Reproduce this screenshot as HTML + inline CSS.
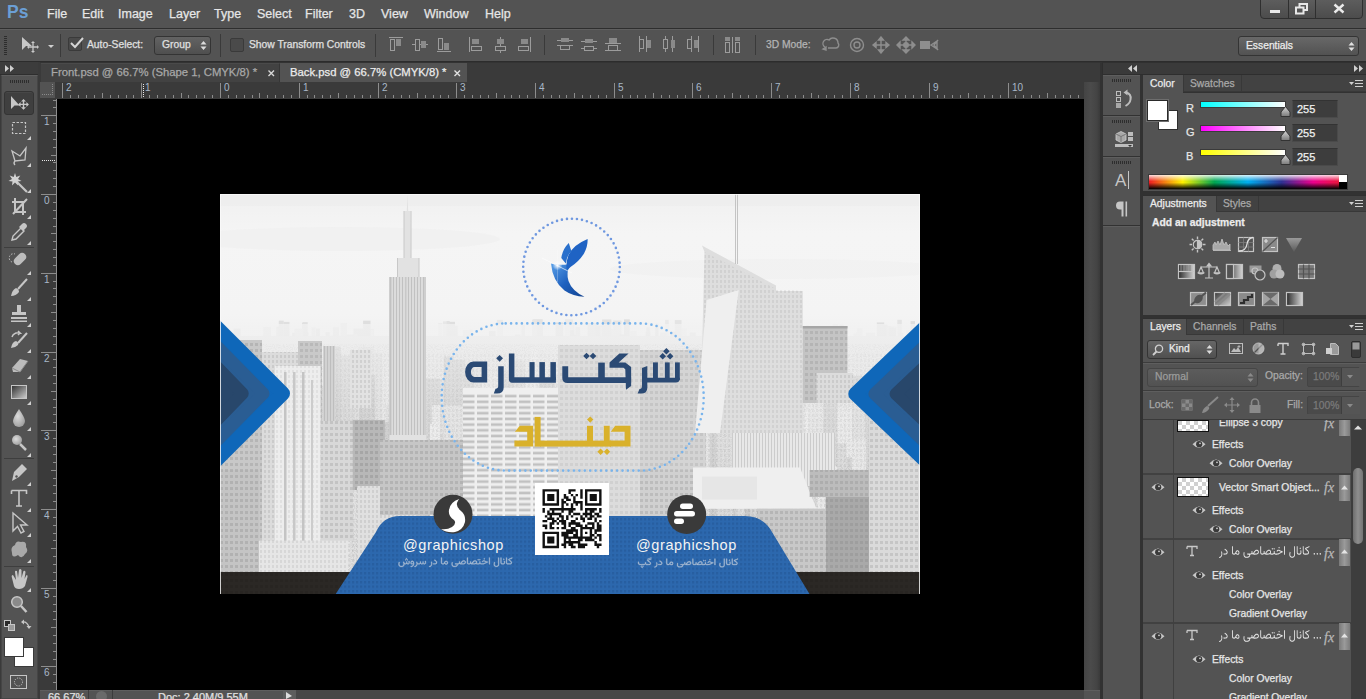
<!DOCTYPE html>
<html><head><meta charset="utf-8">
<style>
*{margin:0;padding:0;box-sizing:border-box}
html,body{width:1366px;height:699px;overflow:hidden;background:#535353;font-family:"Liberation Sans",sans-serif;color:#dcdcdc}
.a{position:absolute}
.t{position:absolute;white-space:nowrap;line-height:1;-webkit-text-stroke:0.25px currentColor}
.menu{font-size:12.5px;color:#e6e6e6;top:8px}
.opt{font-size:10.3px;color:#e0e0e0}
.ic{position:absolute}
</style></head><body>
<!-- ===== MENU BAR ===== -->
<div class="a" style="left:0;top:0;width:1366px;height:28px;background:#535353"></div>
<div class="a" style="left:0;top:28px;width:1366px;height:1px;background:#2e2e2e"></div>
<div class="t" style="left:7px;top:4px;font-size:17.5px;font-weight:bold;color:#6b9fd5;letter-spacing:0.2px;-webkit-text-stroke:0">Ps</div>
<div class="t menu" style="left:47px">File</div>
<div class="t menu" style="left:82px">Edit</div>
<div class="t menu" style="left:118px">Image</div>
<div class="t menu" style="left:169px">Layer</div>
<div class="t menu" style="left:214px">Type</div>
<div class="t menu" style="left:257px">Select</div>
<div class="t menu" style="left:305px">Filter</div>
<div class="t menu" style="left:349px">3D</div>
<div class="t menu" style="left:381px">View</div>
<div class="t menu" style="left:424px">Window</div>
<div class="t menu" style="left:485px">Help</div>
<!-- window buttons -->
<div class="a" style="left:1260px;top:-2px;width:103px;height:21px;border:1px solid #2f2f2f;border-radius:0 0 4px 4px;background:linear-gradient(#5e5e5e,#4c4c4c)"></div>
<div class="a" style="left:1288px;top:0;width:1px;height:18px;background:#2f2f2f"></div>
<div class="a" style="left:1315px;top:0;width:1px;height:18px;background:#2f2f2f"></div>
<div class="a" style="left:1270px;top:10px;width:10px;height:3px;background:#e8e8e8"></div>
<svg class="a" style="left:1295px;top:3px" width="14" height="12"><rect x="4.5" y="1" width="7.5" height="6" fill="none" stroke="#e8e8e8" stroke-width="2"/><rect x="1" y="4.5" width="7.5" height="6" fill="#555" stroke="#e8e8e8" stroke-width="2"/></svg>
<svg class="a" style="left:1333px;top:3px" width="12" height="11"><path d="M1.5 1.5 L10.5 9.5 M10.5 1.5 L1.5 9.5" stroke="#eaeaea" stroke-width="2.4"/></svg>

<!-- ===== OPTIONS BAR ===== -->
<div class="a" style="left:0;top:29px;width:1366px;height:33px;background:#535353;border-top:1px solid #5f5f5f"></div>
<div class="a" style="left:4px;top:36px;width:3px;height:20px;background:repeating-linear-gradient(#2d2d2d 0 1px,transparent 1px 2px)"></div>
<svg class="a" style="left:21px;top:36px" width="34" height="18"><path d="M1 1 L1 14 L5 10 L11 10 Z" fill="#c8c8c8"/><path d="M12 6 V16 M7 11 H17" stroke="#c8c8c8" stroke-width="1.3"/><path d="M12 5 l-2 2 h4z M12 17 l-2 -2 h4z M6 11 l2 -2 v4z M18 11 l-2 -2 v4z" fill="#c8c8c8"/><path d="M27 9 h6 l-3 3z" fill="#d0d0d0"/></svg>
<div class="a" style="left:60px;top:34px;width:1px;height:23px;background:#3a3a3a"></div>
<div class="a" style="left:68px;top:37px;width:14px;height:14px;border:1px solid #3a3a3a;border-radius:2px;background:#4a4a4a"></div>
<svg class="a" style="left:69px;top:36px" width="16" height="14"><path d="M2 7 L6 11 L14 2" stroke="#d6d6d6" stroke-width="2" fill="none"/></svg>
<div class="t opt" style="left:87px;top:40px">Auto-Select:</div>
<div class="a" style="left:154px;top:36px;width:57px;height:19px;border:1px solid #343434;border-radius:3px;background:linear-gradient(#636363,#4f4f4f)"></div>
<div class="t opt" style="left:162px;top:40px">Group</div>
<svg class="a" style="left:200px;top:40px" width="7" height="11"><path d="M0.5 4.5 L3.5 1 L6.5 4.5Z M0.5 6.5 L3.5 10 L6.5 6.5Z" fill="#dcdcdc"/></svg>
<div class="a" style="left:220px;top:34px;width:1px;height:23px;background:#3a3a3a"></div>
<div class="a" style="left:230px;top:38px;width:14px;height:14px;border:1px solid #3a3a3a;border-radius:2px;background:#4a4a4a"></div>
<div class="t opt" style="left:249px;top:40px">Show Transform Controls</div>
<div class="a" style="left:375px;top:34px;width:1px;height:23px;background:#3a3a3a"></div>
<!-- align icons -->
<svg class="a" style="left:385px;top:35px" width="380" height="20" fill="none" stroke="#9c9c9c" stroke-width="1">
 <g transform="translate(4,2)"><path d="M0 0.5 H14"/><rect x="1.5" y="2.5" width="4" height="11"/><rect x="7" y="2" width="5" height="7" fill="#8a8a8a" stroke="none"/></g>
 <g transform="translate(27,2)"><path d="M0 7.5 H16"/><rect x="3.5" y="2.5" width="4" height="11" fill="#535353"/><rect x="9" y="4" width="5" height="7" fill="#8a8a8a" stroke="none"/></g>
 <g transform="translate(52,2)"><path d="M0 14.5 H14"/><rect x="1.5" y="1.5" width="4" height="11"/><rect x="7" y="6" width="5" height="7" fill="#8a8a8a" stroke="none"/></g>
 <g transform="translate(84,2)"><path d="M0.5 0 V15"/><rect x="2.5" y="9.5" width="10" height="4"/><rect x="3" y="2" width="7" height="5" fill="#8a8a8a" stroke="none"/></g>
 <g transform="translate(109,2)"><path d="M6.5 0 V16"/><rect x="1.5" y="9.5" width="10" height="4" fill="#535353"/><rect x="3" y="2" width="7" height="5" fill="#8a8a8a" stroke="none"/></g>
 <g transform="translate(132,2)"><path d="M13.5 0 V15"/><rect x="1.5" y="9.5" width="10" height="4"/><rect x="4" y="2" width="7" height="5" fill="#8a8a8a" stroke="none"/></g>
 <path d="M159.5 0 V20" stroke="#3a3a3a"/>
 <g transform="translate(172,2)"><path d="M0 3.5 H16 M0 8.5 H16"/><rect x="3.5" y="8.5" width="9" height="4"/><rect x="4" y="1" width="8" height="4" fill="#8a8a8a" stroke="none"/></g>
 <g transform="translate(196,2)"><path d="M0 4.5 H16 M0 11.5 H16"/><rect x="3.5" y="9.5" width="9" height="4" fill="#535353"/><rect x="4" y="2" width="8" height="4" fill="#8a8a8a" stroke="none"/></g>
 <g transform="translate(220,2)"><path d="M0 6.5 H16 M0 13.5 H16"/><rect x="3.5" y="8.5" width="9" height="5"/><rect x="4" y="1" width="8" height="5" fill="#8a8a8a" stroke="none"/></g>
 <g transform="translate(254,1)"><path d="M0.5 0 V16 M7.5 0 V16"/><rect x="0.5" y="3.5" width="4" height="9"/><rect x="8" y="4" width="4" height="8" fill="#8a8a8a" stroke="none"/></g>
 <g transform="translate(278,1)"><path d="M2.5 0 V16 M9.5 0 V16"/><rect x="0.5" y="3.5" width="4" height="9" fill="#535353"/><rect x="8" y="4" width="4" height="8" fill="#8a8a8a" stroke="none"/></g>
 <g transform="translate(302,1)"><path d="M4.5 0 V16 M11.5 0 V16"/><rect x="0.5" y="3.5" width="4" height="9"/><rect x="7" y="4" width="4" height="8" fill="#8a8a8a" stroke="none"/></g>
 <path d="M328.5 0 V20" stroke="#3a3a3a"/>
 <g transform="translate(340,2)"><path d="M7.5 0 V16"/><rect x="0.5" y="5.5" width="4" height="10"/><rect x="10.5" y="5.5" width="4" height="10"/><rect x="0" y="0" width="5" height="4" fill="#8a8a8a" stroke="none"/><rect x="10" y="0" width="5" height="4" fill="#8a8a8a" stroke="none"/></g>
 <path d="M370.5 0 V22" stroke="#3a3a3a"/>
</svg>
<div class="t opt" style="left:766px;top:40px;color:#b4b4b4">3D Mode:</div>
<svg class="a" style="left:820px;top:36px" width="125" height="18" fill="none" stroke="#8e8e8e" stroke-width="1.4">
 <path d="M5 11 a4 4 0 0 1 4 -7 a5 5 0 0 1 9 3 a3 3 0 0 1 -2 5 h-8"/><path d="M3 13 l3 -2 l0 3z" fill="#8e8e8e"/>
 <circle cx="37" cy="9" r="6.5"/><circle cx="37" cy="9" r="3"/>
 <path d="M61 2 V16 M54 9 H68"/><path d="M61 1 l-2.5 3 h5z M61 17 l-2.5 -3 h5z M53 9 l3 -2.5 v5z M69 9 l-3 -2.5 v5z" fill="#8e8e8e"/>
 <path d="M79 9 H93 M86 3 V15"/><path d="M86 1 l-3 3 h6z M86 17 l-3 -3 h6z M77 9 l3 -3 v6z M95 9 l-3 -3 v6z" fill="#8e8e8e"/><circle cx="86" cy="9" r="3" fill="#8e8e8e" stroke="none"/>
 <rect x="100" y="5" width="10" height="8" fill="#8e8e8e" stroke="none"/><path d="M111 9 l6 -4 v8z M118 4 l-4 5 l4 5" />
</svg>
<div class="a" style="left:1238px;top:36px;width:121px;height:20px;border:1px solid #343434;border-radius:3px;background:linear-gradient(#686868,#525252)"></div>
<div class="t opt" style="left:1246px;top:41px;color:#ececec">Essentials</div>
<svg class="a" style="left:1348px;top:41px" width="7" height="11"><path d="M0.5 4.5 L3.5 1 L6.5 4.5Z M0.5 6.5 L3.5 10 L6.5 6.5Z" fill="#e0e0e0"/></svg>
<div class="a" style="left:0;top:61px;width:1366px;height:1px;background:#2c2c2c"></div>

<!-- ===== LEFT TOOLBAR ===== -->
<div class="a" style="left:0;top:62px;width:40px;height:637px;background:#3a3a3a"></div>
<div class="a" style="left:0;top:62px;width:38px;height:13px;background:#3c3c3c;border-bottom:1px solid #2e2e2e"></div>
<svg class="a" style="left:5px;top:65px" width="12" height="8"><path d="M0 0 L4 3.5 L0 7Z M5 0 L9 3.5 L5 7Z" fill="#cfcfcf"/></svg>
<div class="a" style="left:1px;top:75px;width:37px;height:624px;background:#535353;border:1px solid #454545;border-top-color:#5f5f5f"></div>
<div class="a" style="left:10px;top:80px;width:20px;height:3px;background:repeating-linear-gradient(90deg,#2d2d2d 0 1px,transparent 1px 2px)"></div>
<div class="a" style="left:4px;top:91px;width:30px;height:24px;background:#3f3f3f;border:1px solid #343434;border-radius:3px;box-shadow:inset 0 1px 0 #474747"></div>
<svg class="a" style="left:0;top:0" width="38" height="699">
<g fill="#c6c6c6" stroke="none">
 <!-- move -->
 <path d="M11 96 L11 109 L14.5 105.5 L19.5 105.5 Z"/>
 <path d="M23.5 99 l-2.5 2.5 h1.8 v2.2 h-2.2 v-1.8 l-2.5 2.5 l2.5 2.5 v-1.8 h2.2 v2.2 h-1.8 l2.5 2.5 l2.5 -2.5 h-1.8 v-2.2 h2.2 v1.8 l2.5 -2.5 l-2.5 -2.5 v1.8 h-2.2 v-2.2 h1.8 z"/>
</g>
<!-- marquee -->
<rect x="12.5" y="122.5" width="13" height="11" fill="none" stroke="#c6c6c6" stroke-width="1.2" stroke-dasharray="2.5 1.5"/>
<!-- lasso -->
<path d="M12 151 L20 156 L26 148 L25 160 L15 161 Z M15 161 q-2 2 0 4" fill="none" stroke="#c6c6c6" stroke-width="1.3"/>
<!-- magic wand -->
<path d="M16 181 L27 192" stroke="#c6c6c6" stroke-width="2.2"/>
<path d="M15 173 l1.3 4 l4 -1.5 l-2.3 3.5 l3.5 2 l-4 .5 l.5 4 l-3 -3 l-3 3 l.5 -4 l-4 -.5 l3.5 -2 l-2.3 -3.5 l4 1.5z" fill="#d2d2d2"/>
<!-- crop -->
<path d="M15 198 V212 H26 M12 202 H23 V215 M13 214 L27 199" fill="none" stroke="#c6c6c6" stroke-width="2"/>
<!-- eyedropper -->
<path d="M12 240 L13 236 L21 228 L24 231 L16 239 Z" fill="none" stroke="#c6c6c6" stroke-width="1.4"/>
<path d="M19 227 L22 224 Q24 222 26 224 Q28 226 26 228 L23 231 Z" fill="#c6c6c6"/>
<line x1="4" y1="247.5" x2="34" y2="247.5" stroke="#3e3e3e"/>
<!-- healing -->
<rect x="13" y="255" width="14" height="8" rx="4" transform="rotate(-45 20 259)" fill="#bdbdbd"/>
<path d="M12 262 a4 4 0 0 1 3 -8" fill="none" stroke="#c6c6c6" stroke-dasharray="1.5 1.5"/>
<!-- brush -->
<path d="M18 289 L27 279" stroke="#c6c6c6" stroke-width="2"/>
<path d="M11 296 Q12 290 16 288 Q19 289 19 292 Q16 296 11 296Z" fill="#c6c6c6"/>
<!-- stamp -->
<path d="M17 305 h4 v7 h5 v3 h-14 v-3 h5z" fill="#c6c6c6"/><rect x="11" y="317" width="16" height="2" fill="#c6c6c6"/><rect x="11" y="320.5" width="16" height="1.5" fill="#c6c6c6"/>
<!-- history brush -->
<path d="M12 337 q2 -5 8 -4 l-2 -2 m2 2 l-2 2" fill="none" stroke="#c6c6c6" stroke-width="1.5"/>
<path d="M18 343 L27 333" stroke="#c6c6c6" stroke-width="2"/><path d="M11 348 Q12 342 16 341 Q19 342 18 345 Q15 348 11 348Z" fill="#c6c6c6"/>
<!-- eraser -->
<path d="M12 368 L20 359 L28 361 L20 372 L13 372 Z" fill="#bcbcbc"/><path d="M12 368 L20 372 L28 361" fill="none" stroke="#8a8a8a"/>
<!-- gradient -->
<defs><linearGradient id="gtool" x1="0" y1="0" x2="1" y2="1"><stop offset="0" stop-color="#2e2e2e"/><stop offset="1" stop-color="#d0d0d0"/></linearGradient>
<radialGradient id="dropg" cx=".4" cy=".4" r=".7"><stop offset="0" stop-color="#dcdcdc"/><stop offset="1" stop-color="#9a9a9a"/></radialGradient></defs>
<rect x="11.5" y="385.5" width="15" height="13" fill="url(#gtool)" stroke="#c6c6c6"/>
<!-- blur drop -->
<path d="M19 409 Q13 418 13 421 A6 6 0 0 0 25 421 Q25 418 19 409Z" fill="url(#dropg)"/>
<!-- dodge -->
<circle cx="17" cy="440" r="5" fill="url(#dropg)"/><path d="M20 444 L26 450" stroke="#c6c6c6" stroke-width="2.5"/>
<line x1="4" y1="458.5" x2="34" y2="458.5" stroke="#3e3e3e"/>
<!-- pen -->
<path d="M12 481 L14 472 L22 464 L27 469 L19 477 Z" fill="#c6c6c6"/><circle cx="16.5" cy="476.5" r="1.2" fill="#535353"/>
<!-- type -->
<path d="M11.5 490.5 H26.5 V494 M11.5 490.5 V494 M19 490.5 V506 M16 506 H22" fill="none" stroke="#c6c6c6" stroke-width="1.6"/>
<!-- path select -->
<path d="M13 513 L13 531 L17.5 526.5 L21 533 L24 531.5 L20.5 525 L27 525 Z" fill="none" stroke="#c6c6c6" stroke-width="1.4"/>
<!-- shape -->
<path d="M12 553 Q10 547 15 545 Q16 540 21 542 Q27 541 26 547 Q29 551 25 554 Q22 560 18 555 Q12 559 12 553Z" fill="#a9a9a9"/>
<line x1="4" y1="566.5" x2="34" y2="566.5" stroke="#3e3e3e"/>
<!-- hand -->
<path d="M12 578 Q11 575 13 575 L16 580 L15 572 Q15 570 17 571 L18 578 L19 570 Q20 568 21.5 570 L21.5 578 L23.5 571 Q25 570 25.5 572 L24.5 579 L26.5 575 Q28 575 27.5 577 L25 586 Q23 589 19 589 Q15 589 14 586 Z" fill="#c6c6c6"/>
<!-- zoom -->
<circle cx="17" cy="602" r="5.3" fill="#8a8a8a" stroke="#c6c6c6" stroke-width="1.5"/><path d="M21 606 L26.5 612" stroke="#c6c6c6" stroke-width="2.5"/>
<!-- default colors + swap -->
<rect x="4.5" y="620.5" width="6" height="6" fill="#2a2a2a" stroke="#c6c6c6"/><rect x="8.5" y="624.5" width="6" height="6" fill="#9a9a9a" stroke="#c6c6c6"/>
<path d="M22 622 q5 -1 7 5" fill="none" stroke="#c6c6c6" stroke-width="1.2"/><path d="M21 622 l3 -2.5 v5z M29 629 l-2.5 -3 h5z" fill="#c6c6c6"/>
<!-- swatches -->
<rect x="14.5" y="647.5" width="19" height="19" fill="#fff" stroke="#3a3a3a"/>
<rect x="4.5" y="637.5" width="19" height="19" fill="#fff" stroke="#3a3a3a"/>
<!-- quick mask -->
<rect x="10.5" y="675.5" width="16" height="13" fill="none" stroke="#c6c6c6"/><circle cx="18.5" cy="682" r="4" fill="none" stroke="#c6c6c6" stroke-dasharray="1.2 1.2"/>
<!-- corner triangles -->
<g fill="#d0d0d0">
 <path d="M31 136 v4 h-4z"/><path d="M31 163 v4 h-4z"/><path d="M31 189 v4 h-4z"/><path d="M31 215 v4 h-4z"/><path d="M31 241 v4 h-4z"/>
 <path d="M31 271 v4 h-4z"/><path d="M31 297 v4 h-4z"/><path d="M31 323 v4 h-4z"/><path d="M31 349 v4 h-4z"/><path d="M31 375 v4 h-4z"/><path d="M31 401 v4 h-4z"/><path d="M31 427 v4 h-4z"/><path d="M31 453 v4 h-4z"/>
 <path d="M31 482 v4 h-4z"/><path d="M31 508 v4 h-4z"/><path d="M31 533 v4 h-4z"/><path d="M31 559 v4 h-4z"/>
 <path d="M31 588 v4 h-4z"/>
</g>
</svg>


<!-- ===== DOCUMENT AREA ===== -->
<div class="a" style="left:40px;top:62px;width:1060px;height:20px;background:#3a3a3a;border-top:1px solid #333"></div>
<div class="a" style="left:41px;top:63px;width:239px;height:19px;background:#424242;border-top:1px solid #4a4a4a;border-right:1px solid #363636"></div>
<div class="t" style="left:51px;top:67px;font-size:11.3px;color:#a8a8a8">Front.psd @ 66.7% (Shape 1, CMYK/8) *</div>
<svg class="a" style="left:267px;top:69px" width="9" height="9"><path d="M1.5 1.5 L7 7 M7 1.5 L1.5 7" stroke="#d8d8d8" stroke-width="1.4"/></svg>
<div class="a" style="left:280px;top:63px;width:187px;height:19px;background:#535353"></div>
<div class="t" style="left:290px;top:67px;font-size:11.3px;color:#ececec">Back.psd @ 66.7% (CMYK/8) *</div>
<svg class="a" style="left:453px;top:69px" width="9" height="9"><path d="M1.5 1.5 L7 7 M7 1.5 L1.5 7" stroke="#e0e0e0" stroke-width="1.4"/></svg>
<!-- rulers -->
<div class="a" style="left:40px;top:82px;width:1044px;height:17px;background:#3a3a3a"></div>
<div class="a" style="left:40px;top:99px;width:17px;height:591px;background:#3a3a3a"></div>
<div class="a" style="left:40px;top:82px;width:16px;height:16px;background:#535353;border-right:1px solid #3a3a3a"></div>
<div class="a" style="left:42px;top:94px;width:12px;height:1px;background:repeating-linear-gradient(90deg,#8a8a8a 0 1px,transparent 1px 2px)"></div>
<div class="a" style="left:52px;top:84px;width:1px;height:12px;background:repeating-linear-gradient(#8a8a8a 0 1px,transparent 1px 2px)"></div>
<svg class="a" style="left:57px;top:82px" width="1027" height="16"><g stroke="#8d8d8d" stroke-width="1"><line x1="5.5" y1="1" x2="5.5" y2="16" /><line x1="13.5" y1="13" x2="13.5" y2="16" /><line x1="21.5" y1="13" x2="21.5" y2="16" /><line x1="29.5" y1="13" x2="29.5" y2="16" /><line x1="37.5" y1="13" x2="37.5" y2="16" /><line x1="45.5" y1="11" x2="45.5" y2="16" /><line x1="53.5" y1="13" x2="53.5" y2="16" /><line x1="61.5" y1="13" x2="61.5" y2="16" /><line x1="69.5" y1="13" x2="69.5" y2="16" /><line x1="76.5" y1="13" x2="76.5" y2="16" /><line x1="84.5" y1="1" x2="84.5" y2="16" /><line x1="92.5" y1="13" x2="92.5" y2="16" /><line x1="100.5" y1="13" x2="100.5" y2="16" /><line x1="108.5" y1="13" x2="108.5" y2="16" /><line x1="116.5" y1="13" x2="116.5" y2="16" /><line x1="124.5" y1="11" x2="124.5" y2="16" /><line x1="131.5" y1="13" x2="131.5" y2="16" /><line x1="139.5" y1="13" x2="139.5" y2="16" /><line x1="147.5" y1="13" x2="147.5" y2="16" /><line x1="155.5" y1="13" x2="155.5" y2="16" /><line x1="163.5" y1="1" x2="163.5" y2="16" /><line x1="171.5" y1="13" x2="171.5" y2="16" /><line x1="179.5" y1="13" x2="179.5" y2="16" /><line x1="187.5" y1="13" x2="187.5" y2="16" /><line x1="195.5" y1="13" x2="195.5" y2="16" /><line x1="202.5" y1="11" x2="202.5" y2="16" /><line x1="210.5" y1="13" x2="210.5" y2="16" /><line x1="218.5" y1="13" x2="218.5" y2="16" /><line x1="226.5" y1="13" x2="226.5" y2="16" /><line x1="234.5" y1="13" x2="234.5" y2="16" /><line x1="242.5" y1="1" x2="242.5" y2="16" /><line x1="250.5" y1="13" x2="250.5" y2="16" /><line x1="257.5" y1="13" x2="257.5" y2="16" /><line x1="265.5" y1="13" x2="265.5" y2="16" /><line x1="273.5" y1="13" x2="273.5" y2="16" /><line x1="281.5" y1="11" x2="281.5" y2="16" /><line x1="289.5" y1="13" x2="289.5" y2="16" /><line x1="297.5" y1="13" x2="297.5" y2="16" /><line x1="305.5" y1="13" x2="305.5" y2="16" /><line x1="313.5" y1="13" x2="313.5" y2="16" /><line x1="321.5" y1="1" x2="321.5" y2="16" /><line x1="328.5" y1="13" x2="328.5" y2="16" /><line x1="336.5" y1="13" x2="336.5" y2="16" /><line x1="344.5" y1="13" x2="344.5" y2="16" /><line x1="352.5" y1="13" x2="352.5" y2="16" /><line x1="360.5" y1="11" x2="360.5" y2="16" /><line x1="368.5" y1="13" x2="368.5" y2="16" /><line x1="376.5" y1="13" x2="376.5" y2="16" /><line x1="383.5" y1="13" x2="383.5" y2="16" /><line x1="391.5" y1="13" x2="391.5" y2="16" /><line x1="399.5" y1="1" x2="399.5" y2="16" /><line x1="407.5" y1="13" x2="407.5" y2="16" /><line x1="415.5" y1="13" x2="415.5" y2="16" /><line x1="423.5" y1="13" x2="423.5" y2="16" /><line x1="431.5" y1="13" x2="431.5" y2="16" /><line x1="439.5" y1="11" x2="439.5" y2="16" /><line x1="447.5" y1="13" x2="447.5" y2="16" /><line x1="454.5" y1="13" x2="454.5" y2="16" /><line x1="462.5" y1="13" x2="462.5" y2="16" /><line x1="470.5" y1="13" x2="470.5" y2="16" /><line x1="478.5" y1="1" x2="478.5" y2="16" /><line x1="486.5" y1="13" x2="486.5" y2="16" /><line x1="494.5" y1="13" x2="494.5" y2="16" /><line x1="502.5" y1="13" x2="502.5" y2="16" /><line x1="509.5" y1="13" x2="509.5" y2="16" /><line x1="517.5" y1="11" x2="517.5" y2="16" /><line x1="525.5" y1="13" x2="525.5" y2="16" /><line x1="533.5" y1="13" x2="533.5" y2="16" /><line x1="541.5" y1="13" x2="541.5" y2="16" /><line x1="549.5" y1="13" x2="549.5" y2="16" /><line x1="557.5" y1="1" x2="557.5" y2="16" /><line x1="565.5" y1="13" x2="565.5" y2="16" /><line x1="573.5" y1="13" x2="573.5" y2="16" /><line x1="580.5" y1="13" x2="580.5" y2="16" /><line x1="588.5" y1="13" x2="588.5" y2="16" /><line x1="596.5" y1="11" x2="596.5" y2="16" /><line x1="604.5" y1="13" x2="604.5" y2="16" /><line x1="612.5" y1="13" x2="612.5" y2="16" /><line x1="620.5" y1="13" x2="620.5" y2="16" /><line x1="628.5" y1="13" x2="628.5" y2="16" /><line x1="635.5" y1="1" x2="635.5" y2="16" /><line x1="643.5" y1="13" x2="643.5" y2="16" /><line x1="651.5" y1="13" x2="651.5" y2="16" /><line x1="659.5" y1="13" x2="659.5" y2="16" /><line x1="667.5" y1="13" x2="667.5" y2="16" /><line x1="675.5" y1="11" x2="675.5" y2="16" /><line x1="683.5" y1="13" x2="683.5" y2="16" /><line x1="691.5" y1="13" x2="691.5" y2="16" /><line x1="699.5" y1="13" x2="699.5" y2="16" /><line x1="706.5" y1="13" x2="706.5" y2="16" /><line x1="714.5" y1="1" x2="714.5" y2="16" /><line x1="722.5" y1="13" x2="722.5" y2="16" /><line x1="730.5" y1="13" x2="730.5" y2="16" /><line x1="738.5" y1="13" x2="738.5" y2="16" /><line x1="746.5" y1="13" x2="746.5" y2="16" /><line x1="754.5" y1="11" x2="754.5" y2="16" /><line x1="761.5" y1="13" x2="761.5" y2="16" /><line x1="769.5" y1="13" x2="769.5" y2="16" /><line x1="777.5" y1="13" x2="777.5" y2="16" /><line x1="785.5" y1="13" x2="785.5" y2="16" /><line x1="793.5" y1="1" x2="793.5" y2="16" /><line x1="801.5" y1="13" x2="801.5" y2="16" /><line x1="809.5" y1="13" x2="809.5" y2="16" /><line x1="817.5" y1="13" x2="817.5" y2="16" /><line x1="825.5" y1="13" x2="825.5" y2="16" /><line x1="832.5" y1="11" x2="832.5" y2="16" /><line x1="840.5" y1="13" x2="840.5" y2="16" /><line x1="848.5" y1="13" x2="848.5" y2="16" /><line x1="856.5" y1="13" x2="856.5" y2="16" /><line x1="864.5" y1="13" x2="864.5" y2="16" /><line x1="872.5" y1="1" x2="872.5" y2="16" /><line x1="880.5" y1="13" x2="880.5" y2="16" /><line x1="887.5" y1="13" x2="887.5" y2="16" /><line x1="895.5" y1="13" x2="895.5" y2="16" /><line x1="903.5" y1="13" x2="903.5" y2="16" /><line x1="911.5" y1="11" x2="911.5" y2="16" /><line x1="919.5" y1="13" x2="919.5" y2="16" /><line x1="927.5" y1="13" x2="927.5" y2="16" /><line x1="935.5" y1="13" x2="935.5" y2="16" /><line x1="943.5" y1="13" x2="943.5" y2="16" /><line x1="951.5" y1="1" x2="951.5" y2="16" /><line x1="958.5" y1="13" x2="958.5" y2="16" /><line x1="966.5" y1="13" x2="966.5" y2="16" /><line x1="974.5" y1="13" x2="974.5" y2="16" /><line x1="982.5" y1="13" x2="982.5" y2="16" /><line x1="990.5" y1="11" x2="990.5" y2="16" /><line x1="998.5" y1="13" x2="998.5" y2="16" /><line x1="1006.5" y1="13" x2="1006.5" y2="16" /><line x1="1013.5" y1="13" x2="1013.5" y2="16" /><line x1="1021.5" y1="13" x2="1021.5" y2="16" /></g><g fill="#a9b8c8" font-size="10" font-family="Liberation Sans"><text x="9" y="9">2</text><text x="88" y="9">1</text><text x="167" y="9">0</text><text x="246" y="9">1</text><text x="325" y="9">2</text><text x="403" y="9">3</text><text x="482" y="9">4</text><text x="561" y="9">5</text><text x="639" y="9">6</text><text x="718" y="9">7</text><text x="797" y="9">8</text><text x="876" y="9">9</text><text x="955" y="9">10</text></g><line x1="0" y1="16.5" x2="1027" y2="16.5" stroke="#8d8d8d"/></svg>
<svg class="a" style="left:40px;top:99px" width="17" height="591"><g stroke="#8d8d8d" stroke-width="1"><line x1="13" y1="1.5" x2="16" y2="1.5" /><line x1="13" y1="8.5" x2="16" y2="8.5" /><line x1="1" y1="16.5" x2="16" y2="16.5" /><line x1="13" y1="24.5" x2="16" y2="24.5" /><line x1="13" y1="32.5" x2="16" y2="32.5" /><line x1="13" y1="40.5" x2="16" y2="40.5" /><line x1="13" y1="48.5" x2="16" y2="48.5" /><line x1="11" y1="56.5" x2="16" y2="56.5" /><line x1="13" y1="63.5" x2="16" y2="63.5" /><line x1="13" y1="71.5" x2="16" y2="71.5" /><line x1="13" y1="79.5" x2="16" y2="79.5" /><line x1="13" y1="87.5" x2="16" y2="87.5" /><line x1="1" y1="95.5" x2="16" y2="95.5" /><line x1="13" y1="103.5" x2="16" y2="103.5" /><line x1="13" y1="111.5" x2="16" y2="111.5" /><line x1="13" y1="119.5" x2="16" y2="119.5" /><line x1="13" y1="127.5" x2="16" y2="127.5" /><line x1="11" y1="134.5" x2="16" y2="134.5" /><line x1="13" y1="142.5" x2="16" y2="142.5" /><line x1="13" y1="150.5" x2="16" y2="150.5" /><line x1="13" y1="158.5" x2="16" y2="158.5" /><line x1="13" y1="166.5" x2="16" y2="166.5" /><line x1="1" y1="174.5" x2="16" y2="174.5" /><line x1="13" y1="182.5" x2="16" y2="182.5" /><line x1="13" y1="189.5" x2="16" y2="189.5" /><line x1="13" y1="197.5" x2="16" y2="197.5" /><line x1="13" y1="205.5" x2="16" y2="205.5" /><line x1="11" y1="213.5" x2="16" y2="213.5" /><line x1="13" y1="221.5" x2="16" y2="221.5" /><line x1="13" y1="229.5" x2="16" y2="229.5" /><line x1="13" y1="237.5" x2="16" y2="237.5" /><line x1="13" y1="245.5" x2="16" y2="245.5" /><line x1="1" y1="253.5" x2="16" y2="253.5" /><line x1="13" y1="260.5" x2="16" y2="260.5" /><line x1="13" y1="268.5" x2="16" y2="268.5" /><line x1="13" y1="276.5" x2="16" y2="276.5" /><line x1="13" y1="284.5" x2="16" y2="284.5" /><line x1="11" y1="292.5" x2="16" y2="292.5" /><line x1="13" y1="300.5" x2="16" y2="300.5" /><line x1="13" y1="308.5" x2="16" y2="308.5" /><line x1="13" y1="315.5" x2="16" y2="315.5" /><line x1="13" y1="323.5" x2="16" y2="323.5" /><line x1="1" y1="331.5" x2="16" y2="331.5" /><line x1="13" y1="339.5" x2="16" y2="339.5" /><line x1="13" y1="347.5" x2="16" y2="347.5" /><line x1="13" y1="355.5" x2="16" y2="355.5" /><line x1="13" y1="363.5" x2="16" y2="363.5" /><line x1="11" y1="371.5" x2="16" y2="371.5" /><line x1="13" y1="379.5" x2="16" y2="379.5" /><line x1="13" y1="386.5" x2="16" y2="386.5" /><line x1="13" y1="394.5" x2="16" y2="394.5" /><line x1="13" y1="402.5" x2="16" y2="402.5" /><line x1="1" y1="410.5" x2="16" y2="410.5" /><line x1="13" y1="418.5" x2="16" y2="418.5" /><line x1="13" y1="426.5" x2="16" y2="426.5" /><line x1="13" y1="434.5" x2="16" y2="434.5" /><line x1="13" y1="441.5" x2="16" y2="441.5" /><line x1="11" y1="449.5" x2="16" y2="449.5" /><line x1="13" y1="457.5" x2="16" y2="457.5" /><line x1="13" y1="465.5" x2="16" y2="465.5" /><line x1="13" y1="473.5" x2="16" y2="473.5" /><line x1="13" y1="481.5" x2="16" y2="481.5" /><line x1="1" y1="489.5" x2="16" y2="489.5" /><line x1="13" y1="497.5" x2="16" y2="497.5" /><line x1="13" y1="505.5" x2="16" y2="505.5" /><line x1="13" y1="512.5" x2="16" y2="512.5" /><line x1="13" y1="520.5" x2="16" y2="520.5" /><line x1="11" y1="528.5" x2="16" y2="528.5" /><line x1="13" y1="536.5" x2="16" y2="536.5" /><line x1="13" y1="544.5" x2="16" y2="544.5" /><line x1="13" y1="552.5" x2="16" y2="552.5" /><line x1="13" y1="560.5" x2="16" y2="560.5" /><line x1="1" y1="567.5" x2="16" y2="567.5" /><line x1="13" y1="575.5" x2="16" y2="575.5" /><line x1="13" y1="583.5" x2="16" y2="583.5" /></g><g fill="#a9b8c8" font-size="10" font-family="Liberation Sans"><text x="4" y="26">1</text><text x="4" y="105">0</text><text x="4" y="184">1</text><text x="4" y="263">2</text><text x="4" y="341">3</text><text x="4" y="420">4</text><text x="4" y="499">5</text><text x="4" y="577">6</text></g><line x1="16.5" y1="0" x2="16.5" y2="591" stroke="#8d8d8d"/></svg>
<div class="a" style="left:42px;top:160px;width:13px;height:1px;background:repeating-linear-gradient(90deg,#e8e8e8 0 1px,transparent 1px 2px)"></div>
<div class="a" style="left:143px;top:84px;width:1px;height:13px;background:repeating-linear-gradient(#e8e8e8 0 1px,transparent 1px 2px)"></div>
<!-- canvas -->
<div class="a" style="left:57px;top:99px;width:1027px;height:591px;background:#000"></div>
<!-- vertical scrollbar -->
<div class="a" style="left:1084px;top:82px;width:16px;height:608px;background:linear-gradient(90deg,#444,#4b4b4b 40%,#444 80%,#3a3a3a)"></div>
<!-- status bar -->
<div class="a" style="left:40px;top:690px;width:1060px;height:9px;background:#535353;border-top:1px solid #5e5e5e"></div>
<div class="t" style="left:48px;top:692px;font-size:11px;color:#e0e0e0">66.67%</div>
<div class="a" style="left:88px;top:690px;width:1px;height:9px;background:#3c3c3c"></div>
<div class="a" style="left:96px;top:691px;width:11px;height:11px;border-radius:50%;background:#6a6a6a"></div>
<div class="a" style="left:112px;top:690px;width:1px;height:9px;background:#3c3c3c"></div>
<div class="t" style="left:158px;top:692px;font-size:11px;color:#e0e0e0">Doc: 2.40M/9.55M</div>
<div class="a" style="left:283px;top:690px;width:13px;height:9px;background:#5d5d5d"></div>
<svg class="a" style="left:286px;top:692px" width="7" height="7"><path d="M0 0 L6 4 L0 7Z" fill="#dcdcdc"/></svg>
<div class="a" style="left:296px;top:690px;width:788px;height:9px;background:#474747"></div>

<svg class="a" style="left:220px;top:194px" width="700" height="400" viewBox="0 0 700 400">
<defs>
<linearGradient id="sky" x1="0" y1="0" x2="0" y2="1">
 <stop offset="0" stop-color="#f0f0f0"/><stop offset="0.1" stop-color="#f5f5f5"/><stop offset="0.3" stop-color="#f4f4f4"/><stop offset="0.36" stop-color="#f0f0f0"/><stop offset="0.42" stop-color="#e8e8e8"/><stop offset="1" stop-color="#d8d8d8"/>
</linearGradient>
<pattern id="win" width="4" height="5" patternUnits="userSpaceOnUse"><rect x="0" y="0" width="2" height="3" fill="#000" opacity="0.13"/></pattern>
<pattern id="win2" width="5" height="6" patternUnits="userSpaceOnUse"><rect x="0" y="1" width="3" height="3" fill="#000" opacity="0.16"/></pattern>
<pattern id="vst" width="3" height="4" patternUnits="userSpaceOnUse"><rect x="0" y="0" width="1" height="4" fill="#000" opacity="0.12"/></pattern>
<pattern id="hrow" width="14" height="5.7" patternUnits="userSpaceOnUse"><rect x="1" y="1.5" width="11.5" height="2.6" fill="#9a9a9a" opacity="0.55"/></pattern>
<pattern id="bwin" width="4" height="4.5" patternUnits="userSpaceOnUse"><rect x="0" y="0" width="2.2" height="2.4" fill="#0b2a55" opacity="0.16"/></pattern>
<filter id="noise" x="0" y="0" width="100%" height="100%"><feTurbulence type="fractalNoise" baseFrequency="0.9" numOctaves="2" seed="3"/><feColorMatrix values="0 0 0 0 0  0 0 0 0 0  0 0 0 0 0  0 0 0 0.9 -0.35"/></filter>
<linearGradient id="haze" x1="0" y1="0" x2="0" y2="1"><stop offset="0" stop-color="#f2f2f2" stop-opacity=".75"/><stop offset="0.35" stop-color="#f2f2f2" stop-opacity=".35"/><stop offset="1" stop-color="#f2f2f2" stop-opacity="0"/></linearGradient>
<clipPath id="cardclip"><rect x="0" y="0" width="700" height="400"/></clipPath>
<radialGradient id="spark" cx="0.5" cy="0.5" r="0.5"><stop offset="0" stop-color="#fff" stop-opacity="1"/><stop offset="1" stop-color="#fff" stop-opacity="0"/></radialGradient>
<linearGradient id="birdg" x1="0" y1="0" x2="1" y2="1"><stop offset="0" stop-color="#5aa0e8"/><stop offset="0.5" stop-color="#1f62c0"/><stop offset="1" stop-color="#12428f"/></linearGradient>
</defs>
<g clip-path="url(#cardclip)">
<rect x="0" y="0" width="700" height="400" fill="url(#sky)"/>
<ellipse cx="120" cy="45" rx="160" ry="12" fill="#ececec" opacity=".35"/><ellipse cx="560" cy="75" rx="170" ry="10" fill="#ebebeb" opacity=".3"/><rect x="0" y="0" width="700" height="12" fill="#ebebeb" opacity=".5"/>
<rect x="226.7" y="130.9" width="4.1" height="34.1" fill="rgb(223,223,223)"/>
<rect x="574.9" y="132.1" width="3.7" height="32.9" fill="rgb(230,230,230)"/>
<rect x="150.3" y="134.9" width="3.6" height="30.1" fill="rgb(225,225,225)"/>
<rect x="63.5" y="127.9" width="6.0" height="37.1" fill="rgb(223,223,223)"/>
<rect x="663.2" y="132.1" width="7.4" height="32.9" fill="rgb(222,222,222)"/>
<rect x="404.0" y="125.4" width="5.8" height="39.6" fill="rgb(222,222,222)"/>
<rect x="389.7" y="134.9" width="3.9" height="30.1" fill="rgb(230,230,230)"/>
<rect x="82.5" y="128.1" width="5.2" height="36.9" fill="rgb(224,224,224)"/>
<rect x="72.1" y="138.8" width="7.0" height="26.2" fill="rgb(223,223,223)"/>
<rect x="383.4" y="141.0" width="3.4" height="24.0" fill="rgb(225,225,225)"/>
<rect x="347.5" y="128.8" width="6.7" height="36.2" fill="rgb(229,229,229)"/>
<rect x="409.9" y="136.9" width="6.2" height="28.1" fill="rgb(234,234,234)"/>
<rect x="125.8" y="140.6" width="8.5" height="24.4" fill="rgb(226,226,226)"/>
<rect x="367.6" y="129.6" width="9.1" height="35.4" fill="rgb(226,226,226)"/>
<rect x="426.3" y="133.3" width="3.5" height="31.7" fill="rgb(224,224,224)"/>
<rect x="530.0" y="133.7" width="4.1" height="31.3" fill="rgb(222,222,222)"/>
<rect x="673.4" y="132.5" width="3.5" height="32.5" fill="rgb(234,234,234)"/>
<rect x="612.8" y="130.2" width="5.2" height="34.8" fill="rgb(231,231,231)"/>
<rect x="347.7" y="140.8" width="8.6" height="24.2" fill="rgb(223,223,223)"/>
<rect x="661.3" y="130.7" width="6.3" height="34.3" fill="rgb(222,222,222)"/>
<rect x="511.8" y="132.2" width="5.2" height="32.8" fill="rgb(232,232,232)"/>
<rect x="575.3" y="135.4" width="5.0" height="29.6" fill="rgb(232,232,232)"/>
<rect x="242.9" y="136.0" width="9.6" height="29.0" fill="rgb(231,231,231)"/>
<rect x="82.0" y="128.9" width="3.4" height="36.1" fill="rgb(224,224,224)"/>
<rect x="516.9" y="126.4" width="5.8" height="38.6" fill="rgb(229,229,229)"/>
<rect x="56.4" y="132.7" width="6.1" height="32.3" fill="rgb(224,224,224)"/>
<rect x="573.5" y="137.3" width="9.0" height="27.7" fill="rgb(228,228,228)"/>
<rect x="690.5" y="135.5" width="7.8" height="29.5" fill="rgb(225,225,225)"/>
<rect x="105.6" y="138.1" width="4.2" height="26.9" fill="rgb(225,225,225)"/>
<rect x="8.4" y="138.9" width="8.8" height="26.1" fill="rgb(226,226,226)"/>
<rect x="2.9" y="135.7" width="5.9" height="29.3" fill="rgb(231,231,231)"/>
<rect x="223.0" y="127.4" width="3.9" height="37.6" fill="rgb(231,231,231)"/>
<rect x="458.5" y="134.2" width="8.2" height="30.8" fill="rgb(234,234,234)"/>
<rect x="666.3" y="132.5" width="7.8" height="32.5" fill="rgb(228,228,228)"/>
<rect x="279.3" y="131.2" width="3.7" height="33.8" fill="rgb(222,222,222)"/>
<rect x="133.4" y="134.5" width="9.9" height="30.5" fill="rgb(223,223,223)"/>
<rect x="238.0" y="142.0" width="3.4" height="23.0" fill="rgb(224,224,224)"/>
<rect x="375.6" y="131.6" width="9.6" height="33.4" fill="rgb(223,223,223)"/>
<rect x="612.0" y="139.5" width="7.3" height="25.5" fill="rgb(226,226,226)"/>
<rect x="668.8" y="133.9" width="7.2" height="31.1" fill="rgb(223,223,223)"/>
<rect x="594.3" y="134.1" width="10.0" height="30.9" fill="rgb(229,229,229)"/>
<rect x="218.3" y="129.3" width="4.0" height="35.7" fill="rgb(233,233,233)"/>
<rect x="185.3" y="139.3" width="8.8" height="25.7" fill="rgb(222,222,222)"/>
<rect x="143.7" y="135.9" width="9.7" height="29.1" fill="rgb(233,233,233)"/>
<rect x="380.2" y="133.0" width="3.2" height="32.0" fill="rgb(232,232,232)"/>
<rect x="604.3" y="137.6" width="7.9" height="27.4" fill="rgb(227,227,227)"/>
<rect x="635.8" y="138.2" width="5.5" height="26.8" fill="rgb(230,230,230)"/>
<rect x="545.3" y="138.2" width="5.3" height="26.8" fill="rgb(234,234,234)"/>
<rect x="551.9" y="138.7" width="8.3" height="26.3" fill="rgb(225,225,225)"/>
<rect x="572.8" y="138.1" width="8.2" height="26.9" fill="rgb(230,230,230)"/>
<rect x="344.9" y="125.2" width="8.1" height="39.8" fill="rgb(234,234,234)"/>
<rect x="195.6" y="130.2" width="4.8" height="34.8" fill="rgb(227,227,227)"/>
<rect x="313.1" y="125.2" width="9.6" height="39.8" fill="rgb(227,227,227)"/>
<rect x="56.4" y="134.0" width="3.7" height="31.0" fill="rgb(227,227,227)"/>
<rect x="143.1" y="126.7" width="7.4" height="38.3" fill="rgb(222,222,222)"/>
<rect x="335.6" y="128.4" width="7.6" height="36.6" fill="rgb(223,223,223)"/>
<rect x="584.3" y="135.4" width="3.8" height="29.6" fill="rgb(233,233,233)"/>
<rect x="525.1" y="139.0" width="6.3" height="26.0" fill="rgb(234,234,234)"/>
<rect x="445.1" y="125.9" width="3.6" height="39.1" fill="rgb(233,233,233)"/>
<rect x="277.1" y="125.9" width="5.8" height="39.1" fill="rgb(233,233,233)"/>
<rect x="111.2" y="141.5" width="10.0" height="23.5" fill="rgb(231,231,231)"/>
<rect x="633.4" y="139.5" width="8.6" height="25.5" fill="rgb(231,231,231)"/>
<rect x="686.2" y="136.0" width="7.6" height="29.0" fill="rgb(230,230,230)"/>
<rect x="383.8" y="128.4" width="3.1" height="36.6" fill="rgb(233,233,233)"/>
<rect x="454.8" y="126.1" width="6.7" height="38.9" fill="rgb(228,228,228)"/>
<rect x="690.6" y="127.1" width="4.4" height="37.9" fill="rgb(222,222,222)"/>
<rect x="176.3" y="137.9" width="5.1" height="27.1" fill="rgb(231,231,231)"/>
<rect x="228.2" y="127.8" width="6.8" height="37.2" fill="rgb(222,222,222)"/>
<rect x="637.0" y="134.2" width="5.5" height="30.8" fill="rgb(231,231,231)"/>
<rect x="570.5" y="127.9" width="6.6" height="37.1" fill="rgb(230,230,230)"/>
<rect x="91.5" y="133.3" width="4.1" height="31.7" fill="rgb(229,229,229)"/>
<rect x="543.6" y="128.8" width="7.3" height="36.2" fill="rgb(224,224,224)"/>
<rect x="120.6" y="129.7" width="6.3" height="35.3" fill="rgb(230,230,230)"/>
<rect x="43.2" y="133.0" width="7.8" height="32.0" fill="rgb(229,229,229)"/>
<rect x="549.0" y="132.5" width="3.7" height="32.5" fill="rgb(225,225,225)"/>
<rect x="133.9" y="140.3" width="3.3" height="24.7" fill="rgb(229,229,229)"/>
<rect x="393.2" y="126.5" width="8.3" height="38.5" fill="rgb(229,229,229)"/>
<rect x="227.9" y="131.7" width="9.8" height="33.3" fill="rgb(225,225,225)"/>
<rect x="484.9" y="132.9" width="6.2" height="32.1" fill="rgb(229,229,229)"/>
<rect x="355.4" y="133.1" width="4.7" height="31.9" fill="rgb(226,226,226)"/>
<rect x="645.9" y="138.6" width="9.2" height="26.4" fill="rgb(229,229,229)"/>
<rect x="96.0" y="134.5" width="3.9" height="30.5" fill="rgb(223,223,223)"/>
<rect x="469.8" y="138.4" width="6.0" height="26.6" fill="rgb(226,226,226)"/>
<rect x="548.8" y="139.4" width="9.3" height="25.6" fill="rgb(233,233,233)"/>
<rect x="450.4" y="137.7" width="5.6" height="27.3" fill="rgb(224,224,224)"/>
<rect x="677.3" y="125.8" width="4.5" height="39.2" fill="rgb(228,228,228)"/>
<rect x="619.5" y="130.6" width="4.1" height="34.4" fill="rgb(225,225,225)"/>
<rect x="113.0" y="133.2" width="6.0" height="31.8" fill="rgb(227,227,227)"/>
<rect x="294.9" y="140.4" width="5.5" height="24.6" fill="rgb(227,227,227)"/>
<rect x="13.6" y="134.5" width="6.9" height="30.5" fill="rgb(222,222,222)"/>
<rect x="269.0" y="137.0" width="6.6" height="28.0" fill="rgb(223,223,223)"/>
<rect x="79.0" y="138.1" width="9.4" height="26.9" fill="rgb(223,223,223)"/>
<rect x="58.8" y="126.6" width="4.9" height="38.4" fill="rgb(224,224,224)"/>
<rect x="189.3" y="134.8" width="3.9" height="30.2" fill="rgb(232,232,232)"/>
<rect x="573.3" y="139.5" width="4.8" height="25.5" fill="rgb(230,230,230)"/>
<rect x="399.4" y="140.5" width="7.9" height="24.5" fill="rgb(222,222,222)"/>
<rect x="559.7" y="126.8" width="4.3" height="38.2" fill="rgb(226,226,226)"/>
<rect x="656.8" y="128.4" width="7.4" height="36.6" fill="rgb(223,223,223)"/>
<rect x="425.7" y="137.5" width="4.6" height="27.5" fill="rgb(223,223,223)"/>
<rect x="317.6" y="132.6" width="5.4" height="32.4" fill="rgb(226,226,226)"/>
<rect x="435.2" y="129.9" width="3.3" height="35.1" fill="rgb(223,223,223)"/>
<rect x="678.4" y="138.9" width="4.8" height="26.1" fill="rgb(226,226,226)"/>
<rect x="440.1" y="138.5" width="6.7" height="26.5" fill="rgb(229,229,229)"/>
<rect x="350.1" y="136.1" width="4.2" height="28.9" fill="rgb(222,222,222)"/>
<rect x="696.1" y="141.7" width="3.3" height="23.3" fill="rgb(230,230,230)"/>
<rect x="385.7" y="133.9" width="4.3" height="31.1" fill="rgb(229,229,229)"/>
<rect x="74.4" y="134.7" width="8.7" height="30.3" fill="rgb(229,229,229)"/>
<rect x="382.1" y="125.5" width="9.2" height="39.5" fill="rgb(226,226,226)"/>
<rect x="481.4" y="136.2" width="9.9" height="28.8" fill="rgb(233,233,233)"/>
<rect x="510.2" y="125.2" width="4.0" height="39.8" fill="rgb(222,222,222)"/>
<rect x="585.9" y="131.4" width="3.1" height="33.6" fill="rgb(226,226,226)"/>
<rect x="301.5" y="130.7" width="3.4" height="34.3" fill="rgb(228,228,228)"/>
<rect x="609.4" y="137.2" width="7.7" height="27.8" fill="rgb(225,225,225)"/>
<rect x="484.9" y="138.8" width="3.3" height="26.2" fill="rgb(226,226,226)"/>
<rect x="312.1" y="125.6" width="4.8" height="39.4" fill="rgb(230,230,230)"/>
<rect x="226.5" y="127.0" width="3.2" height="38.0" fill="rgb(225,225,225)"/>
<rect x="249.6" y="135.5" width="3.0" height="29.5" fill="rgb(229,229,229)"/>
<rect x="195.3" y="137.8" width="7.6" height="27.2" fill="rgb(234,234,234)"/>
<rect x="3.5" y="140.5" width="4.8" height="24.5" fill="rgb(228,228,228)"/>
<rect x="410.8" y="136.9" width="5.8" height="28.1" fill="rgb(232,232,232)"/>
<rect x="0" y="142" width="700" height="40" fill="#e4e4e4"/>
<rect x="311.2" y="307.1" width="14.5" height="72.9" fill="rgb(225,225,225)"/>
<rect x="310.8" y="182.3" width="19.5" height="197.7" fill="rgb(228,228,228)"/>
<rect x="327.8" y="181.6" width="15.4" height="198.4" fill="rgb(224,224,224)"/>
<rect x="205.4" y="287.6" width="6.5" height="92.4" fill="rgb(236,236,236)"/>
<rect x="19.7" y="314.0" width="21.7" height="66.0" fill="rgb(235,235,235)"/>
<rect x="451.6" y="291.4" width="15.6" height="88.6" fill="rgb(200,200,200)"/>
<rect x="32.3" y="191.1" width="8.2" height="188.9" fill="rgb(197,197,197)"/>
<rect x="542.5" y="250.5" width="10.5" height="129.5" fill="rgb(208,208,208)"/>
<rect x="358.6" y="235.0" width="15.9" height="145.0" fill="rgb(201,201,201)"/>
<rect x="314.7" y="319.6" width="9.7" height="60.4" fill="rgb(201,201,201)"/>
<rect x="492.5" y="189.0" width="10.4" height="191.0" fill="rgb(214,214,214)"/>
<rect x="11.1" y="168.3" width="14.6" height="211.7" fill="rgb(202,202,202)"/>
<rect x="591.1" y="312.9" width="11.6" height="67.1" fill="rgb(196,196,196)"/>
<rect x="141.6" y="158.9" width="20.8" height="221.1" fill="rgb(220,220,220)"/>
<rect x="686.1" y="162.4" width="11.8" height="217.6" fill="rgb(236,236,236)"/>
<rect x="130.9" y="207.3" width="16.5" height="172.7" fill="rgb(215,215,215)"/>
<rect x="226.1" y="278.9" width="21.4" height="101.1" fill="rgb(203,203,203)"/>
<rect x="85.6" y="151.9" width="17.0" height="228.1" fill="rgb(225,225,225)"/>
<rect x="555.9" y="245.1" width="8.0" height="134.9" fill="rgb(224,224,224)"/>
<rect x="351.3" y="280.8" width="21.7" height="99.2" fill="rgb(222,222,222)"/>
<rect x="447.0" y="221.5" width="7.0" height="158.5" fill="rgb(209,209,209)"/>
<rect x="-9.7" y="315.7" width="19.7" height="64.3" fill="rgb(233,233,233)"/>
<rect x="205.9" y="185.8" width="20.0" height="194.2" fill="rgb(221,221,221)"/>
<rect x="697.0" y="248.1" width="15.2" height="131.9" fill="rgb(198,198,198)"/>
<rect x="692.4" y="193.9" width="8.6" height="186.1" fill="rgb(235,235,235)"/>
<rect x="223.6" y="162.5" width="10.0" height="217.5" fill="rgb(201,201,201)"/>
<rect x="138.2" y="152.6" width="15.8" height="227.4" fill="rgb(219,219,219)"/>
<rect x="253.9" y="313.1" width="12.7" height="66.9" fill="rgb(226,226,226)"/>
<rect x="581.0" y="215.6" width="7.3" height="164.4" fill="rgb(236,236,236)"/>
<rect x="99.4" y="289.0" width="20.4" height="91.0" fill="rgb(211,211,211)"/>
<rect x="505.0" y="256.9" width="7.7" height="123.1" fill="rgb(231,231,231)"/>
<rect x="129.6" y="300.0" width="21.2" height="80.0" fill="rgb(234,234,234)"/>
<rect x="45.7" y="168.5" width="5.8" height="211.5" fill="rgb(228,228,228)"/>
<rect x="673.5" y="269.8" width="9.1" height="110.2" fill="rgb(212,212,212)"/>
<rect x="288.8" y="233.5" width="20.4" height="146.5" fill="rgb(229,229,229)"/>
<rect x="114.6" y="161.7" width="17.2" height="218.3" fill="rgb(210,210,210)"/>
<rect x="330.3" y="254.7" width="16.1" height="125.3" fill="rgb(200,200,200)"/>
<rect x="189.0" y="184.7" width="20.6" height="195.3" fill="rgb(197,197,197)"/>
<rect x="39.1" y="192.3" width="12.0" height="187.7" fill="rgb(198,198,198)"/>
<rect x="115.1" y="247.3" width="11.3" height="132.7" fill="rgb(204,204,204)"/>
<rect x="55.5" y="226.6" width="7.4" height="153.4" fill="rgb(217,217,217)"/>
<rect x="456.4" y="249.4" width="16.8" height="130.6" fill="rgb(204,204,204)"/>
<rect x="408.8" y="230.7" width="20.7" height="149.3" fill="rgb(218,218,218)"/>
<rect x="487.7" y="153.6" width="21.4" height="226.4" fill="rgb(236,236,236)"/>
<rect x="43.1" y="202.9" width="6.1" height="177.1" fill="rgb(204,204,204)"/>
<rect x="699.5" y="242.8" width="6.3" height="137.2" fill="rgb(198,198,198)"/>
<rect x="629.1" y="269.6" width="17.5" height="110.4" fill="rgb(217,217,217)"/>
<rect x="239.8" y="303.1" width="16.6" height="76.9" fill="rgb(222,222,222)"/>
<rect x="660.4" y="235.0" width="5.5" height="145.0" fill="rgb(196,196,196)"/>
<rect x="433.7" y="249.1" width="11.5" height="130.9" fill="rgb(234,234,234)"/>
<rect x="41.3" y="169.6" width="6.5" height="210.4" fill="rgb(212,212,212)"/>
<rect x="614.7" y="216.0" width="17.4" height="164.0" fill="rgb(233,233,233)"/>
<rect x="315.0" y="242.0" width="12.9" height="138.0" fill="rgb(229,229,229)"/>
<rect x="522.6" y="252.2" width="5.5" height="127.8" fill="rgb(226,226,226)"/>
<rect x="5.8" y="169.2" width="21.3" height="210.8" fill="rgb(235,235,235)"/>
<rect x="458.7" y="302.4" width="13.3" height="77.6" fill="rgb(219,219,219)"/>
<rect x="203.7" y="184.4" width="16.5" height="195.6" fill="rgb(206,206,206)"/>
<rect x="525.2" y="308.2" width="10.8" height="71.8" fill="rgb(227,227,227)"/>
<rect x="623.1" y="263.2" width="10.6" height="116.8" fill="rgb(208,208,208)"/>
<rect x="440.3" y="278.3" width="18.7" height="101.7" fill="rgb(208,208,208)"/>
<rect x="615.0" y="249.1" width="11.5" height="130.9" fill="rgb(216,216,216)"/>
<rect x="139.0" y="209.6" width="7.3" height="170.4" fill="rgb(198,198,198)"/>
<rect x="495.0" y="197.1" width="21.2" height="182.9" fill="rgb(206,206,206)"/>
<rect x="70.1" y="307.4" width="13.0" height="72.6" fill="rgb(222,222,222)"/>
<rect x="261.6" y="264.3" width="13.8" height="115.7" fill="rgb(235,235,235)"/>
<rect x="311.3" y="155.4" width="6.3" height="224.6" fill="rgb(234,234,234)"/>
<rect x="19.5" y="247.0" width="17.0" height="133.0" fill="rgb(215,215,215)"/>
<rect x="451.0" y="259.0" width="14.6" height="121.0" fill="rgb(221,221,221)"/>
<rect x="312.9" y="291.0" width="5.4" height="89.0" fill="rgb(211,211,211)"/>
<rect x="543.3" y="317.3" width="18.5" height="62.7" fill="rgb(203,203,203)"/>
<rect x="307.0" y="261.4" width="15.7" height="118.6" fill="rgb(219,219,219)"/>
<rect x="670.5" y="183.9" width="16.6" height="196.1" fill="rgb(226,226,226)"/>
<rect x="171.8" y="278.4" width="17.1" height="101.6" fill="rgb(230,230,230)"/>
<rect x="497.1" y="196.3" width="8.0" height="183.7" fill="rgb(218,218,218)"/>
<rect x="373.2" y="235.1" width="21.1" height="144.9" fill="rgb(206,206,206)"/>
<rect x="269.4" y="304.1" width="18.5" height="75.9" fill="rgb(201,201,201)"/>
<rect x="281.4" y="216.0" width="20.2" height="164.0" fill="rgb(224,224,224)"/>
<rect x="312.0" y="304.7" width="15.6" height="75.3" fill="rgb(220,220,220)"/>
<rect x="380.5" y="235.5" width="16.1" height="144.5" fill="rgb(217,217,217)"/>
<rect x="319.2" y="184.8" width="16.1" height="195.2" fill="rgb(203,203,203)"/>
<rect x="141.4" y="316.7" width="20.3" height="63.3" fill="rgb(215,215,215)"/>
<rect x="371.2" y="204.5" width="18.4" height="175.5" fill="rgb(197,197,197)"/>
<rect x="237.4" y="225.0" width="6.4" height="155.0" fill="rgb(231,231,231)"/>
<rect x="289.2" y="306.4" width="9.7" height="73.6" fill="rgb(209,209,209)"/>
<rect x="564.5" y="286.0" width="6.1" height="94.0" fill="rgb(207,207,207)"/>
<rect x="368.5" y="305.7" width="16.7" height="74.3" fill="rgb(226,226,226)"/>
<rect x="95.6" y="273.0" width="13.8" height="107.0" fill="rgb(224,224,224)"/>
<rect x="661.5" y="311.4" width="13.4" height="68.6" fill="rgb(201,201,201)"/>
<rect x="528.1" y="245.0" width="12.5" height="135.0" fill="rgb(231,231,231)"/>
<rect x="443.6" y="293.4" width="13.9" height="86.6" fill="rgb(231,231,231)"/>
<rect x="172.1" y="312.3" width="16.4" height="67.7" fill="rgb(235,235,235)"/>
<rect x="137.9" y="314.6" width="19.5" height="65.4" fill="rgb(229,229,229)"/>
<rect x="183.8" y="219.9" width="13.5" height="160.1" fill="rgb(203,203,203)"/>
<rect x="347.3" y="154.7" width="15.3" height="225.3" fill="rgb(198,198,198)"/>
<rect x="356.4" y="286.2" width="11.8" height="93.8" fill="rgb(232,232,232)"/>
<rect x="76.6" y="178.4" width="6.6" height="201.6" fill="rgb(230,230,230)"/>
<rect x="315.8" y="286.1" width="20.7" height="93.9" fill="rgb(221,221,221)"/>
<rect x="181.1" y="171.6" width="13.0" height="208.4" fill="rgb(223,223,223)"/>
<rect x="629.6" y="306.4" width="20.9" height="73.6" fill="rgb(229,229,229)"/>
<rect x="215.2" y="255.0" width="8.3" height="125.0" fill="rgb(212,212,212)"/>
<rect x="81.9" y="153.9" width="18.2" height="226.1" fill="rgb(208,208,208)"/>
<rect x="100.4" y="198.3" width="5.2" height="181.7" fill="rgb(218,218,218)"/>
<rect x="163.6" y="234.9" width="13.5" height="145.1" fill="rgb(233,233,233)"/>
<rect x="77.2" y="192.6" width="13.7" height="187.4" fill="rgb(208,208,208)"/>
<rect x="488.0" y="154.0" width="19.9" height="226.0" fill="rgb(236,236,236)"/>
<rect x="283.5" y="177.2" width="14.0" height="202.8" fill="rgb(209,209,209)"/>
<rect x="603.3" y="187.1" width="14.1" height="192.9" fill="rgb(209,209,209)"/>
<rect x="594.4" y="295.6" width="15.4" height="84.4" fill="rgb(210,210,210)"/>
<rect x="639.5" y="209.1" width="15.7" height="170.9" fill="rgb(207,207,207)"/>
<rect x="214.3" y="306.9" width="10.4" height="73.1" fill="rgb(209,209,209)"/>
<rect x="542.6" y="166.5" width="8.3" height="213.5" fill="rgb(211,211,211)"/>
<rect x="84.1" y="215.9" width="6.5" height="164.1" fill="rgb(223,223,223)"/>
<rect x="580.8" y="284.3" width="12.2" height="95.7" fill="rgb(204,204,204)"/>
<rect x="132.5" y="285.8" width="15.7" height="94.2" fill="rgb(202,202,202)"/>
<rect x="132.7" y="304.9" width="16.6" height="75.1" fill="rgb(219,219,219)"/>
<rect x="71.9" y="278.9" width="13.6" height="101.1" fill="rgb(228,228,228)"/>
<rect x="699.0" y="286.5" width="19.2" height="93.5" fill="rgb(226,226,226)"/>
<rect x="65.4" y="243.8" width="5.6" height="136.2" fill="rgb(228,228,228)"/>
<rect x="632.6" y="182.2" width="13.2" height="197.8" fill="rgb(203,203,203)"/>
<rect x="134.8" y="318.4" width="19.3" height="61.6" fill="rgb(202,202,202)"/>
<rect x="401.6" y="265.8" width="7.3" height="114.2" fill="rgb(200,200,200)"/>
<rect x="533.0" y="229.4" width="10.6" height="150.6" fill="rgb(228,228,228)"/>
<rect x="241.7" y="213.4" width="8.6" height="166.6" fill="rgb(236,236,236)"/>
<rect x="487.7" y="180.8" width="19.4" height="199.2" fill="rgb(225,225,225)"/>
<rect x="245.3" y="306.7" width="11.3" height="73.3" fill="rgb(234,234,234)"/>
<rect x="107.2" y="152.6" width="13.7" height="227.4" fill="rgb(201,201,201)"/>
<rect x="559.2" y="296.3" width="17.0" height="83.7" fill="rgb(236,236,236)"/>
<rect x="657.1" y="182.5" width="14.7" height="197.5" fill="rgb(233,233,233)"/>
<rect x="687.7" y="193.9" width="18.7" height="186.1" fill="rgb(203,203,203)"/>
<rect x="518.5" y="288.5" width="18.2" height="91.5" fill="rgb(221,221,221)"/>
<rect x="84.6" y="241.6" width="10.6" height="138.4" fill="rgb(219,219,219)"/>
<rect x="534.8" y="219.0" width="18.0" height="161.0" fill="rgb(207,207,207)"/>
<rect x="40.1" y="229.7" width="10.8" height="150.3" fill="rgb(196,196,196)"/>
<rect x="620.5" y="303.5" width="21.8" height="76.5" fill="rgb(199,199,199)"/>
<rect x="154.8" y="263.2" width="21.1" height="116.8" fill="rgb(217,217,217)"/>
<rect x="143.4" y="180.9" width="11.9" height="199.1" fill="rgb(200,200,200)"/>
<rect x="266.6" y="259.2" width="22.0" height="120.8" fill="rgb(203,203,203)"/>
<rect x="530.8" y="153.9" width="21.7" height="226.1" fill="rgb(235,235,235)"/>
<rect x="66.7" y="225.4" width="9.0" height="154.6" fill="rgb(228,228,228)"/>
<rect x="25.8" y="213.9" width="8.3" height="166.1" fill="rgb(202,202,202)"/>
<rect x="173.6" y="207.9" width="9.7" height="172.1" fill="rgb(230,230,230)"/>
<rect x="350.6" y="246.6" width="21.4" height="133.4" fill="rgb(202,202,202)"/>
<rect x="443.0" y="163.0" width="18.8" height="217.0" fill="rgb(234,234,234)"/>
<rect x="464.6" y="215.7" width="21.2" height="164.3" fill="rgb(206,206,206)"/>
<rect x="264.0" y="295.5" width="21.5" height="84.5" fill="rgb(230,230,230)"/>
<rect x="423.9" y="310.7" width="6.0" height="69.3" fill="rgb(222,222,222)"/>
<rect x="191.9" y="203.1" width="11.8" height="176.9" fill="rgb(229,229,229)"/>
<rect x="192.9" y="245.3" width="16.1" height="134.7" fill="rgb(214,214,214)"/>
<rect x="461.2" y="154.6" width="17.7" height="225.4" fill="rgb(211,211,211)"/>
<rect x="405.9" y="219.5" width="15.8" height="160.5" fill="rgb(220,220,220)"/>
<rect x="27.5" y="217.6" width="10.4" height="162.4" fill="rgb(233,233,233)"/>
<rect x="692.0" y="162.5" width="21.1" height="217.5" fill="rgb(210,210,210)"/>
<rect x="295.0" y="315.4" width="13.1" height="64.6" fill="rgb(211,211,211)"/>
<rect x="22.3" y="287.7" width="6.7" height="92.3" fill="rgb(225,225,225)"/>
<rect x="92.5" y="191.7" width="21.3" height="188.3" fill="rgb(203,203,203)"/>
<rect x="25.8" y="170.1" width="12.1" height="209.9" fill="rgb(199,199,199)"/>
<rect x="243.3" y="211.8" width="7.6" height="168.2" fill="rgb(204,204,204)"/>
<rect x="464.2" y="194.6" width="12.7" height="185.4" fill="rgb(233,233,233)"/>
<rect x="474.2" y="276.5" width="11.2" height="103.5" fill="rgb(204,204,204)"/>
<rect x="666.4" y="190.5" width="17.5" height="189.5" fill="rgb(203,203,203)"/>
<rect x="347.1" y="236.2" width="10.2" height="143.8" fill="rgb(218,218,218)"/>
<rect x="185.1" y="273.3" width="15.4" height="106.7" fill="rgb(233,233,233)"/>
<rect x="124.9" y="190.7" width="9.7" height="189.3" fill="rgb(211,211,211)"/>
<rect x="346.5" y="183.3" width="16.1" height="196.7" fill="rgb(198,198,198)"/>
<rect x="436.2" y="194.1" width="5.2" height="185.9" fill="rgb(197,197,197)"/>
<rect x="432.6" y="242.1" width="6.7" height="137.9" fill="rgb(200,200,200)"/>
<rect x="526.6" y="177.3" width="20.5" height="202.7" fill="rgb(211,211,211)"/>
<rect x="438.1" y="231.4" width="11.3" height="148.6" fill="rgb(209,209,209)"/>
<rect x="230.2" y="172.7" width="13.4" height="207.3" fill="rgb(200,200,200)"/>
<rect x="559.6" y="289.7" width="12.6" height="90.3" fill="rgb(209,209,209)"/>
<rect x="305.5" y="216.3" width="17.7" height="163.7" fill="rgb(205,205,205)"/>
<rect x="252.0" y="318.2" width="16.1" height="61.8" fill="rgb(216,216,216)"/>
<rect x="196.5" y="290.4" width="17.9" height="89.6" fill="rgb(207,207,207)"/>
<rect x="293.6" y="166.5" width="11.3" height="213.5" fill="rgb(216,216,216)"/>
<rect x="45.7" y="245.9" width="6.4" height="134.1" fill="rgb(227,227,227)"/>
<rect x="568.9" y="290.0" width="12.9" height="90.0" fill="rgb(196,196,196)"/>
<rect x="44.0" y="262.6" width="8.6" height="117.4" fill="rgb(201,201,201)"/>
<rect x="483.5" y="279.9" width="13.4" height="100.1" fill="rgb(216,216,216)"/>
<rect x="190.9" y="210.8" width="7.4" height="169.2" fill="rgb(216,216,216)"/>
<rect x="250.1" y="270.6" width="7.0" height="109.4" fill="rgb(232,232,232)"/>
<rect x="412.3" y="266.8" width="20.3" height="113.2" fill="rgb(213,213,213)"/>
<rect x="301.0" y="201.8" width="18.7" height="178.2" fill="rgb(216,216,216)"/>
<rect x="147.1" y="274.1" width="21.5" height="105.9" fill="rgb(229,229,229)"/>
<rect x="166.3" y="212.1" width="11.1" height="167.9" fill="rgb(219,219,219)"/>
<rect x="470.7" y="285.3" width="14.9" height="94.7" fill="rgb(232,232,232)"/>
<rect x="251.5" y="176.3" width="11.6" height="203.7" fill="rgb(233,233,233)"/>
<rect x="389.6" y="279.0" width="8.0" height="101.0" fill="rgb(214,214,214)"/>
<rect x="566.4" y="159.8" width="8.8" height="220.2" fill="rgb(206,206,206)"/>
<rect x="392.9" y="260.7" width="21.4" height="119.3" fill="rgb(223,223,223)"/>
<rect x="35.5" y="284.0" width="14.3" height="96.0" fill="rgb(201,201,201)"/>
<rect x="227.5" y="167.9" width="9.7" height="212.1" fill="rgb(216,216,216)"/>
<rect x="50.1" y="174.5" width="15.8" height="205.5" fill="rgb(223,223,223)"/>
<rect x="164.3" y="280.1" width="8.7" height="99.9" fill="rgb(229,229,229)"/>
<rect x="230.1" y="209.6" width="12.8" height="170.4" fill="rgb(217,217,217)"/>
<rect x="467.4" y="241.3" width="13.4" height="138.7" fill="rgb(200,200,200)"/>
<rect x="492.8" y="219.8" width="20.6" height="160.2" fill="rgb(218,218,218)"/>
<rect x="596.0" y="291.8" width="18.7" height="88.2" fill="rgb(225,225,225)"/>
<rect x="670.0" y="239.1" width="15.9" height="140.9" fill="rgb(196,196,196)"/>
<rect x="559.6" y="221.5" width="12.2" height="158.5" fill="rgb(205,205,205)"/>
<rect x="164.5" y="258.0" width="7.8" height="122.0" fill="rgb(206,206,206)"/>
<rect x="217.8" y="239.9" width="11.6" height="140.1" fill="rgb(213,213,213)"/>
<rect x="678.5" y="202.4" width="6.0" height="177.6" fill="rgb(203,203,203)"/>
<rect x="205.5" y="306.4" width="7.6" height="73.6" fill="rgb(199,199,199)"/>
<rect x="524.7" y="231.8" width="5.3" height="148.2" fill="rgb(198,198,198)"/>
<rect x="211.9" y="211.1" width="8.4" height="168.9" fill="rgb(233,233,233)"/>
<rect x="157.1" y="251.1" width="17.2" height="128.9" fill="rgb(210,210,210)"/>
<rect x="303.8" y="218.4" width="20.2" height="161.6" fill="rgb(215,215,215)"/>
<rect x="435.0" y="243.6" width="21.0" height="136.4" fill="rgb(212,212,212)"/>
<rect x="334.2" y="312.5" width="11.8" height="67.5" fill="rgb(231,231,231)"/>
<rect x="537.9" y="296.6" width="6.6" height="83.4" fill="rgb(221,221,221)"/>
<rect x="25.3" y="286.2" width="21.1" height="93.8" fill="rgb(220,220,220)"/>
<rect x="683.0" y="281.6" width="18.5" height="98.4" fill="rgb(199,199,199)"/>
<rect x="456.9" y="151.8" width="9.0" height="228.2" fill="rgb(226,226,226)"/>
<rect x="632.7" y="191.9" width="12.7" height="188.1" fill="rgb(222,222,222)"/>
<rect x="420.3" y="176.7" width="7.7" height="203.3" fill="rgb(216,216,216)"/>
<rect x="92.8" y="287.7" width="20.4" height="92.3" fill="rgb(204,204,204)"/>
<rect x="442.2" y="195.3" width="21.9" height="184.7" fill="rgb(230,230,230)"/>
<rect x="27.6" y="180.3" width="14.7" height="199.7" fill="rgb(209,209,209)"/>
<rect x="573.2" y="289.8" width="19.4" height="90.2" fill="rgb(201,201,201)"/>
<rect x="239.7" y="239.8" width="15.5" height="140.2" fill="rgb(226,226,226)"/>
<rect x="482.5" y="277.3" width="6.4" height="102.7" fill="rgb(230,230,230)"/>
<rect x="598.7" y="284.2" width="10.2" height="95.8" fill="rgb(222,222,222)"/>
<rect x="127.1" y="282.8" width="16.6" height="97.2" fill="rgb(224,224,224)"/>
<rect x="138.0" y="239.4" width="14.2" height="140.6" fill="rgb(206,206,206)"/>
<rect x="662.1" y="203.7" width="21.4" height="176.3" fill="rgb(221,221,221)"/>
<rect x="44.0" y="229.4" width="10.2" height="150.6" fill="rgb(200,200,200)"/>
<rect x="245.4" y="168.0" width="16.7" height="212.0" fill="rgb(221,221,221)"/>
<rect x="469.9" y="283.4" width="17.7" height="96.6" fill="rgb(203,203,203)"/>
<rect x="454.3" y="214.1" width="5.2" height="165.9" fill="rgb(226,226,226)"/>
<rect x="158.6" y="227.9" width="14.6" height="152.1" fill="rgb(196,196,196)"/>
<rect x="597.8" y="272.3" width="19.4" height="107.7" fill="rgb(235,235,235)"/>
<rect x="98.0" y="309.4" width="15.7" height="70.6" fill="rgb(215,215,215)"/>
<rect x="667.4" y="244.4" width="17.8" height="135.6" fill="rgb(201,201,201)"/>
<rect x="172.1" y="274.3" width="8.4" height="105.7" fill="rgb(217,217,217)"/>
<rect x="209.9" y="229.9" width="9.7" height="150.1" fill="rgb(236,236,236)"/>
<rect x="225.5" y="165.7" width="19.1" height="214.3" fill="rgb(205,205,205)"/>
<rect x="431.4" y="257.2" width="7.2" height="122.8" fill="rgb(207,207,207)"/>
<rect x="117.7" y="292.3" width="11.8" height="87.7" fill="rgb(233,233,233)"/>
<rect x="489.8" y="155.5" width="6.7" height="224.5" fill="rgb(203,203,203)"/>
<rect x="298.0" y="208.1" width="18.1" height="171.9" fill="rgb(223,223,223)"/>
<rect x="648.1" y="184.9" width="7.4" height="195.1" fill="rgb(205,205,205)"/>
<rect x="573.0" y="206.3" width="11.6" height="173.7" fill="rgb(222,222,222)"/>
<rect x="432.3" y="254.2" width="17.4" height="125.8" fill="rgb(216,216,216)"/>
<rect x="687.2" y="262.2" width="18.4" height="117.8" fill="rgb(234,234,234)"/>
<rect x="366.2" y="182.1" width="9.4" height="197.9" fill="rgb(215,215,215)"/>
<rect x="452.0" y="214.2" width="6.8" height="165.8" fill="rgb(228,228,228)"/>
<rect x="226.3" y="167.5" width="10.0" height="212.5" fill="rgb(206,206,206)"/>
<rect x="170.3" y="200.7" width="14.2" height="179.3" fill="rgb(210,210,210)"/>
<rect x="240.3" y="174.1" width="13.5" height="205.9" fill="rgb(208,208,208)"/>
<rect x="690.6" y="271.6" width="13.8" height="108.4" fill="rgb(208,208,208)"/>
<rect x="392.8" y="262.1" width="5.5" height="117.9" fill="rgb(201,201,201)"/>
<rect x="86.8" y="221.0" width="13.1" height="159.0" fill="rgb(217,217,217)"/>
<rect x="223.7" y="211.4" width="20.8" height="168.6" fill="rgb(225,225,225)"/>
<rect x="616.9" y="274.1" width="12.7" height="105.9" fill="rgb(211,211,211)"/>
<rect x="631.9" y="245.3" width="14.2" height="134.7" fill="rgb(231,231,231)"/>
<rect x="639.7" y="276.8" width="7.9" height="103.2" fill="rgb(217,217,217)"/>
<rect x="417.1" y="290.2" width="7.1" height="89.8" fill="rgb(214,214,214)"/>
<rect x="476.4" y="278.9" width="11.2" height="101.1" fill="rgb(219,219,219)"/>
<rect x="579.8" y="243.1" width="8.2" height="136.9" fill="rgb(200,200,200)"/>
<rect x="312.6" y="283.1" width="11.9" height="96.9" fill="rgb(204,204,204)"/>
<rect x="0" y="160" width="700" height="220" fill="url(#win)" opacity=".45"/>
<rect x="0" y="150" width="700" height="230" filter="url(#noise)" opacity=".25"/>
<rect x="0" y="130" width="700" height="250" fill="url(#haze)"/>
<g transform="translate(-220,-194)">
<rect x="220" y="340" width="42.0" height="232.0" fill="#c8c8c8"/><rect x="220" y="340" width="42.0" height="232.0" fill="url(#win2)" opacity="0.6"/>
<rect x="262" y="352" width="36.0" height="220.0" fill="#dcdcdc"/><rect x="262" y="352" width="36.0" height="220.0" fill="url(#win)" opacity="0.6"/>
<rect x="298" y="341" width="24.0" height="79.0" fill="#c9c9c9"/><rect x="298" y="341" width="24.0" height="79.0" fill="url(#win2)" opacity="0.5"/>
<rect x="323" y="346" width="12.0" height="84.0" fill="#d2d2d2"/><rect x="323" y="346" width="12.0" height="84.0" fill="url(#vst)" opacity="0.8"/>
<rect x="350" y="350" width="21.0" height="58.0" fill="#e2e2e2"/><rect x="350" y="350" width="21.0" height="58.0" fill="url(#win)" opacity="0.6"/>
<rect x="275" y="366" width="45.7" height="175.0" fill="#ededed"/><rect x="275" y="366" width="45.7" height="175.0" fill="url(#win)" opacity="0.4"/>
<rect x="284" y="372" width="2.5" height="169" fill="#c4c4c4"/><rect x="293" y="372" width="2.5" height="169" fill="#c8c8c8"/><rect x="302" y="372" width="2.5" height="169" fill="#c4c4c4"/><rect x="311" y="380" width="2" height="161" fill="#cccccc"/>
<rect x="320.7" y="421" width="32.1" height="120.0" fill="#d8d8d8"/><rect x="320.7" y="421" width="32.1" height="120.0" fill="url(#win2)" opacity="0.6"/>
<rect x="352.8" y="420" width="32.0" height="70.0" fill="#b8b8b8"/><rect x="352.8" y="420" width="32.0" height="70.0" fill="url(#win2)" opacity="0.6"/>
<rect x="357" y="486" width="60.0" height="86.0" fill="#e0e0e0"/><rect x="357" y="486" width="60.0" height="86.0" fill="url(#win)" opacity="0.6"/>
<rect x="380" y="440" width="85.0" height="75.0" fill="#c6c6c6"/><rect x="380" y="440" width="85.0" height="75.0" fill="url(#win2)" opacity="0.6"/>
<rect x="259" y="540.7" width="89.0" height="31.3" fill="#e6e6e6"/><rect x="259" y="540.7" width="89.0" height="31.3" fill="url(#win)" opacity="0.5"/>
<rect x="220" y="470" width="39.0" height="102.0" fill="#c4c4c4"/><rect x="220" y="470" width="39.0" height="102.0" fill="url(#win2)" opacity="0.6"/>
<path d="M407.5 194 L408.2 211 L410.5 211 L411 258 L419 258 L419 277 L426 277 L426 435 L426 435 L426 440 L389.4 440 L389.4 435 L389.4 277 L397.5 277 L397.5 258 L404 258 L404 211 L406.8 211 Z" fill="#e2e2e2"/>
<rect x="389.4" y="277" width="36.6" height="158.0" fill="#dcdcdc"/><rect x="389.4" y="277" width="36.6" height="158.0" fill="url(#vst)" opacity="1"/>
<path d="M397.5 258 V277 M419 258 V277 M404 211 V258 M411 211 V258" stroke="#c8c8c8" stroke-width="1"/>
<rect x="389.4" y="277" width="2" height="158" fill="#c2c2c2"/><rect x="424" y="277" width="2" height="158" fill="#cfcfcf"/><rect x="405" y="277" width="1.5" height="158" fill="#c8c8c8"/>
<rect x="463" y="388" width="95.0" height="184.0" fill="#efefef"/>
<rect x="463" y="393" width="95.0" height="179.0" fill="#efefef"/><rect x="463" y="393" width="95.0" height="179.0" fill="url(#hrow)" opacity="1"/>
<rect x="558" y="345" width="82.0" height="227.0" fill="#dcdcdc"/><rect x="558" y="345" width="82.0" height="227.0" fill="url(#win2)" opacity="0.35"/>
<rect x="640" y="350" width="66.0" height="120.0" fill="#d4d4d4"/><rect x="640" y="350" width="66.0" height="120.0" fill="url(#win2)" opacity="0.45"/>
<path d="M702 245.5 L707.4 248.4 L776 285.6 L776 291 L802.8 291 L802.8 433 L700 433 L704.5 252 Z" fill="#dedede"/>
<path d="M704.5 252 L776 289 L802.8 291 L802.8 433 L700 433Z" fill="url(#win)" opacity=".45"/>
<path d="M706.6 300 L738.7 290 L720 433 L695 433Z" fill="#efefef"/>
<path d="M735.5 194 V264 M737.5 194 V264" stroke="#c4c4c4" stroke-width="1"/>
<rect x="802.8" y="326" width="44.6" height="77.0" fill="#c4c4c4"/><rect x="802.8" y="326" width="44.6" height="77.0" fill="url(#win2)" opacity="0.5"/>
<rect x="802.8" y="326" width="44.6" height="2.5" fill="#a6a6a6"/>
<rect x="816.5" y="373" width="36.5" height="30.0" fill="#dcdcdc"/><rect x="816.5" y="373" width="36.5" height="30.0" fill="url(#win)" opacity="0.6"/>
<rect x="732" y="433" width="103.0" height="53.0" fill="#e8e8e8"/><rect x="732" y="433" width="103.0" height="53.0" fill="url(#vst)" opacity="1"/>
<path d="M693 467.5 L800 467.5 L816.5 508.7 L693 508.7Z" fill="#efefef"/>
<rect x="702" y="476.6" width="55.0" height="22.9" fill="#e6e6e6"/>
<rect x="809.6" y="470" width="59.4" height="27.0" fill="#bcbcbc"/><rect x="809.6" y="470" width="59.4" height="27.0" fill="url(#win2)" opacity="0.5"/>
<rect x="825.7" y="497" width="43.3" height="75.0" fill="#a9a9a9"/><rect x="825.7" y="497" width="43.3" height="75.0" fill="url(#win2)" opacity="0.4"/>
<rect x="757" y="508.7" width="68.7" height="63.3" fill="#c8c8c8"/><rect x="757" y="508.7" width="68.7" height="63.3" fill="url(#win2)" opacity="0.6"/>
<rect x="869" y="403" width="51.0" height="169.0" fill="#dadada"/><rect x="869" y="403" width="51.0" height="169.0" fill="url(#win2)" opacity="0.6"/>
<rect x="640" y="470" width="53.0" height="102.0" fill="#d0d0d0"/><rect x="640" y="470" width="53.0" height="102.0" fill="url(#win2)" opacity="0.6"/>
</g>
<rect x="0" y="378" width="700" height="22" fill="#2b2825"/>
<rect x="0" y="378" width="700" height="22" fill="url(#win2)" opacity=".5"/>
<g stroke-linejoin="round">
<path d="M-80 119.5 L64 199.5 L-80 279.5Z" transform="translate(0,0)" fill="none"/>
<polygon points="-20,116.5 63,199.5 -20,282.5" fill="#0f67b9" stroke="#0f67b9" stroke-width="14"/>
<polygon points="-20,135 43.5,199.5 -20,264" fill="#2a5d93" stroke="#2a5d93" stroke-width="12"/>
<polygon points="-20,155 22.7,199.5 -20,244" fill="#28476b" stroke="#28476b" stroke-width="12"/>
<polygon points="720,118.9 635.3,199.9 720,280.9" fill="#0f67b9" stroke="#0f67b9" stroke-width="14"/>
<polygon points="720,136.9 654.4,199.9 720,262.9" fill="#2a5d93" stroke="#2a5d93" stroke-width="12"/>
<polygon points="720,158 675.6,199.9 720,241.8" fill="#28476b" stroke="#28476b" stroke-width="12"/>
</g>
<path d="M115.7 400 L156 338 Q163 322 180 322 L525 322 Q543 322 552 338 L589.5 400 Z" fill="#2c68ae"/>
<path d="M115.7 400 L156 338 Q163 322 180 322 L525 322 Q543 322 552 338 L589.5 400 Z" fill="url(#bwin)"/>
<circle cx="351.5" cy="73" r="48.3" fill="none" stroke="#6f98e0" stroke-width="2.6" stroke-linecap="round" stroke-dasharray="0 5.06"/>
<rect x="221.7" y="129.4" width="262" height="147.2" rx="64" ry="73.6" fill="none" stroke="#79b4ec" stroke-width="2.6" stroke-linecap="round" stroke-dasharray="0 5.4"/>
<path d="M331 69.5 Q332.5 87 344.5 96.5 Q353 102.5 364.5 102.8 Q352 97 348.5 87 Q346 79 349.5 72.5 L347 70.5 Q339 71.5 331 69.5Z" fill="url(#birdg)"/>
<path d="M367.6 45 Q353 51 348.5 61 Q345.5 69 346.8 76.5 L350.5 73 Q359 67.5 364 59.5 Q368 52 367.6 45Z" fill="#1f63c4"/>
<path d="M348.8 48.9 Q342.5 55 341.3 64 L345.8 69.5 Q347 60.5 351.5 57.5 Z" fill="#2a70cc"/>
<path d="M322 64 L352 79" stroke="#fff" stroke-width="0.8" opacity=".8"/><path d="M337.5 56 L337.5 88" stroke="#fff" stroke-width="0.5" opacity=".5"/>
<circle cx="337.5" cy="71.4" r="5" fill="url(#spark)"/><g transform="translate(-220,-194)">
<g fill="#2b4a74">
<path fill-rule="evenodd" d="M473.5 361.5 H487.2 V382.5 H473.5 A8.4 10.5 0 0 1 473.5 361.5 Z M474.5 367.1 H481.6 V376.9 H474.5 A3.6 4.9 0 0 1 474.5 367.1 Z"/>
<path d="M498.2 366.2 H503.7 V387.5 Q503.7 393.5 497 393.5 H493.8 L495.5 388.8 Q498.2 388.8 498.2 386 Z"/>
<path d="M499.6 354.90000000000003 L503.0 358.3 L499.6 361.7 L496.20000000000005 358.3Z" fill="#2b4a74"/>
<path d="M508.9 353.5 H514.4 V377.2 H555.9 V382.7 H512 Q508.9 382.7 508.9 379.6Z"/>
<rect x="529.5" y="362.1" width="5.10" height="17.90" fill="#2b4a74"/>
<rect x="539.4" y="362.1" width="5.50" height="17.90" fill="#2b4a74"/>
<rect x="550.4" y="362.1" width="5.50" height="17.90" fill="#2b4a74"/>
<path d="M562.3 366.2 H568.2 V377.2 H631.1 V383.1 H567.5 Q562.3 383.1 562.3 378 Z"/>
<rect x="598.2" y="362.6" width="6.60" height="17.40" fill="#2b4a74"/>
<path d="M586.5 352.7 L589.8 356 L586.5 359.3 L583.2 356Z" fill="#2b4a74"/>
<path d="M593 352.7 L596.3 356 L593 359.3 L589.7 356Z" fill="#2b4a74"/>
<path d="M619.42 353.42 L628.57 353.42 L618.69 362.57 L625.28 362.57 L631.13 366.96 L631.13 386 L626.01 389.66 L625.28 369.16 L623.45 367.69 L609.54 367.69 L609.54 362.57 Z"/>
<path d="M642 368 L647.3 366 V388 Q647.3 393.5 641 393.5 H637.6 L639.5 389 Q642 389 642 386 Z"/>
<path d="M642 377.8 H679.8 V378.6 Q679.8 382.6 675.8 382.6 H642Z"/>
<rect x="653" y="362.4" width="4.90" height="17.60" fill="#2b4a74"/>
<rect x="664.9" y="362.4" width="4.80" height="17.60" fill="#2b4a74"/>
<rect x="675" y="362.4" width="4.80" height="17.60" fill="#2b4a74"/>
<path d="M666.4 347.9 L669.6999999999999 351.2 L666.4 354.5 L663.1 351.2Z" fill="#2b4a74"/>
<path d="M662.7 352.9 L666.0 356.2 L662.7 359.5 L659.4000000000001 356.2Z" fill="#2b4a74"/>
<path d="M670.1 352.9 L673.4 356.2 L670.1 359.5 L666.8000000000001 356.2Z" fill="#2b4a74"/>
</g>
<g fill="#d9b12b">
<path d="M514.9 431.7 L519.8 425.8 H533.2 V446.6 H514.4 V440.6 H527.2 V431.7 Z"/>
<rect x="534.6" y="416.9" width="6.00" height="29.70" fill="#d9b12b"/>
<rect x="540" y="440.6" width="71.00" height="6.00" fill="#d9b12b"/>
<rect x="587" y="425.8" width="6.00" height="15.20" fill="#d9b12b"/>
<path d="M590.2 416.40000000000003 L593.4000000000001 419.6 L590.2 422.8 L587.0 419.6Z" fill="#d9b12b"/>
<rect x="603.8" y="425.8" width="5.90" height="15.20" fill="#d9b12b"/>
<path d="M600.6 448.5 L603.8000000000001 451.7 L600.6 454.9 L597.4 451.7Z" fill="#d9b12b"/>
<path d="M607 448.5 L610.2 451.7 L607 454.9 L603.8 451.7Z" fill="#d9b12b"/>
<path d="M610.7 431.7 L615.2 425.8 H630.5 V446.6 H609.7 V440.6 H624.6 V431.7 Z"/>
</g>
<rect x="535" y="483" width="74" height="72" fill="#fff"/>
<path d="M542.50 489.20h2.41v2.41h-2.41zM544.86 489.20h2.41v2.41h-2.41zM547.22 489.20h2.41v2.41h-2.41zM549.58 489.20h2.41v2.41h-2.41zM551.94 489.20h2.41v2.41h-2.41zM554.30 489.20h2.41v2.41h-2.41zM556.66 489.20h2.41v2.41h-2.41zM568.46 489.20h2.41v2.41h-2.41zM570.82 489.20h2.41v2.41h-2.41zM573.18 489.20h2.41v2.41h-2.41zM580.26 489.20h2.41v2.41h-2.41zM584.98 489.20h2.41v2.41h-2.41zM587.34 489.20h2.41v2.41h-2.41zM589.70 489.20h2.41v2.41h-2.41zM592.06 489.20h2.41v2.41h-2.41zM594.42 489.20h2.41v2.41h-2.41zM596.78 489.20h2.41v2.41h-2.41zM599.14 489.20h2.41v2.41h-2.41zM542.50 491.56h2.41v2.41h-2.41zM556.66 491.56h2.41v2.41h-2.41zM568.46 491.56h2.41v2.41h-2.41zM580.26 491.56h2.41v2.41h-2.41zM584.98 491.56h2.41v2.41h-2.41zM599.14 491.56h2.41v2.41h-2.41zM542.50 493.92h2.41v2.41h-2.41zM547.22 493.92h2.41v2.41h-2.41zM549.58 493.92h2.41v2.41h-2.41zM551.94 493.92h2.41v2.41h-2.41zM556.66 493.92h2.41v2.41h-2.41zM563.74 493.92h2.41v2.41h-2.41zM570.82 493.92h2.41v2.41h-2.41zM575.54 493.92h2.41v2.41h-2.41zM580.26 493.92h2.41v2.41h-2.41zM584.98 493.92h2.41v2.41h-2.41zM589.70 493.92h2.41v2.41h-2.41zM592.06 493.92h2.41v2.41h-2.41zM594.42 493.92h2.41v2.41h-2.41zM599.14 493.92h2.41v2.41h-2.41zM542.50 496.28h2.41v2.41h-2.41zM547.22 496.28h2.41v2.41h-2.41zM549.58 496.28h2.41v2.41h-2.41zM551.94 496.28h2.41v2.41h-2.41zM556.66 496.28h2.41v2.41h-2.41zM563.74 496.28h2.41v2.41h-2.41zM566.10 496.28h2.41v2.41h-2.41zM573.18 496.28h2.41v2.41h-2.41zM580.26 496.28h2.41v2.41h-2.41zM584.98 496.28h2.41v2.41h-2.41zM589.70 496.28h2.41v2.41h-2.41zM592.06 496.28h2.41v2.41h-2.41zM594.42 496.28h2.41v2.41h-2.41zM599.14 496.28h2.41v2.41h-2.41zM542.50 498.64h2.41v2.41h-2.41zM547.22 498.64h2.41v2.41h-2.41zM549.58 498.64h2.41v2.41h-2.41zM551.94 498.64h2.41v2.41h-2.41zM556.66 498.64h2.41v2.41h-2.41zM561.38 498.64h2.41v2.41h-2.41zM566.10 498.64h2.41v2.41h-2.41zM568.46 498.64h2.41v2.41h-2.41zM573.18 498.64h2.41v2.41h-2.41zM584.98 498.64h2.41v2.41h-2.41zM589.70 498.64h2.41v2.41h-2.41zM592.06 498.64h2.41v2.41h-2.41zM594.42 498.64h2.41v2.41h-2.41zM599.14 498.64h2.41v2.41h-2.41zM542.50 501.00h2.41v2.41h-2.41zM556.66 501.00h2.41v2.41h-2.41zM561.38 501.00h2.41v2.41h-2.41zM563.74 501.00h2.41v2.41h-2.41zM573.18 501.00h2.41v2.41h-2.41zM575.54 501.00h2.41v2.41h-2.41zM577.90 501.00h2.41v2.41h-2.41zM580.26 501.00h2.41v2.41h-2.41zM584.98 501.00h2.41v2.41h-2.41zM599.14 501.00h2.41v2.41h-2.41zM542.50 503.36h2.41v2.41h-2.41zM544.86 503.36h2.41v2.41h-2.41zM547.22 503.36h2.41v2.41h-2.41zM549.58 503.36h2.41v2.41h-2.41zM551.94 503.36h2.41v2.41h-2.41zM554.30 503.36h2.41v2.41h-2.41zM556.66 503.36h2.41v2.41h-2.41zM561.38 503.36h2.41v2.41h-2.41zM566.10 503.36h2.41v2.41h-2.41zM570.82 503.36h2.41v2.41h-2.41zM575.54 503.36h2.41v2.41h-2.41zM580.26 503.36h2.41v2.41h-2.41zM584.98 503.36h2.41v2.41h-2.41zM587.34 503.36h2.41v2.41h-2.41zM589.70 503.36h2.41v2.41h-2.41zM592.06 503.36h2.41v2.41h-2.41zM594.42 503.36h2.41v2.41h-2.41zM596.78 503.36h2.41v2.41h-2.41zM599.14 503.36h2.41v2.41h-2.41zM561.38 505.72h2.41v2.41h-2.41zM570.82 505.72h2.41v2.41h-2.41zM580.26 505.72h2.41v2.41h-2.41zM542.50 508.08h2.41v2.41h-2.41zM549.58 508.08h2.41v2.41h-2.41zM551.94 508.08h2.41v2.41h-2.41zM554.30 508.08h2.41v2.41h-2.41zM556.66 508.08h2.41v2.41h-2.41zM559.02 508.08h2.41v2.41h-2.41zM561.38 508.08h2.41v2.41h-2.41zM563.74 508.08h2.41v2.41h-2.41zM566.10 508.08h2.41v2.41h-2.41zM568.46 508.08h2.41v2.41h-2.41zM570.82 508.08h2.41v2.41h-2.41zM573.18 508.08h2.41v2.41h-2.41zM580.26 508.08h2.41v2.41h-2.41zM584.98 508.08h2.41v2.41h-2.41zM587.34 508.08h2.41v2.41h-2.41zM589.70 508.08h2.41v2.41h-2.41zM592.06 508.08h2.41v2.41h-2.41zM594.42 508.08h2.41v2.41h-2.41zM599.14 508.08h2.41v2.41h-2.41zM542.50 510.44h2.41v2.41h-2.41zM547.22 510.44h2.41v2.41h-2.41zM551.94 510.44h2.41v2.41h-2.41zM561.38 510.44h2.41v2.41h-2.41zM568.46 510.44h2.41v2.41h-2.41zM570.82 510.44h2.41v2.41h-2.41zM584.98 510.44h2.41v2.41h-2.41zM589.70 510.44h2.41v2.41h-2.41zM592.06 510.44h2.41v2.41h-2.41zM599.14 510.44h2.41v2.41h-2.41zM547.22 512.80h2.41v2.41h-2.41zM549.58 512.80h2.41v2.41h-2.41zM551.94 512.80h2.41v2.41h-2.41zM554.30 512.80h2.41v2.41h-2.41zM556.66 512.80h2.41v2.41h-2.41zM559.02 512.80h2.41v2.41h-2.41zM568.46 512.80h2.41v2.41h-2.41zM573.18 512.80h2.41v2.41h-2.41zM575.54 512.80h2.41v2.41h-2.41zM577.90 512.80h2.41v2.41h-2.41zM582.62 512.80h2.41v2.41h-2.41zM584.98 512.80h2.41v2.41h-2.41zM587.34 512.80h2.41v2.41h-2.41zM589.70 512.80h2.41v2.41h-2.41zM594.42 512.80h2.41v2.41h-2.41zM596.78 512.80h2.41v2.41h-2.41zM544.86 515.16h2.41v2.41h-2.41zM549.58 515.16h2.41v2.41h-2.41zM559.02 515.16h2.41v2.41h-2.41zM561.38 515.16h2.41v2.41h-2.41zM566.10 515.16h2.41v2.41h-2.41zM570.82 515.16h2.41v2.41h-2.41zM580.26 515.16h2.41v2.41h-2.41zM584.98 515.16h2.41v2.41h-2.41zM589.70 515.16h2.41v2.41h-2.41zM592.06 515.16h2.41v2.41h-2.41zM596.78 515.16h2.41v2.41h-2.41zM599.14 515.16h2.41v2.41h-2.41zM547.22 517.52h2.41v2.41h-2.41zM549.58 517.52h2.41v2.41h-2.41zM551.94 517.52h2.41v2.41h-2.41zM556.66 517.52h2.41v2.41h-2.41zM561.38 517.52h2.41v2.41h-2.41zM566.10 517.52h2.41v2.41h-2.41zM575.54 517.52h2.41v2.41h-2.41zM580.26 517.52h2.41v2.41h-2.41zM582.62 517.52h2.41v2.41h-2.41zM587.34 517.52h2.41v2.41h-2.41zM589.70 517.52h2.41v2.41h-2.41zM594.42 517.52h2.41v2.41h-2.41zM542.50 519.88h2.41v2.41h-2.41zM544.86 519.88h2.41v2.41h-2.41zM551.94 519.88h2.41v2.41h-2.41zM554.30 519.88h2.41v2.41h-2.41zM559.02 519.88h2.41v2.41h-2.41zM561.38 519.88h2.41v2.41h-2.41zM563.74 519.88h2.41v2.41h-2.41zM570.82 519.88h2.41v2.41h-2.41zM573.18 519.88h2.41v2.41h-2.41zM582.62 519.88h2.41v2.41h-2.41zM594.42 519.88h2.41v2.41h-2.41zM599.14 519.88h2.41v2.41h-2.41zM549.58 522.24h2.41v2.41h-2.41zM551.94 522.24h2.41v2.41h-2.41zM556.66 522.24h2.41v2.41h-2.41zM561.38 522.24h2.41v2.41h-2.41zM563.74 522.24h2.41v2.41h-2.41zM568.46 522.24h2.41v2.41h-2.41zM570.82 522.24h2.41v2.41h-2.41zM573.18 522.24h2.41v2.41h-2.41zM575.54 522.24h2.41v2.41h-2.41zM577.90 522.24h2.41v2.41h-2.41zM587.34 522.24h2.41v2.41h-2.41zM589.70 522.24h2.41v2.41h-2.41zM592.06 522.24h2.41v2.41h-2.41zM596.78 522.24h2.41v2.41h-2.41zM542.50 524.60h2.41v2.41h-2.41zM544.86 524.60h2.41v2.41h-2.41zM549.58 524.60h2.41v2.41h-2.41zM563.74 524.60h2.41v2.41h-2.41zM568.46 524.60h2.41v2.41h-2.41zM575.54 524.60h2.41v2.41h-2.41zM577.90 524.60h2.41v2.41h-2.41zM580.26 524.60h2.41v2.41h-2.41zM584.98 524.60h2.41v2.41h-2.41zM592.06 524.60h2.41v2.41h-2.41zM596.78 524.60h2.41v2.41h-2.41zM599.14 524.60h2.41v2.41h-2.41zM544.86 526.96h2.41v2.41h-2.41zM549.58 526.96h2.41v2.41h-2.41zM551.94 526.96h2.41v2.41h-2.41zM556.66 526.96h2.41v2.41h-2.41zM561.38 526.96h2.41v2.41h-2.41zM563.74 526.96h2.41v2.41h-2.41zM570.82 526.96h2.41v2.41h-2.41zM573.18 526.96h2.41v2.41h-2.41zM580.26 526.96h2.41v2.41h-2.41zM582.62 526.96h2.41v2.41h-2.41zM584.98 526.96h2.41v2.41h-2.41zM587.34 526.96h2.41v2.41h-2.41zM589.70 526.96h2.41v2.41h-2.41zM592.06 526.96h2.41v2.41h-2.41zM596.78 526.96h2.41v2.41h-2.41zM599.14 526.96h2.41v2.41h-2.41zM566.10 529.32h2.41v2.41h-2.41zM568.46 529.32h2.41v2.41h-2.41zM570.82 529.32h2.41v2.41h-2.41zM573.18 529.32h2.41v2.41h-2.41zM575.54 529.32h2.41v2.41h-2.41zM580.26 529.32h2.41v2.41h-2.41zM589.70 529.32h2.41v2.41h-2.41zM594.42 529.32h2.41v2.41h-2.41zM596.78 529.32h2.41v2.41h-2.41zM599.14 529.32h2.41v2.41h-2.41zM542.50 531.68h2.41v2.41h-2.41zM544.86 531.68h2.41v2.41h-2.41zM547.22 531.68h2.41v2.41h-2.41zM549.58 531.68h2.41v2.41h-2.41zM551.94 531.68h2.41v2.41h-2.41zM554.30 531.68h2.41v2.41h-2.41zM556.66 531.68h2.41v2.41h-2.41zM561.38 531.68h2.41v2.41h-2.41zM563.74 531.68h2.41v2.41h-2.41zM566.10 531.68h2.41v2.41h-2.41zM568.46 531.68h2.41v2.41h-2.41zM570.82 531.68h2.41v2.41h-2.41zM575.54 531.68h2.41v2.41h-2.41zM580.26 531.68h2.41v2.41h-2.41zM584.98 531.68h2.41v2.41h-2.41zM589.70 531.68h2.41v2.41h-2.41zM594.42 531.68h2.41v2.41h-2.41zM542.50 534.04h2.41v2.41h-2.41zM556.66 534.04h2.41v2.41h-2.41zM561.38 534.04h2.41v2.41h-2.41zM563.74 534.04h2.41v2.41h-2.41zM566.10 534.04h2.41v2.41h-2.41zM573.18 534.04h2.41v2.41h-2.41zM575.54 534.04h2.41v2.41h-2.41zM580.26 534.04h2.41v2.41h-2.41zM589.70 534.04h2.41v2.41h-2.41zM592.06 534.04h2.41v2.41h-2.41zM596.78 534.04h2.41v2.41h-2.41zM599.14 534.04h2.41v2.41h-2.41zM542.50 536.40h2.41v2.41h-2.41zM547.22 536.40h2.41v2.41h-2.41zM549.58 536.40h2.41v2.41h-2.41zM551.94 536.40h2.41v2.41h-2.41zM556.66 536.40h2.41v2.41h-2.41zM563.74 536.40h2.41v2.41h-2.41zM566.10 536.40h2.41v2.41h-2.41zM568.46 536.40h2.41v2.41h-2.41zM570.82 536.40h2.41v2.41h-2.41zM573.18 536.40h2.41v2.41h-2.41zM575.54 536.40h2.41v2.41h-2.41zM577.90 536.40h2.41v2.41h-2.41zM580.26 536.40h2.41v2.41h-2.41zM582.62 536.40h2.41v2.41h-2.41zM584.98 536.40h2.41v2.41h-2.41zM587.34 536.40h2.41v2.41h-2.41zM589.70 536.40h2.41v2.41h-2.41zM594.42 536.40h2.41v2.41h-2.41zM599.14 536.40h2.41v2.41h-2.41zM542.50 538.76h2.41v2.41h-2.41zM547.22 538.76h2.41v2.41h-2.41zM549.58 538.76h2.41v2.41h-2.41zM551.94 538.76h2.41v2.41h-2.41zM556.66 538.76h2.41v2.41h-2.41zM563.74 538.76h2.41v2.41h-2.41zM568.46 538.76h2.41v2.41h-2.41zM577.90 538.76h2.41v2.41h-2.41zM580.26 538.76h2.41v2.41h-2.41zM584.98 538.76h2.41v2.41h-2.41zM587.34 538.76h2.41v2.41h-2.41zM589.70 538.76h2.41v2.41h-2.41zM592.06 538.76h2.41v2.41h-2.41zM599.14 538.76h2.41v2.41h-2.41zM542.50 541.12h2.41v2.41h-2.41zM547.22 541.12h2.41v2.41h-2.41zM549.58 541.12h2.41v2.41h-2.41zM551.94 541.12h2.41v2.41h-2.41zM556.66 541.12h2.41v2.41h-2.41zM563.74 541.12h2.41v2.41h-2.41zM566.10 541.12h2.41v2.41h-2.41zM568.46 541.12h2.41v2.41h-2.41zM570.82 541.12h2.41v2.41h-2.41zM573.18 541.12h2.41v2.41h-2.41zM575.54 541.12h2.41v2.41h-2.41zM577.90 541.12h2.41v2.41h-2.41zM594.42 541.12h2.41v2.41h-2.41zM542.50 543.48h2.41v2.41h-2.41zM556.66 543.48h2.41v2.41h-2.41zM561.38 543.48h2.41v2.41h-2.41zM563.74 543.48h2.41v2.41h-2.41zM568.46 543.48h2.41v2.41h-2.41zM570.82 543.48h2.41v2.41h-2.41zM577.90 543.48h2.41v2.41h-2.41zM580.26 543.48h2.41v2.41h-2.41zM582.62 543.48h2.41v2.41h-2.41zM584.98 543.48h2.41v2.41h-2.41zM594.42 543.48h2.41v2.41h-2.41zM596.78 543.48h2.41v2.41h-2.41zM599.14 543.48h2.41v2.41h-2.41zM542.50 545.84h2.41v2.41h-2.41zM544.86 545.84h2.41v2.41h-2.41zM547.22 545.84h2.41v2.41h-2.41zM549.58 545.84h2.41v2.41h-2.41zM551.94 545.84h2.41v2.41h-2.41zM554.30 545.84h2.41v2.41h-2.41zM556.66 545.84h2.41v2.41h-2.41zM563.74 545.84h2.41v2.41h-2.41zM570.82 545.84h2.41v2.41h-2.41zM573.18 545.84h2.41v2.41h-2.41zM577.90 545.84h2.41v2.41h-2.41zM580.26 545.84h2.41v2.41h-2.41zM582.62 545.84h2.41v2.41h-2.41zM596.78 545.84h2.41v2.41h-2.41z" fill="#111"/>
<circle cx="453" cy="514.3" r="19.5" fill="#3a3a3a"/>
<circle cx="686.7" cy="514.4" r="19.5" fill="#3a3a3a"/>
<path d="M459.3 499 Q450 502 449 510 Q448 516 454 520 Q457 523 452 527 Q447 530 441 529 Q447 533 455 532 Q463 530 465 522 Q466 515 461 511 Q456 507 457 503 Q458 500 459.3 499Z" fill="#fff"/>
<rect x="680" y="503.5" width="13" height="5.5" rx="2.75" fill="#fff"/>
<rect x="674" y="511" width="21" height="5.5" rx="2.75" fill="#fff"/>
<rect x="674" y="518.5" width="10" height="5.5" rx="2.75" fill="#fff"/>
<text x="403" y="550" font-family="Liberation Sans" font-size="14.5" letter-spacing="0.6" fill="#f4f4f4">@graphicshop</text>
<text x="636" y="550" font-family="Liberation Sans" font-size="14.5" letter-spacing="0.6" fill="#f4f4f4">@graphicshop</text>
<path transform="translate(398.5,557.5) scale(0.2549,0.2508)" d="M130.56 16.81 127.44 17.81 128.44 21.19 128.44 21.81 128.69 22.69 128.69 23.69 128.81 23.81 128.81 26.19 128.69 26.31 128.69 27.06 128.06 29.19 127.06 30.94 125.31 32.69 123.94 33.56 123.69 33.56 122.81 34.06 120.19 34.81 120.19 35.06 120.44 35.44 120.56 36.06 121.31 37.81 122.06 37.56 122.56 37.56 124.69 36.81 127.06 35.44 127.94 34.69 129.44 33.06 130.94 30.31 131.44 28.81 131.44 28.44 131.69 27.81 131.69 27.19 131.81 27.06 131.81 26.19 131.94 26.06 131.94 22.69 131.81 22.56 131.69 20.81 131.19 19.06 131.19 18.56ZM106.81 13.56 105.81 13.94 104.44 14.19 103.56 14.56 103.81 15.19 104.06 17.06 104.19 17.19 104.19 18.06 104.31 18.19 104.31 20.94 104.19 21.06 104.19 21.56 103.94 22.31 103.56 22.94 103.06 23.44 102.19 23.81 100.56 23.81 99.69 23.44 98.94 22.69 98.44 21.69 98.44 21.31 98.19 20.69 97.94 16.31 97.81 16.06 97.06 16.06 96.94 16.19 96.06 16.19 95.94 16.31 94.69 16.44 94.81 16.81 94.81 18.44 94.94 18.56 94.94 20.06 94.81 20.19 94.69 21.56 94.19 22.69 93.44 23.44 92.44 23.81 90.31 23.81 89.31 23.44 88.19 22.19 87.69 20.94 87.69 20.31 87.56 20.19 87.31 16.06 86.44 16.06 86.31 16.19 85.56 16.19 85.44 16.31 84.19 16.44 84.19 17.56 84.31 17.69 84.31 20.69 84.19 20.81 84.06 21.69 83.56 22.56 82.69 23.31 81.06 23.81 76.69 23.81 75.44 23.31 74.56 22.44 74.19 21.81 72.81 16.81 69.81 17.81 69.81 18.31 70.56 20.56 70.56 21.06 70.81 21.81 70.81 22.56 70.94 22.69 70.94 23.44 71.06 23.56 71.06 26.31 70.94 26.44 70.94 27.19 70.81 27.31 70.69 28.19 70.44 28.94 69.31 30.94 68.56 31.81 67.56 32.69 65.69 33.81 63.19 34.69 62.44 34.81 63.44 37.69 63.56 37.81 64.31 37.69 66.69 36.94 68.81 35.81 70.81 34.06 72.31 32.06 73.06 30.56 73.69 28.81 73.94 27.31 74.06 27.19 74.06 26.56 74.31 26.19 74.94 26.69 76.31 27.19 76.94 27.19 77.06 27.31 80.56 27.31 80.69 27.19 81.69 27.19 82.94 26.81 84.44 25.94 85.31 25.06 85.81 24.31 86.44 25.31 87.44 26.31 88.56 26.94 89.31 27.19 90.19 27.19 90.31 27.31 92.19 27.31 92.31 27.19 92.81 27.19 93.56 26.94 95.06 26.06 95.94 25.19 96.56 24.31 97.19 25.31 98.44 26.56 99.81 27.19 102.44 27.31 102.56 27.19 103.56 27.06 104.44 26.69 104.94 26.31 106.31 24.81 106.81 23.81 107.44 21.56 107.44 20.81 107.56 20.69 107.56 17.69 107.44 17.56 107.44 16.56 107.31 16.44 107.19 15.06 107.06 14.94 107.06 14.44ZM42.69 13.69 42.56 13.56 42.06 13.81 39.44 14.44 39.69 15.94 39.81 16.06 39.94 17.44 40.06 17.56 40.19 20.56 40.06 20.69 39.94 21.81 39.56 22.69 38.69 23.56 38.06 23.81 36.44 23.81 35.69 23.56 35.31 23.31 34.69 22.56 34.19 21.44 34.06 20.31 33.94 20.19 33.94 18.69 33.81 18.56 33.69 16.06 32.81 16.06 32.69 16.19 31.94 16.19 31.81 16.31 30.56 16.44 30.56 17.44 30.69 17.56 30.69 20.81 30.56 20.94 30.56 21.44 29.94 22.81 29.06 23.56 28.19 23.81 25.81 23.81 24.56 23.31 23.44 22.31 22.69 21.06 21.81 18.44 21.81 18.06 21.31 16.81 18.19 18.06 18.19 18.44 18.44 18.81 18.56 19.56 19.31 21.69 19.31 22.06 19.56 22.69 19.56 23.31 19.69 23.44 19.69 24.06 19.81 24.19 19.94 26.94 19.81 27.06 19.81 28.06 19.69 28.19 19.56 29.19 18.69 31.06 18.31 31.56 17.19 32.56 15.94 33.31 14.81 33.69 13.44 33.81 13.31 33.94 9.94 33.94 9.81 33.81 9.19 33.81 9.06 33.69 8.06 33.56 6.06 32.56 5.44 32.06 4.56 31.06 3.94 29.81 3.56 28.56 3.31 25.94 3.44 25.81 3.44 24.19 3.56 24.06 3.69 22.69 3.81 22.56 3.81 22.06 4.69 18.94 1.69 17.69 0.56 21.56 0.56 22.19 0.31 22.94 0.31 23.81 0.19 23.94 0.19 25.94 0.06 26.06 0.19 26.31 0.31 28.81 1.06 31.44 1.81 32.94 2.56 33.94 3.69 35.06 4.94 35.94 6.19 36.56 7.81 37.06 9.31 37.19 9.44 37.31 10.56 37.31 10.69 37.44 13.69 37.31 13.81 37.19 14.56 37.19 14.69 37.06 16.19 36.81 17.56 36.31 19.44 35.19 20.44 34.31 21.94 32.19 21.94 31.94 22.56 30.69 22.69 29.81 22.94 29.31 23.06 27.69 23.19 27.56 23.19 26.31 23.31 26.19 23.81 26.56 25.31 27.19 25.81 27.19 25.94 27.31 27.94 27.31 28.06 27.19 29.06 27.06 30.56 26.31 31.31 25.69 32.06 24.69 32.44 24.44 33.19 25.56 33.94 26.31 35.31 27.06 36.31 27.19 36.44 27.31 38.31 27.31 38.44 27.19 38.94 27.19 40.44 26.56 41.69 25.44 42.69 23.69 43.19 21.94 43.31 20.06 43.44 19.94 43.44 18.81 43.31 18.69 43.19 16.06 43.06 15.94 43.06 15.31 42.94 15.19ZM55.56 13.31 55.06 13.31 54.94 13.19 52.94 13.19 51.69 13.56 50.81 14.06 49.44 15.31 48.81 16.19 48.06 17.69 47.69 18.81 47.56 19.94 47.44 20.06 47.44 22.69 47.56 22.81 47.56 23.31 48.19 24.81 49.31 26.06 50.69 26.81 51.94 27.19 52.56 27.19 52.69 27.31 55.69 27.31 55.81 27.19 57.06 27.06 57.56 26.81 57.94 26.94 57.56 28.44 57.06 29.44 56.56 30.19 54.81 31.94 52.81 33.19 52.56 33.19 51.69 33.69 49.81 34.31 47.69 34.81 48.19 36.44 48.81 37.81 49.44 37.56 50.94 37.31 53.06 36.56 54.44 35.94 56.56 34.56 58.06 33.19 59.06 31.94 60.06 30.06 60.81 27.81 60.94 26.44 61.06 26.31 61.06 24.94 61.19 24.81 61.19 22.94 61.06 22.81 60.94 20.81 60.81 20.69 60.81 20.19 60.69 20.06 60.44 18.81 59.44 16.56 58.56 15.31 57.19 14.06ZM52.31 16.94 53.31 16.56 54.44 16.56 55.69 17.06 56.56 17.94 57.31 19.31 57.69 20.56 57.81 21.81 57.94 21.94 57.94 22.94 58.06 23.06 58.06 23.31 57.81 23.56 56.81 23.69 56.69 23.81 56.06 23.81 55.94 23.94 53.44 23.94 51.69 23.44 50.81 22.56 50.56 21.94 50.56 20.31 50.69 20.19 50.81 19.19 51.31 18.06ZM263.69 17.06 263.44 16.31 262.56 14.69 261.56 13.56 260.56 12.81 259.31 12.19 258.56 11.94 257.44 11.81 257.31 11.69 255.56 11.69 255.44 11.81 254.19 11.94 253.06 12.31 251.56 13.06 249.06 14.94 247.56 16.44 246.19 18.06 243.44 22.06 242.94 23.06 242.56 23.31 241.94 23.06 241.44 22.56 240.94 21.44 240.81 20.19 240.69 20.06 240.69 18.31 240.56 18.19 240.56 16.31 240.44 16.19 240.44 15.56 237.56 15.81 237.31 15.94 237.31 16.94 237.44 17.06 237.44 20.56 237.31 20.69 237.19 21.56 236.56 22.69 235.81 23.31 234.31 23.81 232.06 23.81 231.94 23.94 221.69 23.94 221.56 24.06 221.56 24.44 221.81 24.94 221.81 25.31 222.31 26.94 222.69 27.31 226.56 27.31 226.69 27.44 227.31 27.44 228.44 27.94 228.81 28.31 229.31 29.19 229.31 30.06 229.06 30.56 227.31 32.19 225.19 33.19 223.44 33.69 222.19 33.81 222.06 33.94 218.31 33.94 218.19 33.81 217.44 33.81 217.31 33.69 216.31 33.56 214.31 32.56 213.06 31.31 212.19 29.69 211.94 28.44 211.81 28.31 211.81 27.69 211.69 27.56 211.69 24.44 211.81 24.31 211.81 23.44 211.94 23.31 212.19 21.44 212.56 20.31 209.56 19.19 208.81 21.69 208.69 23.06 208.56 23.19 208.56 24.31 208.44 24.44 208.44 27.69 208.56 27.81 208.69 29.19 209.31 31.31 210.19 33.06 210.94 34.06 212.69 35.56 214.19 36.44 216.19 37.06 217.56 37.19 217.69 37.31 218.81 37.31 218.94 37.44 219.81 37.44 219.94 37.31 222.31 37.31 222.44 37.19 223.31 37.19 224.06 36.94 224.69 36.94 226.56 36.31 228.19 35.56 229.69 34.56 231.06 33.19 232.06 31.44 232.31 30.56 232.31 29.69 232.44 29.56 232.31 29.44 232.31 28.44 231.94 27.56 232.06 27.31 234.81 27.19 236.44 26.69 237.94 25.69 239.06 24.44 240.56 25.81 241.81 26.44 244.06 27.06 246.31 27.19 246.44 27.31 251.81 27.31 251.94 27.19 253.31 27.19 253.44 27.06 255.44 26.94 255.56 26.81 256.06 26.81 256.19 26.69 257.56 26.44 260.31 25.31 262.19 23.81 262.94 22.81 263.31 22.06 263.81 20.31 263.81 17.69 263.69 17.56ZM260.31 17.69 260.44 18.69 260.56 18.81 260.56 19.56 260.44 19.69 260.31 20.56 259.94 21.19 259.06 22.06 257.44 22.94 255.69 23.44 254.31 23.56 254.19 23.69 253.19 23.69 253.06 23.81 246.44 23.81 246.31 23.69 248.06 21.06 249.81 18.94 251.94 16.94 253.19 16.06 254.19 15.56 255.31 15.19 257.44 15.19 257.56 15.31 257.94 15.31 259.06 15.94 259.69 16.56ZM141.44 8.69 141.31 8.69 139.94 11.44 139.94 11.69 141.31 12.44 143.94 14.19 146.31 16.31 147.31 17.69 147.81 18.81 147.81 19.31 147.94 19.44 147.81 21.06 147.31 21.94 146.31 22.81 145.56 23.19 143.81 23.69 141.69 23.81 141.56 23.94 139.44 23.94 139.31 23.81 138.19 23.81 138.06 23.69 137.19 23.69 137.06 23.56 135.94 23.44 135.94 26.81 136.31 26.94 137.81 27.06 137.94 27.19 139.31 27.19 139.44 27.31 141.44 27.31 141.56 27.19 144.31 27.06 144.44 26.94 144.94 26.94 145.06 26.81 145.56 26.81 146.06 26.56 146.44 26.56 146.81 26.31 147.69 26.06 149.44 24.81 150.06 24.06 150.94 22.06 151.06 20.31 151.19 20.19 151.06 18.44 150.44 16.56 149.31 14.69 147.06 12.31 145.81 11.31ZM34.56 6.69 32.06 9.19 34.56 11.81 37.06 9.44 37.06 9.19ZM27.94 6.69 25.44 9.19 25.44 9.44 27.94 11.81 30.44 9.31ZM318.94 6.31 316.31 8.94 318.81 11.56 321.56 8.94ZM312.44 6.31 309.81 8.94 312.31 11.56 312.56 11.56 315.06 9.06ZM413.06 4.44 410.31 7.19 413.06 9.94 415.81 7.19 415.81 7.06ZM336.94 2.69 334.06 5.44 336.81 8.19 339.56 5.44ZM31.19 1.81 28.69 4.31 31.31 6.81 33.81 4.31ZM400.44 0.56 400.44 19.56 400.56 19.69 400.69 21.94 400.81 22.06 401.06 23.31 401.56 24.44 402.19 25.31 403.19 26.19 403.81 26.56 405.69 27.19 406.56 27.19 406.69 27.31 411.81 27.31 411.94 27.19 413.06 27.06 414.44 26.44 415.69 25.31 416.19 24.56 416.81 23.19 417.06 21.69 417.19 21.56 417.19 20.81 417.31 20.69 417.31 17.69 417.19 17.56 417.19 16.44 417.06 16.31 416.69 13.56 416.31 13.44 416.19 13.56 413.31 14.19 413.44 15.06 413.56 15.19 413.56 15.81 413.69 15.94 413.69 16.56 413.81 16.69 413.81 17.31 413.94 17.44 413.94 18.31 414.06 18.44 414.06 20.81 413.94 20.94 413.94 21.44 413.69 22.19 413.31 22.81 412.81 23.31 412.19 23.69 411.81 23.69 411.69 23.81 406.44 23.81 405.19 23.31 404.31 22.44 403.94 21.69 403.81 20.56 403.69 20.44 403.69 0.56ZM394.44 0.56 391.19 0.56 391.19 27.31 391.06 27.44 391.06 28.19 390.56 29.94 389.69 31.44 388.81 32.31 387.81 32.94 385.69 33.56 382.44 33.56 382.31 33.44 381.81 33.44 380.56 33.06 379.56 32.56 378.56 31.69 377.56 30.06 377.31 28.81 377.19 28.69 377.19 27.81 377.06 27.69 377.06 26.19 377.19 26.06 377.19 24.69 377.31 24.56 377.44 23.19 378.44 19.56 375.44 18.31 374.44 21.56 374.44 22.06 374.31 22.19 374.19 23.31 374.06 23.44 374.06 24.19 373.94 24.31 373.81 27.19 373.94 27.31 374.06 29.56 374.69 31.69 375.31 32.94 375.94 33.81 377.19 35.06 379.19 36.19 381.31 36.81 383.19 36.94 383.31 37.06 385.94 36.94 386.06 36.81 386.69 36.81 386.81 36.69 387.81 36.56 389.19 36.06 390.69 35.19 392.19 33.69 393.31 31.81 394.06 29.44 394.19 27.94 394.31 27.81 394.31 26.44 394.44 26.31ZM354.94 0.56 354.94 27.31 358.06 27.31 358.06 0.56ZM268.94 0.56 268.94 20.94 269.06 21.06 269.06 21.81 269.56 23.56 270.31 24.94 271.81 26.31 273.56 27.06 274.94 27.19 275.06 27.31 277.81 27.31 277.94 27.19 279.31 27.06 281.06 26.31 283.06 24.44 283.44 24.94 284.31 25.69 285.69 26.44 287.44 26.94 288.69 27.06 288.81 27.19 290.19 27.19 290.31 27.31 295.56 27.31 295.69 27.19 298.31 27.06 298.44 26.94 299.06 26.94 299.19 26.81 299.69 26.81 299.81 26.69 300.31 26.69 301.31 26.31 301.69 26.31 303.56 25.44 303.81 25.44 305.06 26.31 307.19 27.06 308.94 27.19 309.06 27.31 314.06 27.31 314.19 27.19 314.81 27.19 314.94 27.06 315.81 26.94 317.06 26.44 318.19 25.69 319.44 24.31 320.06 25.31 320.94 26.19 322.31 26.94 323.06 27.19 323.81 27.19 323.94 27.31 329.56 27.31 329.69 27.19 331.06 27.19 331.19 27.06 332.06 27.06 332.19 26.94 332.69 26.94 332.81 26.81 334.69 26.44 335.44 26.06 336.44 25.81 337.69 25.19 337.94 25.19 346.06 21.06 348.81 20.06 350.06 19.81 350.06 16.56 349.19 16.56 349.06 16.44 347.81 16.31 345.31 15.56 336.56 11.81 335.56 11.69 335.44 11.56 334.06 11.56 333.94 11.69 333.31 11.69 332.06 12.06 330.44 13.06 328.81 14.69 327.56 16.56 330.31 17.94 330.56 17.94 331.06 17.19 332.44 15.81 332.94 15.44 334.19 14.94 335.69 15.06 336.81 15.56 337.44 15.69 337.81 15.94 338.44 16.06 338.81 16.31 339.06 16.31 342.56 17.81 343.19 17.94 344.19 18.44 343.94 18.69 343.69 18.69 342.06 19.56 341.81 19.56 339.19 20.94 338.94 20.94 335.81 22.44 333.94 23.06 333.56 23.06 331.94 23.56 331.44 23.56 331.31 23.69 330.44 23.69 330.31 23.81 323.81 23.81 323.69 23.69 323.31 23.69 322.44 23.19 321.69 22.44 321.06 20.94 321.06 20.19 320.94 20.06 320.94 18.31 320.81 18.19 320.69 15.56 319.81 15.56 319.69 15.69 318.81 15.69 318.69 15.81 317.81 15.81 317.56 15.94 317.56 16.81 317.69 16.94 317.69 20.44 317.56 20.56 317.44 21.44 317.06 22.19 316.19 23.19 314.69 23.81 307.69 23.81 307.56 23.69 306.94 23.69 306.31 23.44 307.31 21.69 307.69 20.44 307.69 19.69 307.81 19.56 307.81 18.31 307.69 18.19 307.56 16.94 307.31 16.19 306.31 14.44 305.06 13.19 304.31 12.69 303.19 12.19 301.94 11.81 301.31 11.81 301.19 11.69 299.31 11.69 299.19 11.81 298.06 11.94 296.69 12.44 295.06 13.31 293.56 14.44 290.94 17.06 289.94 18.31 287.44 21.94 286.94 22.94 286.56 23.31 285.81 23.06 285.44 22.69 284.81 21.31 284.69 19.44 284.56 19.31 284.56 17.56 284.44 17.44 284.44 15.56 283.44 15.56 283.31 15.69 282.44 15.69 282.31 15.81 281.44 15.81 281.19 15.94 281.31 16.19 281.31 18.06 281.44 18.19 281.31 20.81 280.81 22.19 279.94 23.19 278.31 23.81 274.81 23.81 274.06 23.44 273.81 23.44 272.69 22.44 272.31 21.56 272.19 20.31 272.06 20.19 272.06 0.56ZM304.44 18.31 304.44 19.81 304.31 19.94 304.31 20.31 303.94 21.06 302.81 22.19 301.69 22.81 300.19 23.31 298.31 23.56 298.19 23.69 297.19 23.69 297.06 23.81 290.31 23.81 290.19 23.69 291.44 21.81 293.19 19.56 295.56 17.19 297.81 15.69 299.31 15.19 301.44 15.19 302.81 15.81 303.81 16.81ZM166.94 0.56 166.94 20.56 167.06 20.69 167.06 21.56 167.19 21.69 167.31 22.69 167.81 24.06 168.44 25.06 169.81 26.31 170.81 26.81 171.56 27.06 172.06 27.06 172.19 27.19 173.06 27.19 173.19 27.31 175.81 27.31 175.94 27.19 176.69 27.19 177.44 26.81 177.69 26.81 179.44 25.56 180.56 24.31 182.06 25.69 183.31 26.56 185.19 27.44 185.56 27.44 186.19 27.69 188.94 27.69 189.06 27.56 189.56 27.56 190.31 27.31 191.44 26.69 192.69 25.31 193.44 23.56 193.56 22.31 193.69 22.19 193.69 20.19 193.56 20.06 193.44 18.81 192.69 16.94 191.81 15.69 191.19 15.06 190.19 14.31 189.44 13.94 188.19 13.56 187.69 13.56 187.56 13.44 185.06 13.56 184.31 13.81 182.81 14.69 181.69 15.81 180.69 17.31 178.19 21.81 177.81 22.31 176.56 23.44 175.69 23.81 172.94 23.81 171.69 23.31 170.94 22.69 170.44 21.81 170.44 21.44 170.19 20.81 170.19 19.81 170.06 19.69 170.06 0.56ZM186.06 16.81 187.44 16.81 188.19 17.06 188.81 17.44 189.94 18.69 190.44 20.19 190.44 21.19 190.56 21.31 190.44 22.44 190.19 23.19 189.31 24.06 188.81 24.31 187.06 24.44 185.56 23.94 183.81 22.81 182.19 21.31 182.81 20.06 183.94 18.31 184.94 17.31ZM446.31 0.06 441.19 2.19 440.94 2.19 440.31 2.56 436.94 3.81 436.31 4.19 433.56 5.19 432.94 5.56 432.69 5.56 431.69 6.06 430.81 7.06 430.56 7.81 430.56 8.69 430.81 9.56 431.19 10.19 431.94 10.94 436.44 14.19 438.56 15.94 440.19 17.69 441.06 19.19 441.31 20.69 441.19 20.81 441.06 21.81 440.69 22.44 439.44 23.31 438.56 23.56 438.06 23.56 437.94 23.69 437.19 23.69 437.06 23.81 428.31 23.81 427.06 23.31 426.19 22.44 425.81 21.69 425.69 20.56 425.56 20.44 425.56 0.56 422.31 0.56 422.31 19.56 422.44 19.69 422.44 21.19 422.56 21.31 422.56 21.94 422.69 22.06 422.81 22.94 423.19 23.69 423.19 23.94 423.69 24.81 424.56 25.81 425.69 26.56 427.56 27.19 428.44 27.19 428.56 27.31 436.19 27.31 436.31 27.19 438.44 27.06 438.56 26.94 440.06 26.69 442.19 25.69 443.19 24.81 444.06 23.44 444.31 22.69 444.31 22.19 444.44 22.06 444.44 21.44 444.56 21.31 444.44 19.06 444.19 18.19 443.44 16.69 442.06 14.81 440.69 13.44 438.44 11.56 434.06 8.44 435.94 7.56 436.19 7.56 436.56 7.31 439.31 6.31 439.94 5.94 443.31 4.69 443.94 4.31 445.44 3.81 446.06 3.44 446.31 3.44Z" fill="#a9bbd3" fill-rule="evenodd" opacity="1" stroke="#a9bbd3" stroke-width="0.35" vector-effect="non-scaling-stroke"/>
<path transform="translate(638,557.5) scale(0.2565,0.2366)" d="M16.19 39.31 13.69 41.81 16.31 44.31 18.81 41.81ZM19.56 34.31 17.06 36.81 19.56 39.44 22.06 36.94 22.06 36.69ZM12.94 34.31 10.44 36.69 10.44 36.94 12.94 39.44 15.44 36.94ZM74.06 21.19 70.94 22.19 71.94 25.69 72.06 27.19 72.19 27.31 72.19 28.56 72.31 28.69 72.31 30.19 72.19 30.31 72.06 31.94 71.44 33.81 70.44 35.44 68.94 36.94 66.56 38.31 64.81 38.94 63.69 39.19 64.69 42.19 65.56 41.94 66.06 41.94 67.81 41.31 69.56 40.44 70.69 39.69 71.69 38.81 72.81 37.56 73.56 36.44 74.31 34.94 75.19 32.06 75.19 31.31 75.31 31.19 75.31 30.44 75.44 30.31 75.44 27.56 75.31 27.44 75.31 26.31 75.19 26.19 75.19 25.31 75.06 25.19 74.94 24.06ZM207.19 21.56 206.94 21.06 206.94 20.69 206.31 19.44 205.19 18.06 203.81 17.06 202.81 16.56 202.06 16.31 200.94 16.19 200.81 16.06 198.81 16.06 198.69 16.19 197.19 16.44 195.44 17.19 194.06 18.06 192.81 19.06 190.94 20.94 189.19 23.06 187.31 25.81 186.31 27.56 186.06 27.69 185.94 27.56 185.56 27.56 185.06 27.19 184.44 25.94 184.31 24.81 184.19 24.69 183.94 19.94 181.06 20.19 180.81 20.31 180.81 21.69 180.94 21.81 180.94 24.69 180.81 24.81 180.81 25.44 180.19 26.81 179.06 27.81 177.81 28.19 175.56 28.19 175.44 28.31 165.19 28.31 165.06 28.44 165.06 28.94 165.31 29.44 165.69 31.06 166.19 31.69 170.06 31.69 170.19 31.81 170.81 31.81 171.69 32.19 172.56 33.06 172.81 33.69 172.81 34.19 172.44 35.06 170.81 36.56 169.31 37.31 167.94 37.81 167.56 37.81 166.94 38.06 166.31 38.06 166.19 38.19 165.31 38.19 165.19 38.31 161.81 38.31 161.69 38.19 160.94 38.19 160.81 38.06 159.81 37.94 158.19 37.19 156.94 36.19 156.19 35.19 155.81 34.44 155.31 32.81 155.31 32.19 155.19 32.06 155.19 28.69 155.31 28.56 155.31 27.56 155.44 27.44 155.56 26.31 156.06 24.69 153.06 23.56 152.81 24.06 152.81 24.44 152.31 25.94 152.19 27.19 152.06 27.31 152.06 28.44 151.94 28.56 151.94 32.19 152.06 32.31 152.19 33.69 152.94 36.06 153.69 37.44 154.44 38.44 155.31 39.31 156.31 40.06 157.69 40.81 159.81 41.44 161.31 41.56 161.44 41.69 165.69 41.69 165.81 41.56 166.69 41.56 166.81 41.44 168.06 41.31 170.06 40.69 171.44 40.06 173.31 38.81 174.44 37.69 175.44 36.06 175.81 34.81 175.81 32.94 175.44 31.94 175.56 31.69 178.31 31.56 179.94 31.06 180.94 30.44 182.56 28.81 182.69 28.81 183.69 29.94 184.94 30.69 187.56 31.44 189.69 31.56 189.81 31.69 195.19 31.69 195.31 31.56 198.06 31.44 198.19 31.31 199.56 31.19 199.69 31.06 201.06 30.81 203.56 29.81 205.31 28.56 206.56 26.94 206.56 26.69 207.06 25.69 207.19 24.69 207.31 24.56 207.31 22.19 207.19 22.06ZM203.81 22.06 203.94 23.44 204.06 23.56 203.94 23.69 203.94 24.44 203.56 25.31 202.69 26.31 200.94 27.31 199.19 27.81 197.81 27.94 197.69 28.06 196.69 28.06 196.56 28.19 189.94 28.19 189.81 28.06 190.81 26.44 193.06 23.56 195.56 21.19 197.69 19.94 198.81 19.56 200.94 19.56 201.06 19.69 201.44 19.69 202.69 20.44 203.44 21.31ZM84.81 13.06 83.31 16.06 84.56 16.69 87.06 18.31 89.56 20.44 90.56 21.69 91.19 22.94 91.31 23.81 91.44 23.94 91.31 25.31 90.44 26.69 89.06 27.56 87.81 27.94 86.56 28.06 86.44 28.19 85.06 28.19 84.94 28.31 82.94 28.31 82.81 28.19 81.56 28.19 81.44 28.06 80.69 28.06 80.56 27.94 79.44 27.81 79.44 31.19 79.81 31.31 81.31 31.44 81.44 31.56 82.81 31.56 82.94 31.69 84.94 31.69 85.06 31.56 86.81 31.56 86.94 31.44 88.44 31.31 90.56 30.69 92.19 29.81 93.44 28.56 94.06 27.44 94.44 26.31 94.44 25.81 94.56 25.69 94.56 23.06 94.06 21.31 93.06 19.44 92.19 18.31 89.94 16.19 88.19 14.94ZM262.44 10.69 259.81 13.31 262.31 15.94 265.06 13.31ZM255.94 10.69 253.31 13.31 255.81 15.94 258.56 13.31ZM356.56 8.81 353.81 11.56 356.56 14.31 359.31 11.56ZM280.19 7.06 277.56 9.81 280.31 12.56 283.06 9.81ZM343.94 4.94 343.94 24.44 344.06 24.56 344.06 25.69 344.19 25.81 344.19 26.44 344.31 26.56 344.44 27.44 345.06 28.81 345.56 29.56 346.19 30.19 347.31 30.94 348.19 31.31 349.19 31.44 349.31 31.56 349.94 31.56 350.06 31.69 355.31 31.69 355.44 31.56 356.56 31.44 357.94 30.81 358.94 29.94 359.81 28.69 360.44 27.06 360.44 26.56 360.69 25.81 360.81 22.31 360.69 22.19 360.69 21.06 360.56 20.94 360.44 19.31 360.31 19.19 360.31 18.69 360.06 17.81 356.81 18.56 356.94 19.56 357.06 19.69 357.06 20.31 357.19 20.44 357.19 21.06 357.31 21.19 357.31 21.94 357.44 22.06 357.56 24.94 357.44 25.06 357.44 25.69 357.19 26.44 356.69 27.31 356.31 27.69 355.19 28.19 350.06 28.19 349.19 27.94 348.31 27.44 347.69 26.69 347.19 25.06 347.19 4.94ZM337.94 4.94 334.69 4.94 334.69 31.44 334.56 31.56 334.56 32.44 333.94 34.56 333.69 34.81 333.44 35.44 332.44 36.56 331.56 37.19 329.81 37.81 329.31 37.81 329.19 37.94 326.06 37.94 325.94 37.81 325.31 37.81 324.06 37.44 323.06 36.94 321.94 35.94 320.94 34.19 320.94 33.81 320.69 33.19 320.69 32.44 320.56 32.31 320.56 30.19 320.69 30.06 320.81 28.06 320.94 27.94 320.94 27.44 321.19 26.81 321.44 25.31 321.94 23.94 318.94 22.69 318.81 22.81 317.94 25.81 317.94 26.31 317.81 26.44 317.69 27.56 317.56 27.69 317.56 28.56 317.44 28.69 317.31 32.31 317.44 32.44 317.56 34.06 318.31 36.44 318.94 37.56 319.81 38.69 320.81 39.56 322.94 40.69 324.69 41.06 324.81 41.19 325.56 41.19 325.69 41.31 329.44 41.31 329.56 41.19 330.19 41.19 330.31 41.06 330.81 41.06 332.06 40.69 334.19 39.56 335.94 37.69 336.94 35.81 337.56 33.69 337.69 32.19 337.81 32.06 337.81 30.19 337.94 30.06ZM298.31 4.94 298.31 31.56 298.44 31.69 301.56 31.69 301.56 4.94ZM212.31 4.94 212.31 23.94 212.44 24.06 212.56 26.31 213.19 28.31 214.06 29.69 214.56 30.19 215.69 30.94 217.56 31.56 218.44 31.56 218.56 31.69 221.44 31.69 221.56 31.56 222.81 31.44 224.69 30.56 225.19 30.19 226.44 28.81 227.81 30.06 229.19 30.81 230.94 31.31 231.44 31.31 231.56 31.44 233.69 31.56 233.81 31.69 239.06 31.69 239.19 31.56 241.81 31.44 241.94 31.31 242.56 31.31 242.69 31.19 243.19 31.19 243.31 31.06 243.81 31.06 244.81 30.69 245.19 30.69 247.06 29.81 247.31 29.81 247.69 30.19 248.81 30.81 250.69 31.44 252.44 31.56 252.56 31.69 257.56 31.69 257.69 31.56 258.31 31.56 258.44 31.44 259.31 31.31 260.94 30.56 261.69 30.06 262.81 28.81 263.19 29.06 263.44 29.56 264.56 30.69 265.19 31.06 266.56 31.56 267.31 31.56 267.44 31.69 273.06 31.69 273.19 31.56 274.56 31.56 274.69 31.44 275.44 31.44 275.56 31.31 276.19 31.31 276.31 31.19 277.69 30.94 279.94 30.19 280.56 29.81 281.69 29.44 289.56 25.44 289.81 25.44 291.06 24.81 291.44 24.81 292.31 24.44 293.56 24.19 293.56 20.94 292.44 20.94 292.31 20.81 290.69 20.56 287.19 19.31 286.31 18.81 286.06 18.81 281.06 16.56 278.94 15.94 277.56 15.94 277.44 16.06 276.19 16.19 274.56 16.94 274.06 17.31 272.19 19.19 271.06 20.94 273.94 22.31 274.44 21.69 276.56 19.69 277.69 19.31 278.56 19.31 280.94 20.06 285.06 21.81 285.69 21.94 286.06 22.19 287.56 22.69 287.69 22.81 281.06 26.06 280.81 26.06 280.19 26.44 277.44 27.44 277.06 27.44 275.44 27.94 274.94 27.94 274.81 28.06 273.94 28.06 273.81 28.19 267.31 28.19 267.19 28.06 266.81 28.06 266.06 27.69 264.94 26.44 264.56 25.31 264.56 24.69 264.44 24.56 264.19 19.94 263.31 19.94 263.19 20.06 262.31 20.06 262.19 20.19 261.31 20.19 261.06 20.31 261.06 21.56 261.19 21.69 261.19 24.56 261.06 24.69 261.06 25.31 260.56 26.56 259.81 27.44 258.94 27.94 258.06 28.19 251.19 28.19 251.06 28.06 250.44 28.06 249.81 27.81 250.31 27.06 250.94 25.69 250.94 25.31 251.19 24.69 251.19 23.69 251.31 23.56 251.06 21.31 250.81 20.56 250.06 19.19 248.69 17.69 247.56 16.94 247.31 16.94 246.69 16.56 245.44 16.19 244.81 16.19 244.69 16.06 242.69 16.06 240.44 16.69 238.19 17.94 236.19 19.56 233.69 22.31 232.31 24.19 230.06 27.69 229.31 27.44 228.81 26.94 228.56 26.44 228.19 25.19 228.19 24.19 228.06 24.06 227.94 20.31 227.81 19.94 226.94 19.94 226.81 20.06 225.94 20.06 225.81 20.19 224.94 20.19 224.69 20.31 224.69 20.94 224.81 21.06 224.81 23.06 224.94 23.19 224.81 25.06 224.31 26.56 223.56 27.44 222.69 27.94 221.81 28.19 218.31 28.19 217.06 27.69 216.19 26.81 215.81 26.06 215.69 24.94 215.56 24.81 215.56 4.94ZM247.69 21.94 247.94 22.81 247.94 24.06 247.69 24.94 247.31 25.56 246.44 26.44 245.19 27.19 243.69 27.69 241.81 27.94 241.69 28.06 240.69 28.06 240.56 28.19 233.81 28.19 233.69 28.06 235.56 25.31 237.56 22.94 239.19 21.44 240.19 20.69 241.56 19.94 242.81 19.56 244.81 19.56 244.94 19.69 245.31 19.69 246.31 20.19 247.19 21.06ZM110.44 4.94 110.44 25.19 110.56 25.31 110.56 26.06 110.69 26.19 110.81 27.19 111.81 29.31 113.31 30.69 115.06 31.44 116.44 31.56 116.56 31.69 119.19 31.69 119.31 31.56 120.56 31.44 122.19 30.56 123.19 29.69 124.06 28.69 124.94 29.56 126.56 30.81 128.31 31.69 129.56 31.94 129.69 32.06 132.44 32.06 132.56 31.94 133.06 31.94 133.81 31.69 135.06 30.94 135.81 30.19 136.31 29.44 136.81 28.31 136.81 27.94 137.06 27.31 137.19 24.69 137.06 24.56 137.06 23.81 136.94 23.69 136.81 22.81 135.94 20.94 134.69 19.44 133.19 18.44 131.06 17.81 128.44 17.94 127.69 18.31 127.44 18.31 126.44 18.94 125.06 20.31 124.31 21.44 122.31 25.19 121.56 26.31 120.81 27.19 119.81 27.94 119.06 28.19 116.44 28.19 114.94 27.56 114.31 26.94 113.81 25.81 113.69 24.44 113.56 24.31 113.56 4.94ZM128.44 21.69 129.44 21.19 130.94 21.19 132.31 21.81 133.31 22.94 133.69 23.69 133.81 24.56 133.94 24.69 133.94 26.69 133.56 27.69 132.81 28.44 131.69 28.81 130.56 28.81 129.31 28.44 127.44 27.31 125.69 25.69 126.56 23.94 127.31 22.81ZM389.81 4.44 384.69 6.56 384.44 6.56 383.81 6.94 380.44 8.19 379.81 8.56 379.56 8.56 379.19 8.81 375.81 10.06 374.81 10.69 374.19 11.69 374.06 12.06 374.06 13.19 374.19 13.31 374.19 13.69 374.69 14.56 375.56 15.44 380.56 19.06 382.31 20.56 383.69 22.06 384.56 23.56 384.56 23.94 384.69 24.06 384.69 25.69 384.44 26.44 383.19 27.56 382.06 27.94 380.69 28.06 380.56 28.19 371.81 28.19 370.56 27.69 370.19 27.44 369.56 26.69 369.06 25.06 369.06 4.94 365.81 4.94 365.81 24.44 365.94 24.56 366.06 26.44 366.56 28.06 367.44 29.56 368.19 30.31 368.94 30.81 370.06 31.31 370.44 31.31 371.06 31.56 371.94 31.56 372.06 31.69 379.81 31.69 379.94 31.56 381.06 31.56 381.19 31.44 381.81 31.44 381.94 31.31 382.56 31.31 382.69 31.19 383.56 31.06 385.44 30.19 386.56 29.31 387.06 28.69 387.81 27.06 387.94 25.31 388.06 25.19 388.06 24.44 387.94 24.31 387.81 23.06 386.94 21.06 386.06 19.81 384.81 18.44 383.31 17.06 377.56 12.81 379.69 11.81 381.56 11.19 382.19 10.81 382.44 10.81 382.81 10.56 383.06 10.56 389.69 7.81 389.81 7.69ZM51.81 4.44 49.81 5.31 49.56 5.31 48.94 5.69 48.69 5.69 48.31 5.94 44.94 7.19 44.31 7.56 44.06 7.56 43.69 7.81 43.44 7.81 43.06 8.06 39.69 9.31 39.06 9.69 38.19 9.94 37.19 10.44 36.56 11.06 36.06 12.19 36.19 13.56 36.69 14.56 38.56 16.19 39.06 16.44 43.06 19.44 45.31 21.56 46.06 22.56 46.56 23.56 46.81 24.44 46.69 25.81 46.19 26.81 45.81 27.19 44.94 27.69 44.06 27.94 43.56 27.94 43.44 28.06 42.69 28.06 42.56 28.19 34.06 28.19 32.81 27.69 31.81 26.56 31.31 25.19 30.94 19.94 30.06 19.94 29.94 20.06 29.06 20.06 28.94 20.19 28.06 20.19 27.81 20.31 27.81 21.44 27.94 21.56 27.94 24.44 27.81 24.56 27.81 24.94 27.44 25.69 26.44 26.69 25.06 27.44 23.31 27.81 23.19 27.94 21.31 28.06 21.19 28.19 11.44 28.19 11.31 28.06 9.94 28.06 9.81 27.94 8.31 27.81 8.19 27.69 6.94 27.44 5.81 26.94 5.06 26.44 4.31 25.69 3.81 24.94 3.44 23.69 3.44 21.44 3.56 21.31 3.56 20.69 4.06 18.94 2.31 18.19 1.69 18.06 1.19 17.81 0.69 19.06 0.69 19.44 0.31 20.56 0.19 22.69 0.06 22.81 0.19 23.06 0.31 25.19 0.69 26.31 1.81 28.19 3.44 29.56 4.94 30.31 6.81 30.94 7.81 31.06 7.94 31.19 8.56 31.19 8.69 31.31 9.31 31.31 9.44 31.44 10.56 31.44 10.69 31.56 12.44 31.56 12.56 31.69 20.19 31.69 20.31 31.56 22.81 31.44 22.94 31.31 25.06 30.94 25.44 30.69 26.06 30.56 27.44 29.81 29.19 28.31 29.44 28.44 30.31 29.81 30.94 30.44 31.69 30.94 32.94 31.44 34.19 31.56 34.31 31.69 41.69 31.69 41.81 31.56 43.06 31.56 43.19 31.44 44.56 31.31 46.56 30.69 48.19 29.69 48.81 29.06 49.56 27.81 49.94 26.56 49.94 25.81 50.06 25.69 50.06 24.19 49.94 24.06 49.94 23.44 49.69 22.56 48.56 20.44 47.69 19.31 46.19 17.81 43.94 15.94 39.56 12.81 41.44 11.94 41.69 11.94 42.06 11.69 44.19 10.94 44.81 10.56 45.06 10.56 45.44 10.31 45.69 10.31 46.06 10.06 48.19 9.31 48.81 8.94 49.06 8.94 49.44 8.69 51.81 7.81ZM51.69 0.06 51.44 0.06 50.19 0.69 49.94 0.69 49.56 0.94 49.31 0.94 48.94 1.19 48.69 1.19 48.31 1.44 44.94 2.69 44.31 3.06 44.06 3.06 43.69 3.31 43.44 3.31 43.06 3.56 42.81 3.56 42.44 3.81 39.06 5.06 38.44 5.44 36.94 5.94 36.94 7.94 37.56 7.81 37.94 7.56 40.06 6.81 40.69 6.44 40.94 6.44 41.31 6.19 41.56 6.19 41.94 5.94 42.19 5.94 42.56 5.69 42.81 5.69 43.19 5.44 43.44 5.44 43.81 5.19 44.06 5.19 46.56 4.06 46.81 4.06 47.19 3.81 47.44 3.81 47.81 3.56 48.06 3.56 48.44 3.31 48.69 3.31 51.69 2.06Z" fill="#a9bbd3" fill-rule="evenodd" opacity="1" stroke="#a9bbd3" stroke-width="0.35" vector-effect="non-scaling-stroke"/>
</g>
<path d="M0.5 400 V0.5 H699.5 V400" fill="none" stroke="#fafafa" stroke-width="1" opacity=".8"/>
</g></svg>

<!-- ===== RIGHT PANELS ===== -->
<div class="a" style="left:1100px;top:62px;width:266px;height:637px;background:#323232"></div>
<!-- top collapse bar -->
<div class="a" style="left:1102px;top:62px;width:264px;height:13px;background:#3a3a3a;border-top:1px solid #303030;border-bottom:1px solid #2e2e2e;border-left:1px solid #2e2e2e"></div>
<svg class="a" style="left:1128px;top:65px" width="10" height="8"><path d="M4 0 L0 3.5 L4 7Z M9 0 L5 3.5 L9 7Z" fill="#cfcfcf"/></svg>
<svg class="a" style="left:1354px;top:65px" width="10" height="8"><path d="M0 0 L4 3.5 L0 7Z M5 0 L9 3.5 L5 7Z" fill="#cfcfcf"/></svg>
<!-- icon column -->
<div class="a" style="left:1103px;top:75px;width:37px;height:40px;background:#535353;border-top:1px solid #5e5e5e"></div>
<div class="a" style="left:1103px;top:116px;width:37px;height:40px;background:#535353;border-top:1px solid #5e5e5e"></div>
<div class="a" style="left:1103px;top:157px;width:37px;height:68px;background:#535353;border-top:1px solid #5e5e5e"></div>
<div class="a" style="left:1103px;top:226px;width:37px;height:473px;background:#535353;border-top:1px solid #5e5e5e"></div>
<div class="a" style="left:1112px;top:79px;width:19px;height:3px;background:repeating-linear-gradient(90deg,#2d2d2d 0 1px,transparent 1px 2px)"></div>
<div class="a" style="left:1112px;top:120px;width:19px;height:3px;background:repeating-linear-gradient(90deg,#2d2d2d 0 1px,transparent 1px 2px)"></div>
<div class="a" style="left:1112px;top:161px;width:19px;height:3px;background:repeating-linear-gradient(90deg,#2d2d2d 0 1px,transparent 1px 2px)"></div>
<svg class="a" style="left:1103px;top:75px" width="37" height="150">
 <g fill="none" stroke="#bdbdbd" stroke-width="1"><rect x="13.5" y="16.5" width="4" height="4"/><rect x="13.5" y="22.5" width="4" height="4"/></g>
 <rect x="13" y="28" width="5" height="5" fill="#a8a8a8"/>
 <path d="M23 17.5 Q28.5 18.5 27.5 24.5 Q27 28.5 22.5 31" fill="none" stroke="#bdbdbd" stroke-width="2"/><path d="M20.5 17.5 L24.5 14.5 L24.5 20.5Z" fill="#bdbdbd"/>
 <path d="M13 59 l5 -2.5 l5 2.5 v6 l-5 2.5 l-5 -2.5z" fill="#a8a8a8" stroke="#cfcfcf" stroke-width=".8"/><path d="M13 59 l5 2.5 l5 -2.5 M18 61.5 v6" stroke="#6a6a6a" fill="none" stroke-width=".8"/>
 <rect x="25" y="57" width="5" height="4" fill="#bdbdbd"/><rect x="25" y="62" width="5" height="4" fill="#bdbdbd"/><rect x="12" y="69" width="18" height="3" fill="#bdbdbd"/><path d="M25 70 h4 l-2 2z" fill="#333"/>
 <text x="12" y="111" font-family="Liberation Sans" font-size="17" fill="#c6c6c6">A</text><rect x="25" y="96" width="1" height="18" fill="#c6c6c6"/>
 <path d="M21 126.5 h-4 a4 4 0 0 0 0 8 h1.5 v7 h2 v-15 M22.5 126.5 v15 h1.6 v-15z" fill="#c6c6c6"/>
</svg>

<!-- ===== COLOR PANEL ===== -->
<div class="a" style="left:1143px;top:75px;width:223px;height:17px;background:#424242;border-bottom:1px solid #383838"></div>
<div class="a" style="left:1143px;top:75px;width:40px;height:18px;background:#535353"></div>
<div class="a" style="left:1183px;top:75px;width:1px;height:17px;background:#383838"></div>
<div class="a" style="left:1241px;top:75px;width:1px;height:17px;background:#383838"></div>
<div class="t opt" style="left:1150px;top:79px;color:#ececec">Color</div>
<div class="t opt" style="left:1190px;top:79px;color:#a9a9a9">Swatches</div>
<svg class="a" style="left:1349px;top:80px" width="14" height="9"><path d="M0 2 h5 l-2.5 3z" fill="#cfcfcf"/><path d="M6 0.5 h8 M6 3.5 h8 M6 6.5 h8" stroke="#cfcfcf"/></svg>
<div class="a" style="left:1143px;top:93px;width:223px;height:98px;background:#535353"></div>
<div class="a" style="left:1158px;top:110px;width:20px;height:20px;background:#fff;border:1px solid #2f2f2f"></div>
<div class="a" style="left:1147px;top:100px;width:21px;height:21px;background:#fff;border:1px solid #2a2a2a;outline:1px solid #6e6e6e"></div>
<div class="t" style="left:1186px;top:103px;font-size:11px;color:#e6e6e6">R</div>
<div class="t" style="left:1186px;top:127px;font-size:11px;color:#e6e6e6">G</div>
<div class="t" style="left:1186px;top:151px;font-size:11px;color:#e6e6e6">B</div>
<div class="a" style="left:1200px;top:101px;width:86px;height:7px;border:1px solid #3a3a3a;background:linear-gradient(90deg,#00ffff,#ffffff)"></div>
<div class="a" style="left:1200px;top:125px;width:86px;height:7px;border:1px solid #3a3a3a;background:linear-gradient(90deg,#ff00ff,#ffffff)"></div>
<div class="a" style="left:1200px;top:149px;width:86px;height:7px;border:1px solid #3a3a3a;background:linear-gradient(90deg,#ffff00,#ffffff)"></div>
<svg class="a" style="left:1280px;top:106px" width="11" height="60"><defs><linearGradient id="thb" x1="0" y1="0" x2="0" y2="1"><stop offset="0" stop-color="#d8d8d8"/><stop offset="1" stop-color="#7a7a7a"/></linearGradient></defs>
 <path d="M5.5 0.5 L10 6 V10.5 H1 V6Z" fill="url(#thb)" stroke="#333"/>
 <path d="M5.5 24.5 L10 30 V34.5 H1 V30Z" fill="url(#thb)" stroke="#333"/>
 <path d="M5.5 48.5 L10 54 V58.5 H1 V54Z" fill="url(#thb)" stroke="#333"/></svg>
<div class="a" style="left:1292px;top:100px;width:46px;height:18px;background:#3d3d3d;border:1px solid #4a4a4a;border-top-color:#333"></div>
<div class="a" style="left:1292px;top:124px;width:46px;height:18px;background:#3d3d3d;border:1px solid #4a4a4a;border-top-color:#333"></div>
<div class="a" style="left:1292px;top:148px;width:46px;height:18px;background:#3d3d3d;border:1px solid #4a4a4a;border-top-color:#333"></div>
<div class="t" style="left:1297px;top:104px;font-size:11px;color:#f0f0f0">255</div>
<div class="t" style="left:1297px;top:128px;font-size:11px;color:#f0f0f0">255</div>
<div class="t" style="left:1297px;top:152px;font-size:11px;color:#f0f0f0">255</div>
<div class="a" style="left:1148px;top:174px;width:200px;height:16px;border:1px solid #3a3a3a;background:linear-gradient(90deg,#ed1c24 0%,#fff200 17%,#00a651 33%,#00aeef 50%,#2e3192 67%,#ec008c 83%,#ed1c24 100%)"></div>
<div class="a" style="left:1149px;top:175px;width:190px;height:14px;background:linear-gradient(rgba(255,255,255,.85),rgba(255,255,255,0) 45%,rgba(0,0,0,0) 55%,rgba(0,0,0,1))"></div>
<div class="a" style="left:1339px;top:175px;width:8px;height:7px;background:#fff"></div>
<div class="a" style="left:1339px;top:182px;width:8px;height:7px;background:#000"></div>

<!-- ===== ADJUSTMENTS PANEL ===== -->
<div class="a" style="left:1143px;top:195px;width:223px;height:17px;background:#424242;border-bottom:1px solid #383838;border-top:1px solid #303030"></div>
<div class="a" style="left:1143px;top:196px;width:73px;height:16px;background:#535353"></div>
<div class="a" style="left:1216px;top:196px;width:1px;height:16px;background:#383838"></div>
<div class="a" style="left:1258px;top:196px;width:1px;height:16px;background:#383838"></div>
<div class="t opt" style="left:1150px;top:199px;color:#ececec">Adjustments</div>
<div class="t opt" style="left:1223px;top:199px;color:#a9a9a9">Styles</div>
<svg class="a" style="left:1349px;top:200px" width="14" height="9"><path d="M0 2 h5 l-2.5 3z" fill="#cfcfcf"/><path d="M6 0.5 h8 M6 3.5 h8 M6 6.5 h8" stroke="#cfcfcf"/></svg>
<div class="a" style="left:1143px;top:212px;width:223px;height:103px;background:#535353"></div>
<div class="t opt" style="left:1152px;top:218px;font-weight:bold;color:#ececec;font-size:10.3px">Add an adjustment</div>
<svg class="a" style="left:1170px;top:230px" width="160" height="85">
<defs>
 <linearGradient id="ag1" x1="0" y1="0" x2="1" y2="1"><stop offset="0" stop-color="#3a3a3a"/><stop offset="1" stop-color="#cfcfcf"/></linearGradient>
 <linearGradient id="ag2" x1="0" y1="0" x2="1" y2="0"><stop offset="0" stop-color="#2c2c2c"/><stop offset="1" stop-color="#d6d6d6"/></linearGradient>
 <linearGradient id="ag3" x1="0" y1="0" x2="0" y2="1"><stop offset="0" stop-color="#9a9a9a"/><stop offset="1" stop-color="#5a5a5a"/></linearGradient>
</defs>
<g stroke="#c4c4c4" fill="none" stroke-width="1.2">
 <!-- row1 y 6..22 ; brightness -->
 <circle cx="27.5" cy="14.5" r="4.2"/><path d="M27.5 10.3 a4.2 4.2 0 0 1 0 8.4z" fill="#c4c4c4"/>
 <path d="M27.5 6.5v2.5 M27.5 20v2.5 M19.5 14.5h2.5 M33 14.5h2.5 M21.8 8.8l1.8 1.8 M31.4 18.4l1.8 1.8 M21.8 20.2l1.8 -1.8 M31.4 10.6l1.8 -1.8" stroke-width="1.4"/>
 <!-- levels -->
 <path d="M43 20.5 h18 M43 20 v-5 l2 -3 l1 3 l2 -4 l2 4 l2 -6 l2 6 l2 -3 l2 4 l2 -2 v6z" fill="#a8a8a8" stroke="#c4c4c4" stroke-width=".8"/>
 <!-- curves -->
 <rect x="68.5" y="7.5" width="15" height="14"/><path d="M68.5 12.5h15 M68.5 17h15 M73.5 7.5v14 M78.5 7.5v14" stroke="#7d7d7d" stroke-width=".8"/><path d="M69 21 q7 0 8 -7 q1 -6 6 -6.5" stroke="#e0e0e0" stroke-width="1.3"/>
 <!-- exposure -->
 <rect x="92.5" y="7.5" width="15" height="14" fill="#8a8a8a"/><path d="M92.5 21.5 l15 -14" stroke="#535353"/><path d="M94 11h4 M96 9v4 M101 17.5h4" stroke="#e0e0e0" stroke-width="1.2"/>
 <!-- vibrance triangle -->
 <path d="M116 8 h16 l-8 14z" fill="url(#ag3)" stroke="none"/>
 <!-- row2 y 34..48 -->
 <rect x="8.5" y="34.5" width="16" height="14" fill="url(#ag2)"/><path d="M8.5 41.5h16" stroke="#c4c4c4"/><path d="M11 35v6 M14 35v6 M17 35v6 M20 35v6" stroke="#8a8a8a"/>
 <path d="M39 34 v14 M31 37 h16 M31 37 l-2.5 6 h5z M47 37 l-2.5 6 h5z M35 48 h8" /><path d="M28.5 43 a3 2 0 0 0 5 0z M44.5 43 a3 2 0 0 0 5 0z" fill="#c4c4c4"/><path d="M37 36 l2 -2.5 l2 2.5z" fill="#c4c4c4"/>
 <rect x="56.5" y="34.5" width="16" height="14" fill="url(#ag2)"/><rect x="56.5" y="34.5" width="7" height="14" fill="#535353"/>
 <path d="M79.5 35.5 h12 v7 h-12z" fill="#9a9a9a" stroke="none"/><circle cx="85" cy="41" r="3" /><circle cx="90" cy="45" r="5" fill="#535353"/>
 <circle cx="107" cy="38.5" r="4.5" fill="#b0b0b0" stroke="none"/><circle cx="104" cy="44" r="4.5" fill="#a0a0a0" stroke="none"/><circle cx="110" cy="44" r="4.5" fill="#bcbcbc" stroke="none"/>
 <rect x="128.5" y="34.5" width="16" height="14" fill="#7a7a7a"/><path d="M128.5 39h16 M128.5 44h16 M133.5 34.5v14 M139 34.5v14" stroke="#535353" stroke-width="1.2"/>
 <!-- row3 y 62..75 -->
 <rect x="20.5" y="62.5" width="16" height="13" fill="#8e8e8e"/><path d="M21 75 l15 -12.5" stroke="#535353" stroke-width="2"/><ellipse cx="28.5" cy="69" rx="3.5" ry="5" fill="#535353" stroke="none" transform="rotate(45 28.5 69)"/>
 <rect x="44.5" y="62.5" width="16" height="13" fill="url(#ag1)"/><path d="M45 72 l10 -9 M48 75 l12 -11" stroke="#8a8a8a" stroke-width="2"/>
 <rect x="68.5" y="62.5" width="16" height="13" fill="#8a8a8a"/><path d="M70 73 h4 v-3 h4 v-3 h4 v-3" stroke="#2e2e2e" stroke-width="2.2"/>
 <rect x="92.5" y="62.5" width="16" height="13" fill="#a4a4a4"/><path d="M92.5 62.5 l8 6.5 l8 -6.5z M92.5 75.5 l8 -6.5 l8 6.5z" fill="#6a6a6a" stroke="none"/>
 <rect x="116.5" y="62.5" width="16" height="13" fill="url(#ag2)"/>
</g>
</svg>


<!-- ===== LAYERS PANEL ===== -->
<div class="a" style="left:1143px;top:318px;width:223px;height:17px;background:#424242;border-bottom:1px solid #383838;border-top:1px solid #303030"></div>
<div class="a" style="left:1143px;top:319px;width:43px;height:16px;background:#535353"></div>
<div class="a" style="left:1186px;top:319px;width:1px;height:16px;background:#383838"></div>
<div class="a" style="left:1243px;top:319px;width:1px;height:16px;background:#383838"></div>
<div class="a" style="left:1283px;top:319px;width:1px;height:16px;background:#383838"></div>
<div class="t opt" style="left:1150px;top:322px;color:#ececec">Layers</div>
<div class="t opt" style="left:1193px;top:322px;color:#a9a9a9">Channels</div>
<div class="t opt" style="left:1250px;top:322px;color:#a9a9a9">Paths</div>
<svg class="a" style="left:1349px;top:323px" width="14" height="9"><path d="M0 2 h5 l-2.5 3z" fill="#cfcfcf"/><path d="M6 0.5 h8 M6 3.5 h8 M6 6.5 h8" stroke="#cfcfcf"/></svg>
<div class="a" style="left:1143px;top:335px;width:223px;height:364px;background:#535353"></div>
<div class="a" style="left:1147px;top:340px;width:70px;height:19px;border:1px solid #343434;border-radius:3px;background:linear-gradient(#666,#505050)"></div>
<svg class="a" style="left:1152px;top:344px" width="12" height="12"><circle cx="7" cy="4.8" r="3.6" fill="none" stroke="#d0d0d0" stroke-width="1.3"/><path d="M4.5 7.5 L1 11" stroke="#d0d0d0" stroke-width="1.8"/></svg>
<div class="t" style="left:1169px;top:344px;font-size:10.3px;color:#ececec;">Kind</div>
<svg class="a" style="left:1206px;top:344px" width="7" height="11"><path d="M0.5 4.5 L3.5 1 L6.5 4.5Z M0.5 6.5 L3.5 10 L6.5 6.5Z" fill="#dcdcdc"/></svg>
<svg class="a" style="left:1225px;top:340px" width="141" height="20" fill="none" stroke="#bdbdbd">
 <rect x="4.5" y="3.5" width="13" height="10"/><path d="M6 12 l3 -4 l2 2 l2 -3 l3 5z" fill="#bdbdbd" stroke="none"/><path d="M14 5 v3 M12.5 6.5 h3" stroke-width=".8"/>
 <circle cx="33.5" cy="8.5" r="5.5" fill="#9a9a9a" stroke="#bdbdbd"/><path d="M29.5 12.5 L37.5 4.5" stroke="#535353" stroke-width="1.2"/><path d="M33.5 3 a5.5 5.5 0 0 1 0 11z" fill="#cfcfcf" stroke="none" opacity=".5"/>
 <path d="M53 3.5 H63 V6 M53 3.5 V6 M58 3.5 V14 M55.5 14 H60.5" stroke="#cfcfcf" stroke-width="1.4"/>
 <rect x="78.5" y="4.5" width="10" height="9"/><circle cx="78.5" cy="4.5" r="1.3" fill="#bdbdbd"/><circle cx="88.5" cy="4.5" r="1.3" fill="#bdbdbd"/><circle cx="78.5" cy="13.5" r="1.3" fill="#bdbdbd"/><circle cx="88.5" cy="13.5" r="1.3" fill="#bdbdbd"/>
 <path d="M105.5 3.5 h5 l3 3 v8 h-8z" fill="#9a9a9a"/><rect x="101" y="8" width="6" height="6" fill="#cfcfcf" stroke="none"/>
 <rect x="126.5" y="1.5" width="9" height="16" rx="1.5" fill="#3a3a3a" stroke="#2d2d2d"/><rect x="127.5" y="2.5" width="7" height="7" fill="#9a9a9a" stroke="none"/>
</svg>
<div class="a" style="left:1143px;top:362px;width:223px;height:1px;background:#3c3c3c"></div><div class="a" style="left:1143px;top:363px;width:223px;height:1px;background:#5e5e5e"></div>
<div class="a" style="left:1147px;top:368px;width:111px;height:19px;border:1px solid #454545;border-radius:3px;background:linear-gradient(#5c5c5c,#525252)"></div>
<div class="t" style="left:1155px;top:372px;font-size:10.3px;color:#9c9c9c;">Normal</div>
<svg class="a" style="left:1247px;top:372px" width="7" height="11"><path d="M0.5 4.5 L3.5 1 L6.5 4.5Z M0.5 6.5 L3.5 10 L6.5 6.5Z" fill="#8a8a8a"/></svg>
<div class="t" style="left:1265px;top:371px;font-size:10.3px;color:#a9a9a9;">Opacity:</div>
<div class="a" style="left:1307px;top:367px;width:53px;height:20px;border:1px solid #444;border-radius:2px;background:#4a4a4a"></div>
<div class="a" style="left:1341px;top:368px;width:19px;height:18px;background:#555;border-left:1px solid #3e3e3e"></div>
<div class="t" style="left:1313px;top:372px;font-size:10.3px;color:#7a7a7a;">100%</div>
<svg class="a" style="left:1347px;top:375px" width="7" height="4"><path d="M0 0 H6 L3 3.5Z" fill="#8a8a8a"/></svg>
<div class="a" style="left:1143px;top:390px;width:223px;height:1px;background:#3c3c3c"></div><div class="a" style="left:1143px;top:391px;width:223px;height:1px;background:#5e5e5e"></div>
<div class="t" style="left:1149px;top:400px;font-size:10.3px;color:#a9a9a9;">Lock:</div>
<svg class="a" style="left:1180px;top:396px" width="82" height="20">
 <rect x="1.5" y="3.5" width="11" height="11" fill="#8a8a8a"/><rect x="2" y="4" width="3.5" height="3.5" fill="#6a6a6a"/><rect x="9" y="4" width="3.5" height="3.5" fill="#6a6a6a"/><rect x="5.5" y="7.5" width="3.5" height="3.5" fill="#6a6a6a"/><rect x="2" y="11" width="3.5" height="3.5" fill="#6a6a6a"/><rect x="9" y="11" width="3.5" height="3.5" fill="#6a6a6a"/>
 <path d="M28 10 L38 1" stroke="#8a8a8a" stroke-width="2"/><path d="M22 17 Q23 12 27 10 Q30 11 29 13 Q26 17 22 17Z" fill="#8a8a8a"/>
 <path d="M52 2 V16 M45 9 H59" stroke="#8a8a8a" stroke-width="1.2"/><path d="M52 1 l-2.5 3 h5z M52 17 l-2.5 -3 h5z M44 9 l3 -2.5 v5z M60 9 l-3 -2.5 v5z" fill="#8a8a8a"/>
 <path d="M71.5 9 v-2.5 a3.5 3.5 0 0 1 7 0 v2.5" fill="none" stroke="#8a8a8a" stroke-width="1.6"/><rect x="69.5" y="9" width="11" height="8" fill="#8a8a8a"/>
</svg>
<div class="t" style="left:1287px;top:400px;font-size:10.3px;color:#a9a9a9;">Fill:</div>
<div class="a" style="left:1307px;top:396px;width:53px;height:19px;border:1px solid #444;border-radius:2px;background:#4a4a4a"></div>
<div class="a" style="left:1341px;top:397px;width:19px;height:17px;background:#555;border-left:1px solid #3e3e3e"></div>
<div class="t" style="left:1313px;top:401px;font-size:10.3px;color:#7a7a7a;">100%</div>
<svg class="a" style="left:1347px;top:404px" width="7" height="4"><path d="M0 0 H6 L3 3.5Z" fill="#8a8a8a"/></svg>
<div class="a" style="left:1143px;top:419px;width:223px;height:1px;background:#3a3a3a"></div>
<div class="a" style="left:1143px;top:420px;width:208px;height:279px;overflow:hidden">
<div class="a" style="left:30px;top:0;width:1px;height:279px;background:#3d3d3d"></div>
</div>
<div class="a" style="left:1143px;top:473px;width:208px;height:2px;background:#414141"></div>
<div class="a" style="left:1143px;top:538px;width:208px;height:2px;background:#414141"></div>
<div class="a" style="left:1143px;top:622px;width:208px;height:2px;background:#414141"></div>
<div class="a" style="left:1173px;top:420px;width:1px;height:279px;background:#404040"></div>
<div class="a" style="left:1177px;top:420px;width:32px;height:12px;border:1px solid #111;background-color:#fff;background-image:linear-gradient(45deg,#d0d0d0 25%,transparent 25%,transparent 75%,#d0d0d0 75%),linear-gradient(45deg,#d0d0d0 25%,transparent 25%,transparent 75%,#d0d0d0 75%);background-size:8px 8px;background-position:0 -4px,4px 0px"></div>
<div class="t" style="left:1219px;top:418px;font-size:10.3px;color:#e6e6e6;">Ellipse 3 copy</div>
<div class="a" style="left:1143px;top:414px;width:223px;height:5px;background:#535353"></div>
<div class="a" style="left:1143px;top:419px;width:223px;height:1px;background:#3a3a3a"></div>
<div class="t" style="left:1324px;top:417px;font-family:'Liberation Serif';font-style:italic;font-size:14px;color:#b8b8b8">fx</div>
<div class="a" style="left:1143px;top:414px;width:223px;height:5px;background:#535353"></div><div class="a" style="left:1143px;top:419px;width:223px;height:1px;background:#3a3a3a"></div>
<div class="a" style="left:1339px;top:420px;width:11px;height:16px;background:linear-gradient(90deg,#7a7a7a,#9a9a9a 50%,#7c7c7c)"></div>
<svg class="a" style="left:1192px;top:439px" width="14" height="10"><path d="M0.5 5.2 Q7 -2.2 13.5 5.2 Q7 12.2 0.5 5.2Z" fill="#c8c8c8"/><circle cx="7.2" cy="5.2" r="3.1" fill="#3a3a3a"/><circle cx="8" cy="4.3" r="0.9" fill="#cfcfcf"/></svg>
<div class="t" style="left:1212px;top:440px;font-size:10.3px;color:#e6e6e6;">Effects</div>
<svg class="a" style="left:1209px;top:458px" width="14" height="10"><path d="M0.5 5.2 Q7 -2.2 13.5 5.2 Q7 12.2 0.5 5.2Z" fill="#c8c8c8"/><circle cx="7.2" cy="5.2" r="3.1" fill="#3a3a3a"/><circle cx="8" cy="4.3" r="0.9" fill="#cfcfcf"/></svg>
<div class="t" style="left:1229px;top:459px;font-size:10.3px;color:#e6e6e6;">Color Overlay</div>
<svg class="a" style="left:1151px;top:482px" width="14" height="10"><path d="M0.5 5.2 Q7 -2.2 13.5 5.2 Q7 12.2 0.5 5.2Z" fill="#c8c8c8"/><circle cx="7.2" cy="5.2" r="3.1" fill="#3a3a3a"/><circle cx="8" cy="4.3" r="0.9" fill="#cfcfcf"/></svg>
<div class="a" style="left:1177px;top:477px;width:32px;height:20px;border:1px solid #111;background-color:#fff;background-image:linear-gradient(45deg,#d0d0d0 25%,transparent 25%,transparent 75%,#d0d0d0 75%),linear-gradient(45deg,#d0d0d0 25%,transparent 25%,transparent 75%,#d0d0d0 75%);background-size:8px 8px;background-position:0 0px,4px 4px"></div>
<div class="t" style="left:1219px;top:483px;font-size:10.3px;color:#e6e6e6;">Vector Smart Object...</div>
<div class="t" style="left:1324px;top:481px;font-family:'Liberation Serif';font-style:italic;font-size:14px;color:#b8b8b8">fx</div>
<div class="a" style="left:1339px;top:475px;width:11px;height:26px;background:linear-gradient(90deg,#7a7a7a,#9a9a9a 50%,#7c7c7c)"></div><svg class="a" style="left:1341px;top:485px" width="8" height="5"><path d="M0 4.5 L3.5 0.5 L7 4.5Z" fill="#e4e4e4"/></svg>
<svg class="a" style="left:1192px;top:505px" width="14" height="10"><path d="M0.5 5.2 Q7 -2.2 13.5 5.2 Q7 12.2 0.5 5.2Z" fill="#c8c8c8"/><circle cx="7.2" cy="5.2" r="3.1" fill="#3a3a3a"/><circle cx="8" cy="4.3" r="0.9" fill="#cfcfcf"/></svg>
<div class="t" style="left:1212px;top:506px;font-size:10.3px;color:#e6e6e6;">Effects</div>
<svg class="a" style="left:1209px;top:524px" width="14" height="10"><path d="M0.5 5.2 Q7 -2.2 13.5 5.2 Q7 12.2 0.5 5.2Z" fill="#c8c8c8"/><circle cx="7.2" cy="5.2" r="3.1" fill="#3a3a3a"/><circle cx="8" cy="4.3" r="0.9" fill="#cfcfcf"/></svg>
<div class="t" style="left:1229px;top:525px;font-size:10.3px;color:#e6e6e6;">Color Overlay</div>
<svg class="a" style="left:1151px;top:547px" width="14" height="10"><path d="M0.5 5.2 Q7 -2.2 13.5 5.2 Q7 12.2 0.5 5.2Z" fill="#c8c8c8"/><circle cx="7.2" cy="5.2" r="3.1" fill="#3a3a3a"/><circle cx="8" cy="4.3" r="0.9" fill="#cfcfcf"/></svg><svg class="a" style="left:1186px;top:545px" width="12" height="12"><path d="M1 1.5 H11 V4 M1 1.5 V4 M6 1.5 V10.5 M4 10.5 H8" fill="none" stroke="#c8c8c8" stroke-width="1.3"/></svg><svg class="a" style="left:1219px;top:546px" width="103" height="14"><path transform="scale(0.2772,0.3168)" d="M364.56 22.31 363.69 22.81 362.94 23.94 362.94 24.31 362.81 24.44 362.94 25.69 363.19 26.19 363.94 26.94 364.94 27.31 365.94 27.31 366.81 26.94 367.69 25.94 367.94 25.06 367.81 23.94 367.31 23.06 366.69 22.56 365.56 22.19ZM353.69 22.31 352.69 22.94 352.31 23.44 351.94 24.56 352.06 25.56 352.44 26.31 353.31 27.06 354.06 27.31 355.06 27.31 355.94 26.94 356.69 26.19 357.06 25.19 357.06 24.31 356.44 23.06 355.81 22.56 354.69 22.19ZM342.81 22.31 342.31 22.56 341.44 23.44 341.19 24.06 341.19 24.69 341.06 24.81 341.19 24.94 341.19 25.56 341.56 26.31 342.44 27.06 343.19 27.31 344.19 27.31 345.06 26.94 345.81 26.19 346.19 25.31 346.06 23.81 345.69 23.19 344.81 22.44 343.94 22.31 343.81 22.19ZM10.56 16.81 7.44 17.81 8.31 20.94 8.44 22.19 8.56 22.31 8.56 23.06 8.69 23.19 8.69 26.56 8.56 26.69 8.56 27.31 8.06 29.06 7.44 30.31 6.81 31.19 5.06 32.81 3.06 33.94 1.31 34.56 0.06 34.81 1.19 37.81 2.44 37.56 4.31 36.94 6.06 36.06 7.31 35.19 9.44 32.94 10.19 31.81 10.19 31.56 10.81 30.44 10.94 29.81 11.31 29.06 11.56 27.56 11.69 27.44 11.94 23.94 11.81 23.81 11.81 22.19 11.69 22.06 11.56 20.44ZM143.44 16.44 142.31 14.44 141.06 13.19 139.81 12.44 139.56 12.44 138.94 12.06 138.56 12.06 137.94 11.81 137.31 11.81 137.19 11.69 135.31 11.69 135.19 11.81 134.56 11.81 134.06 12.06 133.69 12.06 131.69 12.94 130.19 13.94 127.06 16.94 124.94 19.69 123.69 21.56 123.19 22.56 122.56 23.31 121.81 23.06 121.19 22.31 121.19 22.06 120.94 21.69 120.81 20.69 120.69 20.56 120.69 19.31 120.56 19.19 120.44 15.56 117.44 15.81 117.31 15.94 117.31 17.81 117.44 17.94 117.44 20.06 117.31 20.19 117.31 20.81 116.81 22.19 115.94 23.19 114.31 23.81 112.06 23.81 111.94 23.94 101.69 23.94 101.56 24.06 101.56 24.69 101.81 25.19 102.06 26.44 102.31 26.81 102.31 27.06 102.56 27.31 106.56 27.31 106.69 27.44 107.19 27.44 107.94 27.69 108.94 28.56 109.31 29.69 109.19 29.81 109.19 30.19 108.81 30.81 107.94 31.69 106.81 32.44 104.81 33.31 104.44 33.31 103.31 33.69 102.81 33.69 102.69 33.81 101.81 33.81 101.69 33.94 98.31 33.94 98.19 33.81 96.69 33.69 95.31 33.19 94.44 32.69 93.19 31.56 92.31 30.19 91.69 28.06 91.69 27.06 91.56 26.94 91.56 25.31 91.69 25.19 91.81 22.94 91.94 22.81 91.94 22.31 92.06 22.19 92.44 20.31 89.44 19.19 88.81 21.44 88.81 21.94 88.56 22.69 88.56 23.69 88.44 23.81 88.31 26.44 88.44 26.56 88.56 28.94 88.69 29.06 89.06 30.81 90.06 32.94 90.69 33.81 91.94 35.06 93.19 35.94 95.19 36.81 96.69 37.06 96.81 37.19 97.44 37.19 97.56 37.31 99.69 37.31 99.81 37.44 99.94 37.31 102.19 37.31 102.31 37.19 103.19 37.19 103.31 37.06 104.44 36.94 106.19 36.44 108.56 35.31 109.94 34.31 111.19 32.94 111.94 31.56 112.31 30.31 112.31 28.69 111.94 27.69 112.06 27.31 113.81 27.31 113.94 27.19 114.81 27.19 116.06 26.81 117.56 25.94 118.94 24.44 120.31 25.69 121.69 26.44 123.44 26.94 123.94 26.94 124.06 27.06 126.19 27.19 126.31 27.31 131.69 27.31 131.81 27.19 133.44 27.19 133.56 27.06 135.31 26.94 135.44 26.81 136.56 26.69 138.31 26.19 140.44 25.19 141.19 24.69 142.44 23.44 143.31 21.94 143.69 20.69 143.69 19.94 143.81 19.81 143.81 18.06 143.69 17.94ZM140.31 17.81 140.31 18.19 140.44 18.31 140.44 19.94 140.19 20.69 138.81 22.19 137.69 22.81 136.19 23.31 134.31 23.56 134.19 23.69 133.19 23.69 133.06 23.81 126.31 23.81 126.19 23.69 127.81 21.31 129.31 19.44 132.19 16.69 134.19 15.56 135.31 15.19 137.44 15.19 138.19 15.44 138.81 15.81 139.81 16.81ZM21.44 8.69 21.19 8.81 19.81 11.69 23.19 13.69 24.81 14.94 26.56 16.69 27.31 17.81 27.69 18.69 27.69 19.06 27.81 19.19 27.81 20.81 27.44 21.69 26.44 22.69 25.81 23.06 24.31 23.56 23.06 23.69 22.94 23.81 21.56 23.81 21.44 23.94 19.44 23.94 19.31 23.81 18.06 23.81 17.94 23.69 17.19 23.69 17.06 23.56 15.94 23.44 15.94 26.81 16.19 26.94 17.81 27.06 17.94 27.19 19.31 27.19 19.44 27.31 21.44 27.31 21.56 27.19 24.19 27.06 24.31 26.94 24.94 26.94 25.06 26.81 25.94 26.69 27.31 26.19 28.94 25.19 30.06 23.94 30.81 22.19 30.81 21.81 31.06 21.19 31.06 18.94 30.94 18.81 30.94 18.19 30.44 16.69 29.44 14.94 28.31 13.56 26.56 11.94 24.06 10.19 21.69 8.94ZM198.81 6.31 196.19 8.94 198.94 11.56 201.44 8.94ZM192.31 6.31 189.69 8.94 192.44 11.56 194.94 9.06 194.94 8.81ZM292.94 4.44 290.31 7.19 293.06 9.94 295.81 7.19ZM216.69 2.69 214.06 5.44 216.81 8.19 219.44 5.31ZM280.44 0.56 280.44 20.69 280.56 20.81 280.56 21.56 280.69 21.69 280.94 23.19 281.44 24.31 281.94 25.06 283.31 26.31 284.31 26.81 285.06 27.06 285.56 27.06 285.69 27.19 286.44 27.19 286.56 27.31 291.69 27.31 291.81 27.19 292.94 27.06 293.94 26.69 294.56 26.31 295.81 25.06 296.56 23.69 297.06 21.94 297.31 19.06 297.19 18.94 297.06 16.06 296.94 15.94 296.94 15.19 296.81 15.06 296.56 13.44 293.31 14.19 293.31 14.81 293.44 14.94 293.69 16.94 293.81 17.06 293.81 17.81 293.94 17.94 293.94 19.69 294.06 19.94 293.94 20.06 293.94 21.06 293.56 22.31 292.56 23.44 291.69 23.81 286.44 23.81 286.31 23.69 285.94 23.69 284.81 23.06 284.44 22.69 283.94 21.81 283.69 20.94 283.69 19.94 283.56 19.81 283.56 0.56ZM274.31 0.56 271.19 0.56 271.19 26.69 271.06 26.81 270.94 28.44 270.44 30.06 269.69 31.31 268.56 32.44 267.19 33.19 266.31 33.44 265.69 33.44 265.56 33.56 262.56 33.56 262.44 33.44 261.19 33.31 260.44 32.94 260.19 32.94 259.31 32.44 258.31 31.44 257.56 30.19 257.19 28.94 257.19 28.31 257.06 28.19 257.06 25.19 257.19 25.06 257.31 23.44 257.44 23.31 257.56 22.31 257.69 22.19 258.31 19.56 255.31 18.31 254.94 19.44 254.94 19.81 254.69 20.31 254.69 20.69 254.31 21.81 254.31 22.31 254.19 22.44 254.19 22.94 254.06 23.06 254.06 23.69 253.94 23.81 253.94 24.81 253.81 24.94 253.81 28.31 253.94 28.44 253.94 29.19 254.06 29.31 254.06 29.81 254.19 29.94 254.44 31.19 255.56 33.44 256.69 34.69 258.06 35.69 260.19 36.56 261.19 36.69 261.31 36.81 262.06 36.81 262.19 36.94 265.81 36.94 265.94 36.81 266.69 36.81 266.81 36.69 267.31 36.69 267.81 36.44 268.19 36.44 270.06 35.56 270.81 35.06 271.94 33.94 273.19 31.94 273.94 29.69 274.06 28.44 274.19 28.31 274.19 27.44 274.31 27.31ZM234.81 0.56 234.81 27.31 237.94 27.31 238.06 27.19 238.06 0.56ZM148.81 0.56 148.81 20.31 148.94 20.44 149.06 22.19 149.31 22.69 149.44 23.44 150.44 25.19 151.19 25.94 151.94 26.44 153.44 27.06 154.94 27.19 155.06 27.31 157.69 27.31 157.81 27.19 158.69 27.19 158.81 27.06 159.69 26.94 161.19 26.19 163.06 24.44 164.06 25.56 165.69 26.44 167.94 27.06 168.69 27.06 168.81 27.19 170.19 27.19 170.31 27.31 175.56 27.31 175.69 27.19 177.19 27.19 177.31 27.06 178.19 27.06 178.31 26.94 179.69 26.81 179.81 26.69 181.19 26.44 183.69 25.44 185.56 26.56 187.19 27.06 188.81 27.19 188.94 27.31 194.06 27.31 194.19 27.19 195.31 27.06 197.44 26.19 198.69 25.19 199.31 24.31 200.56 25.94 201.44 26.56 203.06 27.19 203.69 27.19 203.81 27.31 209.56 27.31 209.69 27.19 211.06 27.19 211.19 27.06 211.94 27.06 212.06 26.94 213.19 26.81 216.06 25.94 218.44 24.81 218.69 24.81 225.44 21.31 225.69 21.31 227.19 20.56 228.31 20.19 228.69 20.19 229.19 19.94 229.81 19.94 229.94 19.81 229.94 16.56 228.94 16.56 228.81 16.44 228.19 16.44 228.06 16.31 226.69 16.06 226.31 15.81 223.94 15.06 223.31 14.69 223.06 14.69 219.94 13.19 219.69 13.19 217.19 12.06 215.44 11.56 214.06 11.56 213.94 11.69 213.19 11.69 212.31 11.94 210.69 12.81 209.06 14.31 208.44 15.06 207.56 16.56 210.44 17.94 211.56 16.56 213.06 15.31 214.06 14.94 215.06 14.94 218.69 16.19 222.81 17.94 223.81 18.19 224.19 18.44 223.06 19.06 222.81 19.06 220.19 20.44 219.94 20.44 218.06 21.44 217.81 21.44 216.94 21.94 214.69 22.69 214.31 22.94 213.44 23.06 211.94 23.56 211.31 23.56 211.19 23.69 210.44 23.69 210.31 23.81 203.69 23.81 202.94 23.56 202.19 23.06 201.56 22.31 201.19 21.56 201.06 20.69 200.94 20.56 200.94 19.31 200.81 19.19 200.69 15.56 199.69 15.56 199.56 15.69 198.69 15.69 198.56 15.81 197.69 15.81 197.44 15.94 197.56 16.19 197.56 17.81 197.69 17.94 197.56 20.81 196.94 22.31 195.94 23.31 194.56 23.81 187.56 23.81 186.31 23.44 187.31 21.56 187.56 20.69 187.56 20.19 187.69 20.06 187.69 17.81 187.56 17.69 187.56 17.19 187.31 16.31 186.44 14.69 185.94 14.06 184.81 13.06 183.19 12.19 182.44 11.94 181.31 11.81 181.19 11.69 179.19 11.69 179.06 11.81 177.56 12.06 175.44 13.06 173.06 14.81 171.44 16.44 170.06 18.06 168.69 19.94 166.56 23.31 165.81 23.06 165.06 22.19 164.69 20.94 164.69 20.31 164.56 20.19 164.56 18.44 164.44 18.31 164.31 15.56 163.44 15.56 163.31 15.69 162.44 15.69 162.31 15.81 161.44 15.81 161.19 15.94 161.19 17.06 161.31 17.19 161.31 20.56 160.69 22.31 159.69 23.31 158.19 23.81 154.81 23.81 153.56 23.31 152.81 22.69 152.31 21.81 152.31 21.44 152.06 20.81 152.06 0.56ZM184.19 17.69 184.44 19.44 183.94 20.94 183.06 21.94 181.31 22.94 179.56 23.44 178.19 23.56 178.06 23.69 177.19 23.69 177.06 23.81 170.31 23.81 170.19 23.69 171.56 21.56 173.56 19.06 175.94 16.81 178.06 15.56 179.19 15.19 181.31 15.19 181.44 15.31 181.81 15.31 182.94 15.94 183.81 16.94ZM46.81 0.56 46.81 19.06 46.94 19.19 46.94 21.06 47.06 21.19 47.06 21.94 47.19 22.06 47.44 23.31 47.81 24.19 48.69 25.44 50.19 26.56 51.56 27.06 52.94 27.19 53.06 27.31 55.69 27.31 55.81 27.19 56.56 27.19 57.31 26.94 58.81 26.06 60.44 24.44 60.81 24.56 61.69 25.44 63.69 26.81 65.56 27.56 66.06 27.56 66.19 27.69 68.94 27.69 69.06 27.56 69.94 27.44 71.19 26.81 71.81 26.31 72.56 25.44 73.19 24.19 73.44 23.31 73.44 22.81 73.56 22.69 73.56 19.69 73.44 19.56 73.31 18.56 72.56 16.81 72.06 16.06 70.81 14.81 69.31 13.94 68.19 13.56 67.56 13.56 67.44 13.44 65.56 13.44 65.44 13.56 64.94 13.56 63.44 14.19 62.44 14.94 61.44 16.06 60.69 17.19 58.31 21.56 56.69 23.31 55.56 23.81 52.81 23.81 51.56 23.31 50.69 22.44 50.31 21.69 50.19 20.44 50.06 20.31 50.06 0.56ZM65.94 16.81 67.31 16.81 68.19 17.06 68.94 17.56 69.94 18.81 70.44 20.56 70.44 22.19 69.94 23.44 69.44 23.94 68.69 24.31 66.94 24.44 66.06 24.19 64.44 23.31 63.44 22.56 62.19 21.31 62.81 19.94 63.69 18.56 64.94 17.31ZM326.19 0.06 325.81 0.31 323.06 1.31 322.44 1.69 319.06 2.94 318.44 3.31 318.19 3.31 317.81 3.56 317.56 3.56 317.19 3.81 313.81 5.06 313.19 5.44 312.31 5.69 311.44 6.19 310.69 7.19 310.56 7.56 310.56 9.06 311.06 10.06 312.19 11.19 317.94 15.44 320.06 17.56 321.06 19.31 321.19 21.19 320.81 22.19 320.06 22.94 319.06 23.44 318.06 23.56 317.94 23.69 317.06 23.69 316.94 23.81 308.31 23.81 307.06 23.31 306.69 23.06 306.06 22.31 305.69 21.44 305.56 19.94 305.44 19.81 305.44 0.56 302.31 0.56 302.31 20.69 302.44 20.81 302.56 22.19 303.06 23.81 303.81 25.06 304.69 25.94 306.19 26.81 306.94 27.06 307.44 27.06 307.56 27.19 308.31 27.19 308.44 27.31 316.06 27.31 316.19 27.19 318.19 27.06 318.31 26.94 318.81 26.94 318.94 26.81 319.44 26.81 320.31 26.56 321.94 25.81 323.44 24.44 323.94 23.56 324.31 22.44 324.31 21.94 324.44 21.81 324.44 19.44 324.31 19.31 324.31 18.81 324.06 18.06 323.31 16.56 322.31 15.19 320.06 12.94 317.19 10.69 314.56 8.94 314.06 8.44 314.94 7.94 315.19 7.94 317.69 6.81 317.94 6.81 319.56 6.06 320.19 5.94 320.81 5.56 321.06 5.56 326.19 3.44Z" fill="#e6e6e6" fill-rule="evenodd"/></svg><div class="t" style="left:1324px;top:547px;font-family:'Liberation Serif';font-style:italic;font-size:14px;color:#b8b8b8">fx</div>
<div class="a" style="left:1339px;top:539px;width:11px;height:27px;background:linear-gradient(90deg,#7a7a7a,#9a9a9a 50%,#7c7c7c)"></div><svg class="a" style="left:1341px;top:549px" width="8" height="5"><path d="M0 4.5 L3.5 0.5 L7 4.5Z" fill="#e4e4e4"/></svg>
<svg class="a" style="left:1192px;top:570px" width="14" height="10"><path d="M0.5 5.2 Q7 -2.2 13.5 5.2 Q7 12.2 0.5 5.2Z" fill="#c8c8c8"/><circle cx="7.2" cy="5.2" r="3.1" fill="#3a3a3a"/><circle cx="8" cy="4.3" r="0.9" fill="#cfcfcf"/></svg>
<div class="t" style="left:1212px;top:571px;font-size:10.3px;color:#e6e6e6;">Effects</div>
<div class="t" style="left:1229px;top:590px;font-size:10.3px;color:#e6e6e6;">Color Overlay</div>
<div class="t" style="left:1229px;top:609px;font-size:10.3px;color:#e6e6e6;">Gradient Overlay</div>
<svg class="a" style="left:1151px;top:631px" width="14" height="10"><path d="M0.5 5.2 Q7 -2.2 13.5 5.2 Q7 12.2 0.5 5.2Z" fill="#c8c8c8"/><circle cx="7.2" cy="5.2" r="3.1" fill="#3a3a3a"/><circle cx="8" cy="4.3" r="0.9" fill="#cfcfcf"/></svg><svg class="a" style="left:1186px;top:629px" width="12" height="12"><path d="M1 1.5 H11 V4 M1 1.5 V4 M6 1.5 V10.5 M4 10.5 H8" fill="none" stroke="#c8c8c8" stroke-width="1.3"/></svg><svg class="a" style="left:1219px;top:630px" width="103" height="14"><path transform="scale(0.2772,0.3168)" d="M364.56 22.31 363.69 22.81 362.94 23.94 362.94 24.31 362.81 24.44 362.94 25.69 363.19 26.19 363.94 26.94 364.94 27.31 365.94 27.31 366.81 26.94 367.69 25.94 367.94 25.06 367.81 23.94 367.31 23.06 366.69 22.56 365.56 22.19ZM353.69 22.31 352.69 22.94 352.31 23.44 351.94 24.56 352.06 25.56 352.44 26.31 353.31 27.06 354.06 27.31 355.06 27.31 355.94 26.94 356.69 26.19 357.06 25.19 357.06 24.31 356.44 23.06 355.81 22.56 354.69 22.19ZM342.81 22.31 342.31 22.56 341.44 23.44 341.19 24.06 341.19 24.69 341.06 24.81 341.19 24.94 341.19 25.56 341.56 26.31 342.44 27.06 343.19 27.31 344.19 27.31 345.06 26.94 345.81 26.19 346.19 25.31 346.06 23.81 345.69 23.19 344.81 22.44 343.94 22.31 343.81 22.19ZM10.56 16.81 7.44 17.81 8.31 20.94 8.44 22.19 8.56 22.31 8.56 23.06 8.69 23.19 8.69 26.56 8.56 26.69 8.56 27.31 8.06 29.06 7.44 30.31 6.81 31.19 5.06 32.81 3.06 33.94 1.31 34.56 0.06 34.81 1.19 37.81 2.44 37.56 4.31 36.94 6.06 36.06 7.31 35.19 9.44 32.94 10.19 31.81 10.19 31.56 10.81 30.44 10.94 29.81 11.31 29.06 11.56 27.56 11.69 27.44 11.94 23.94 11.81 23.81 11.81 22.19 11.69 22.06 11.56 20.44ZM143.44 16.44 142.31 14.44 141.06 13.19 139.81 12.44 139.56 12.44 138.94 12.06 138.56 12.06 137.94 11.81 137.31 11.81 137.19 11.69 135.31 11.69 135.19 11.81 134.56 11.81 134.06 12.06 133.69 12.06 131.69 12.94 130.19 13.94 127.06 16.94 124.94 19.69 123.69 21.56 123.19 22.56 122.56 23.31 121.81 23.06 121.19 22.31 121.19 22.06 120.94 21.69 120.81 20.69 120.69 20.56 120.69 19.31 120.56 19.19 120.44 15.56 117.44 15.81 117.31 15.94 117.31 17.81 117.44 17.94 117.44 20.06 117.31 20.19 117.31 20.81 116.81 22.19 115.94 23.19 114.31 23.81 112.06 23.81 111.94 23.94 101.69 23.94 101.56 24.06 101.56 24.69 101.81 25.19 102.06 26.44 102.31 26.81 102.31 27.06 102.56 27.31 106.56 27.31 106.69 27.44 107.19 27.44 107.94 27.69 108.94 28.56 109.31 29.69 109.19 29.81 109.19 30.19 108.81 30.81 107.94 31.69 106.81 32.44 104.81 33.31 104.44 33.31 103.31 33.69 102.81 33.69 102.69 33.81 101.81 33.81 101.69 33.94 98.31 33.94 98.19 33.81 96.69 33.69 95.31 33.19 94.44 32.69 93.19 31.56 92.31 30.19 91.69 28.06 91.69 27.06 91.56 26.94 91.56 25.31 91.69 25.19 91.81 22.94 91.94 22.81 91.94 22.31 92.06 22.19 92.44 20.31 89.44 19.19 88.81 21.44 88.81 21.94 88.56 22.69 88.56 23.69 88.44 23.81 88.31 26.44 88.44 26.56 88.56 28.94 88.69 29.06 89.06 30.81 90.06 32.94 90.69 33.81 91.94 35.06 93.19 35.94 95.19 36.81 96.69 37.06 96.81 37.19 97.44 37.19 97.56 37.31 99.69 37.31 99.81 37.44 99.94 37.31 102.19 37.31 102.31 37.19 103.19 37.19 103.31 37.06 104.44 36.94 106.19 36.44 108.56 35.31 109.94 34.31 111.19 32.94 111.94 31.56 112.31 30.31 112.31 28.69 111.94 27.69 112.06 27.31 113.81 27.31 113.94 27.19 114.81 27.19 116.06 26.81 117.56 25.94 118.94 24.44 120.31 25.69 121.69 26.44 123.44 26.94 123.94 26.94 124.06 27.06 126.19 27.19 126.31 27.31 131.69 27.31 131.81 27.19 133.44 27.19 133.56 27.06 135.31 26.94 135.44 26.81 136.56 26.69 138.31 26.19 140.44 25.19 141.19 24.69 142.44 23.44 143.31 21.94 143.69 20.69 143.69 19.94 143.81 19.81 143.81 18.06 143.69 17.94ZM140.31 17.81 140.31 18.19 140.44 18.31 140.44 19.94 140.19 20.69 138.81 22.19 137.69 22.81 136.19 23.31 134.31 23.56 134.19 23.69 133.19 23.69 133.06 23.81 126.31 23.81 126.19 23.69 127.81 21.31 129.31 19.44 132.19 16.69 134.19 15.56 135.31 15.19 137.44 15.19 138.19 15.44 138.81 15.81 139.81 16.81ZM21.44 8.69 21.19 8.81 19.81 11.69 23.19 13.69 24.81 14.94 26.56 16.69 27.31 17.81 27.69 18.69 27.69 19.06 27.81 19.19 27.81 20.81 27.44 21.69 26.44 22.69 25.81 23.06 24.31 23.56 23.06 23.69 22.94 23.81 21.56 23.81 21.44 23.94 19.44 23.94 19.31 23.81 18.06 23.81 17.94 23.69 17.19 23.69 17.06 23.56 15.94 23.44 15.94 26.81 16.19 26.94 17.81 27.06 17.94 27.19 19.31 27.19 19.44 27.31 21.44 27.31 21.56 27.19 24.19 27.06 24.31 26.94 24.94 26.94 25.06 26.81 25.94 26.69 27.31 26.19 28.94 25.19 30.06 23.94 30.81 22.19 30.81 21.81 31.06 21.19 31.06 18.94 30.94 18.81 30.94 18.19 30.44 16.69 29.44 14.94 28.31 13.56 26.56 11.94 24.06 10.19 21.69 8.94ZM198.81 6.31 196.19 8.94 198.94 11.56 201.44 8.94ZM192.31 6.31 189.69 8.94 192.44 11.56 194.94 9.06 194.94 8.81ZM292.94 4.44 290.31 7.19 293.06 9.94 295.81 7.19ZM216.69 2.69 214.06 5.44 216.81 8.19 219.44 5.31ZM280.44 0.56 280.44 20.69 280.56 20.81 280.56 21.56 280.69 21.69 280.94 23.19 281.44 24.31 281.94 25.06 283.31 26.31 284.31 26.81 285.06 27.06 285.56 27.06 285.69 27.19 286.44 27.19 286.56 27.31 291.69 27.31 291.81 27.19 292.94 27.06 293.94 26.69 294.56 26.31 295.81 25.06 296.56 23.69 297.06 21.94 297.31 19.06 297.19 18.94 297.06 16.06 296.94 15.94 296.94 15.19 296.81 15.06 296.56 13.44 293.31 14.19 293.31 14.81 293.44 14.94 293.69 16.94 293.81 17.06 293.81 17.81 293.94 17.94 293.94 19.69 294.06 19.94 293.94 20.06 293.94 21.06 293.56 22.31 292.56 23.44 291.69 23.81 286.44 23.81 286.31 23.69 285.94 23.69 284.81 23.06 284.44 22.69 283.94 21.81 283.69 20.94 283.69 19.94 283.56 19.81 283.56 0.56ZM274.31 0.56 271.19 0.56 271.19 26.69 271.06 26.81 270.94 28.44 270.44 30.06 269.69 31.31 268.56 32.44 267.19 33.19 266.31 33.44 265.69 33.44 265.56 33.56 262.56 33.56 262.44 33.44 261.19 33.31 260.44 32.94 260.19 32.94 259.31 32.44 258.31 31.44 257.56 30.19 257.19 28.94 257.19 28.31 257.06 28.19 257.06 25.19 257.19 25.06 257.31 23.44 257.44 23.31 257.56 22.31 257.69 22.19 258.31 19.56 255.31 18.31 254.94 19.44 254.94 19.81 254.69 20.31 254.69 20.69 254.31 21.81 254.31 22.31 254.19 22.44 254.19 22.94 254.06 23.06 254.06 23.69 253.94 23.81 253.94 24.81 253.81 24.94 253.81 28.31 253.94 28.44 253.94 29.19 254.06 29.31 254.06 29.81 254.19 29.94 254.44 31.19 255.56 33.44 256.69 34.69 258.06 35.69 260.19 36.56 261.19 36.69 261.31 36.81 262.06 36.81 262.19 36.94 265.81 36.94 265.94 36.81 266.69 36.81 266.81 36.69 267.31 36.69 267.81 36.44 268.19 36.44 270.06 35.56 270.81 35.06 271.94 33.94 273.19 31.94 273.94 29.69 274.06 28.44 274.19 28.31 274.19 27.44 274.31 27.31ZM234.81 0.56 234.81 27.31 237.94 27.31 238.06 27.19 238.06 0.56ZM148.81 0.56 148.81 20.31 148.94 20.44 149.06 22.19 149.31 22.69 149.44 23.44 150.44 25.19 151.19 25.94 151.94 26.44 153.44 27.06 154.94 27.19 155.06 27.31 157.69 27.31 157.81 27.19 158.69 27.19 158.81 27.06 159.69 26.94 161.19 26.19 163.06 24.44 164.06 25.56 165.69 26.44 167.94 27.06 168.69 27.06 168.81 27.19 170.19 27.19 170.31 27.31 175.56 27.31 175.69 27.19 177.19 27.19 177.31 27.06 178.19 27.06 178.31 26.94 179.69 26.81 179.81 26.69 181.19 26.44 183.69 25.44 185.56 26.56 187.19 27.06 188.81 27.19 188.94 27.31 194.06 27.31 194.19 27.19 195.31 27.06 197.44 26.19 198.69 25.19 199.31 24.31 200.56 25.94 201.44 26.56 203.06 27.19 203.69 27.19 203.81 27.31 209.56 27.31 209.69 27.19 211.06 27.19 211.19 27.06 211.94 27.06 212.06 26.94 213.19 26.81 216.06 25.94 218.44 24.81 218.69 24.81 225.44 21.31 225.69 21.31 227.19 20.56 228.31 20.19 228.69 20.19 229.19 19.94 229.81 19.94 229.94 19.81 229.94 16.56 228.94 16.56 228.81 16.44 228.19 16.44 228.06 16.31 226.69 16.06 226.31 15.81 223.94 15.06 223.31 14.69 223.06 14.69 219.94 13.19 219.69 13.19 217.19 12.06 215.44 11.56 214.06 11.56 213.94 11.69 213.19 11.69 212.31 11.94 210.69 12.81 209.06 14.31 208.44 15.06 207.56 16.56 210.44 17.94 211.56 16.56 213.06 15.31 214.06 14.94 215.06 14.94 218.69 16.19 222.81 17.94 223.81 18.19 224.19 18.44 223.06 19.06 222.81 19.06 220.19 20.44 219.94 20.44 218.06 21.44 217.81 21.44 216.94 21.94 214.69 22.69 214.31 22.94 213.44 23.06 211.94 23.56 211.31 23.56 211.19 23.69 210.44 23.69 210.31 23.81 203.69 23.81 202.94 23.56 202.19 23.06 201.56 22.31 201.19 21.56 201.06 20.69 200.94 20.56 200.94 19.31 200.81 19.19 200.69 15.56 199.69 15.56 199.56 15.69 198.69 15.69 198.56 15.81 197.69 15.81 197.44 15.94 197.56 16.19 197.56 17.81 197.69 17.94 197.56 20.81 196.94 22.31 195.94 23.31 194.56 23.81 187.56 23.81 186.31 23.44 187.31 21.56 187.56 20.69 187.56 20.19 187.69 20.06 187.69 17.81 187.56 17.69 187.56 17.19 187.31 16.31 186.44 14.69 185.94 14.06 184.81 13.06 183.19 12.19 182.44 11.94 181.31 11.81 181.19 11.69 179.19 11.69 179.06 11.81 177.56 12.06 175.44 13.06 173.06 14.81 171.44 16.44 170.06 18.06 168.69 19.94 166.56 23.31 165.81 23.06 165.06 22.19 164.69 20.94 164.69 20.31 164.56 20.19 164.56 18.44 164.44 18.31 164.31 15.56 163.44 15.56 163.31 15.69 162.44 15.69 162.31 15.81 161.44 15.81 161.19 15.94 161.19 17.06 161.31 17.19 161.31 20.56 160.69 22.31 159.69 23.31 158.19 23.81 154.81 23.81 153.56 23.31 152.81 22.69 152.31 21.81 152.31 21.44 152.06 20.81 152.06 0.56ZM184.19 17.69 184.44 19.44 183.94 20.94 183.06 21.94 181.31 22.94 179.56 23.44 178.19 23.56 178.06 23.69 177.19 23.69 177.06 23.81 170.31 23.81 170.19 23.69 171.56 21.56 173.56 19.06 175.94 16.81 178.06 15.56 179.19 15.19 181.31 15.19 181.44 15.31 181.81 15.31 182.94 15.94 183.81 16.94ZM46.81 0.56 46.81 19.06 46.94 19.19 46.94 21.06 47.06 21.19 47.06 21.94 47.19 22.06 47.44 23.31 47.81 24.19 48.69 25.44 50.19 26.56 51.56 27.06 52.94 27.19 53.06 27.31 55.69 27.31 55.81 27.19 56.56 27.19 57.31 26.94 58.81 26.06 60.44 24.44 60.81 24.56 61.69 25.44 63.69 26.81 65.56 27.56 66.06 27.56 66.19 27.69 68.94 27.69 69.06 27.56 69.94 27.44 71.19 26.81 71.81 26.31 72.56 25.44 73.19 24.19 73.44 23.31 73.44 22.81 73.56 22.69 73.56 19.69 73.44 19.56 73.31 18.56 72.56 16.81 72.06 16.06 70.81 14.81 69.31 13.94 68.19 13.56 67.56 13.56 67.44 13.44 65.56 13.44 65.44 13.56 64.94 13.56 63.44 14.19 62.44 14.94 61.44 16.06 60.69 17.19 58.31 21.56 56.69 23.31 55.56 23.81 52.81 23.81 51.56 23.31 50.69 22.44 50.31 21.69 50.19 20.44 50.06 20.31 50.06 0.56ZM65.94 16.81 67.31 16.81 68.19 17.06 68.94 17.56 69.94 18.81 70.44 20.56 70.44 22.19 69.94 23.44 69.44 23.94 68.69 24.31 66.94 24.44 66.06 24.19 64.44 23.31 63.44 22.56 62.19 21.31 62.81 19.94 63.69 18.56 64.94 17.31ZM326.19 0.06 325.81 0.31 323.06 1.31 322.44 1.69 319.06 2.94 318.44 3.31 318.19 3.31 317.81 3.56 317.56 3.56 317.19 3.81 313.81 5.06 313.19 5.44 312.31 5.69 311.44 6.19 310.69 7.19 310.56 7.56 310.56 9.06 311.06 10.06 312.19 11.19 317.94 15.44 320.06 17.56 321.06 19.31 321.19 21.19 320.81 22.19 320.06 22.94 319.06 23.44 318.06 23.56 317.94 23.69 317.06 23.69 316.94 23.81 308.31 23.81 307.06 23.31 306.69 23.06 306.06 22.31 305.69 21.44 305.56 19.94 305.44 19.81 305.44 0.56 302.31 0.56 302.31 20.69 302.44 20.81 302.56 22.19 303.06 23.81 303.81 25.06 304.69 25.94 306.19 26.81 306.94 27.06 307.44 27.06 307.56 27.19 308.31 27.19 308.44 27.31 316.06 27.31 316.19 27.19 318.19 27.06 318.31 26.94 318.81 26.94 318.94 26.81 319.44 26.81 320.31 26.56 321.94 25.81 323.44 24.44 323.94 23.56 324.31 22.44 324.31 21.94 324.44 21.81 324.44 19.44 324.31 19.31 324.31 18.81 324.06 18.06 323.31 16.56 322.31 15.19 320.06 12.94 317.19 10.69 314.56 8.94 314.06 8.44 314.94 7.94 315.19 7.94 317.69 6.81 317.94 6.81 319.56 6.06 320.19 5.94 320.81 5.56 321.06 5.56 326.19 3.44Z" fill="#e6e6e6" fill-rule="evenodd"/></svg><div class="t" style="left:1324px;top:631px;font-family:'Liberation Serif';font-style:italic;font-size:14px;color:#b8b8b8">fx</div>
<div class="a" style="left:1339px;top:623px;width:11px;height:27px;background:linear-gradient(90deg,#7a7a7a,#9a9a9a 50%,#7c7c7c)"></div><svg class="a" style="left:1341px;top:633px" width="8" height="5"><path d="M0 4.5 L3.5 0.5 L7 4.5Z" fill="#e4e4e4"/></svg>
<svg class="a" style="left:1192px;top:654px" width="14" height="10"><path d="M0.5 5.2 Q7 -2.2 13.5 5.2 Q7 12.2 0.5 5.2Z" fill="#c8c8c8"/><circle cx="7.2" cy="5.2" r="3.1" fill="#3a3a3a"/><circle cx="8" cy="4.3" r="0.9" fill="#cfcfcf"/></svg>
<div class="t" style="left:1212px;top:655px;font-size:10.3px;color:#e6e6e6;">Effects</div>
<div class="t" style="left:1229px;top:674px;font-size:10.3px;color:#e6e6e6;">Color Overlay</div>
<div class="t" style="left:1229px;top:693px;font-size:10.3px;color:#e6e6e6;">Gradient Overlay</div>
<div class="a" style="left:1351px;top:420px;width:15px;height:279px;background:#3d3d3d"></div>
<svg class="a" style="left:1354px;top:425px" width="8" height="5"><path d="M0 4.5 L4 0.5 L8 4.5Z" fill="#e0e0e0"/></svg>
<div class="a" style="left:1353px;top:468px;width:10px;height:76px;border-radius:5px;background:linear-gradient(90deg,#6e6e6e,#8e8e8e 50%,#747474)"></div>

</body></html>
